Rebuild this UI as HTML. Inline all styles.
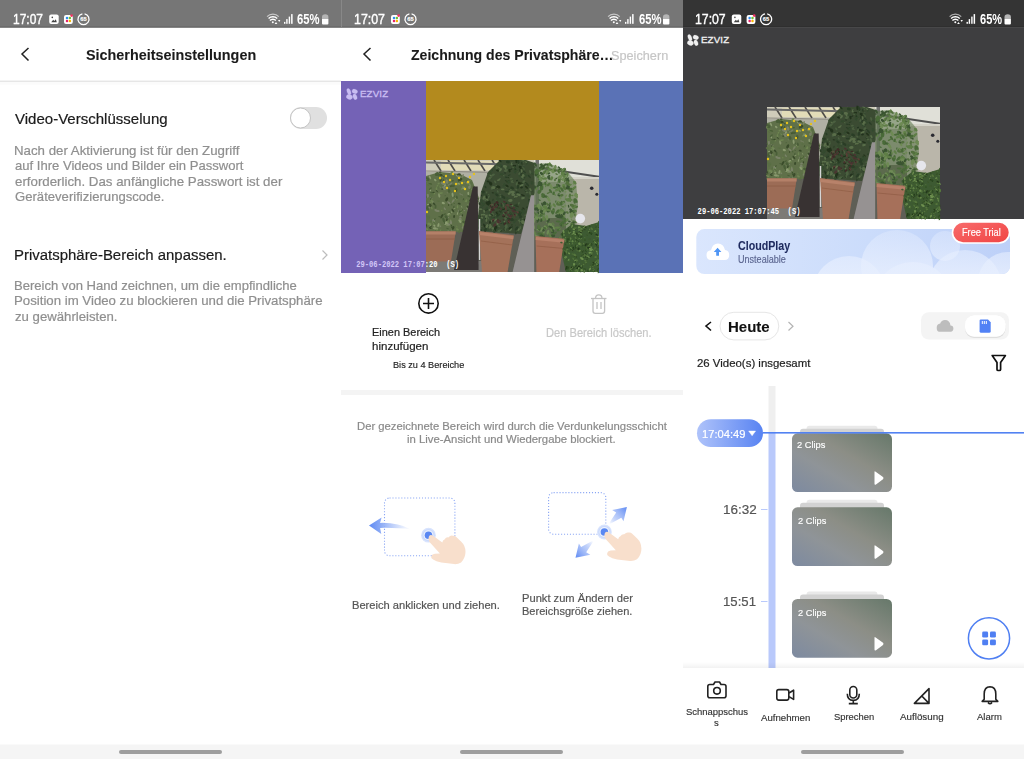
<!DOCTYPE html>
<html><head><meta charset="utf-8">
<style>
html,body{margin:0;padding:0;width:1024px;height:759px;overflow:hidden;background:#fff;}
body{position:relative;font-family:"Liberation Sans",sans-serif;}
svg.bg{position:absolute;left:0;top:0;}
.t{position:absolute;white-space:nowrap;line-height:1;transform-origin:0 0;}
</style></head><body>
<svg class="bg" width="1024" height="759" viewBox="0 0 1024 759">
<defs>
 <filter id="pblur" x="0" y="0" width="1" height="1"><feGaussianBlur stdDeviation="0.45"/></filter>
 <g id="photo" filter="url(#pblur)">
<rect width="173" height="112" fill="#a4a69a"/>
<rect y="58" width="140" height="54" fill="#5e5e56"/>
<rect y="10" width="72" height="30" fill="#b0b0a4"/>
<rect width="108" height="12" fill="#cfccba"/>
<rect x="15" y="1" width="60" height="9" fill="#e2dcb8"/>
<rect x="108" width="65" height="19" fill="#e0e0d8"/>
<path d="M8 0 L15 11" stroke="#4e4c48" stroke-width="1.6"/>
<path d="M22 0 L29 11" stroke="#4e4c48" stroke-width="1.6"/>
<path d="M38 0 L45 11" stroke="#4e4c48" stroke-width="1.6"/>
<path d="M52 0 L59 11" stroke="#4e4c48" stroke-width="1.6"/>
<path d="M66 0 L73 11" stroke="#4e4c48" stroke-width="1.6"/>
<path d="M80 0 L87 11" stroke="#4e4c48" stroke-width="1.6"/>
<path d="M0 2.5 L108 5" stroke="#6a6a6a" stroke-width="1.8"/>
<path d="M0 11 L108 13" stroke="#8a8880" stroke-width="1.2"/>
<path d="M107.7 7.1 L173 16.7" stroke="#505050" stroke-width="2"/>
<rect x="108" y="17" width="65" height="5" fill="#d4d2c8"/>
<rect x="140" y="19" width="33" height="50" fill="#bab6aa"/>
<circle cx="165.7" cy="28.2" r="1.8" fill="#2a2a30"/><circle cx="170.8" cy="34.3" r="1.5" fill="#2a2a30"/>
<rect x="109.5" y="0" width="3.5" height="60" fill="#707070"/>
<path d="M0.0 16.0 L14.0 12.0 L34.0 14.0 L46.0 20.0 L53.0 38.0 L50.0 60.0 L46.0 72.0 L0.0 72.0 Z" fill="#5e7048" />
<ellipse cx="17.2" cy="21.1" rx="1.8" ry="0.7" transform="rotate(96 17.2 21.1)" fill="#3a4c2c"/>
<ellipse cx="30.9" cy="66.6" rx="1.1" ry="0.4" transform="rotate(75 30.9 66.6)" fill="#6e8452"/>
<ellipse cx="4.8" cy="37.5" rx="2.1" ry="0.8" transform="rotate(40 4.8 37.5)" fill="#7a8268"/>
<ellipse cx="30.9" cy="15.7" rx="1.7" ry="0.6" transform="rotate(40 30.9 15.7)" fill="#8a9a70"/>
<ellipse cx="45.5" cy="29.4" rx="1.0" ry="0.4" transform="rotate(56 45.5 29.4)" fill="#7a8268"/>
<ellipse cx="9.6" cy="46.9" rx="1.8" ry="0.9" transform="rotate(99 9.6 46.9)" fill="#4a5e38"/>
<ellipse cx="29.9" cy="49.1" rx="1.6" ry="0.9" transform="rotate(140 29.9 49.1)" fill="#5a6e44"/>
<ellipse cx="31.0" cy="39.2" rx="1.3" ry="0.8" transform="rotate(126 31.0 39.2)" fill="#6e8452"/>
<ellipse cx="4.3" cy="30.0" rx="1.6" ry="0.7" transform="rotate(81 4.3 30.0)" fill="#8a9a70"/>
<ellipse cx="22.2" cy="57.4" rx="1.0" ry="0.5" transform="rotate(7 22.2 57.4)" fill="#7a8268"/>
<ellipse cx="4.1" cy="45.5" rx="2.1" ry="1.3" transform="rotate(61 4.1 45.5)" fill="#3a4c2c"/>
<ellipse cx="31.5" cy="46.8" rx="1.5" ry="1.0" transform="rotate(170 31.5 46.8)" fill="#5a6e44"/>
<ellipse cx="36.9" cy="15.9" rx="2.0" ry="0.9" transform="rotate(104 36.9 15.9)" fill="#7a8268"/>
<ellipse cx="43.6" cy="29.1" rx="1.4" ry="0.8" transform="rotate(4 43.6 29.1)" fill="#5a6e44"/>
<ellipse cx="18.8" cy="48.7" rx="1.6" ry="0.7" transform="rotate(52 18.8 48.7)" fill="#7a8268"/>
<ellipse cx="13.1" cy="35.5" rx="2.2" ry="0.8" transform="rotate(81 13.1 35.5)" fill="#8a9a70"/>
<ellipse cx="14.7" cy="20.2" rx="1.5" ry="0.8" transform="rotate(127 14.7 20.2)" fill="#3a4c2c"/>
<ellipse cx="36.2" cy="34.8" rx="1.2" ry="0.4" transform="rotate(27 36.2 34.8)" fill="#7a8268"/>
<ellipse cx="12.4" cy="41.1" rx="1.7" ry="0.8" transform="rotate(1 12.4 41.1)" fill="#5a6e44"/>
<ellipse cx="28.3" cy="48.6" rx="1.3" ry="0.5" transform="rotate(155 28.3 48.6)" fill="#8a9a70"/>
<ellipse cx="34.7" cy="56.4" rx="1.5" ry="1.0" transform="rotate(171 34.7 56.4)" fill="#7a8268"/>
<ellipse cx="42.3" cy="35.5" rx="1.4" ry="0.6" transform="rotate(114 42.3 35.5)" fill="#4a5e38"/>
<ellipse cx="10.1" cy="71.1" rx="1.5" ry="0.6" transform="rotate(108 10.1 71.1)" fill="#4a5e38"/>
<ellipse cx="0.0" cy="21.1" rx="1.0" ry="0.5" transform="rotate(5 0.0 21.1)" fill="#6e8452"/>
<ellipse cx="32.5" cy="20.9" rx="1.2" ry="0.6" transform="rotate(66 32.5 20.9)" fill="#4a5e38"/>
<ellipse cx="6.1" cy="41.3" rx="2.4" ry="1.2" transform="rotate(56 6.1 41.3)" fill="#6e8452"/>
<ellipse cx="5.4" cy="32.6" rx="1.2" ry="0.8" transform="rotate(29 5.4 32.6)" fill="#4a5e38"/>
<ellipse cx="10.9" cy="69.1" rx="1.4" ry="0.8" transform="rotate(165 10.9 69.1)" fill="#8a9a70"/>
<ellipse cx="15.8" cy="50.6" rx="0.9" ry="0.6" transform="rotate(93 15.8 50.6)" fill="#6e8452"/>
<ellipse cx="18.9" cy="25.4" rx="1.7" ry="0.9" transform="rotate(115 18.9 25.4)" fill="#8a9a70"/>
<ellipse cx="43.0" cy="71.1" rx="2.2" ry="1.4" transform="rotate(147 43.0 71.1)" fill="#7a8268"/>
<ellipse cx="42.6" cy="24.0" rx="1.6" ry="1.0" transform="rotate(178 42.6 24.0)" fill="#3a4c2c"/>
<ellipse cx="25.0" cy="23.6" rx="1.8" ry="0.8" transform="rotate(146 25.0 23.6)" fill="#7a8268"/>
<ellipse cx="19.3" cy="25.2" rx="1.2" ry="0.5" transform="rotate(37 19.3 25.2)" fill="#8a9a70"/>
<ellipse cx="0.1" cy="66.6" rx="1.4" ry="0.8" transform="rotate(150 0.1 66.6)" fill="#4a5e38"/>
<ellipse cx="48.2" cy="58.9" rx="2.0" ry="1.0" transform="rotate(32 48.2 58.9)" fill="#7a8268"/>
<ellipse cx="17.6" cy="60.0" rx="2.4" ry="1.2" transform="rotate(72 17.6 60.0)" fill="#4a5e38"/>
<ellipse cx="38.4" cy="22.2" rx="1.0" ry="0.4" transform="rotate(163 38.4 22.2)" fill="#7a8268"/>
<ellipse cx="7.7" cy="61.6" rx="2.4" ry="1.4" transform="rotate(63 7.7 61.6)" fill="#8a9a70"/>
<ellipse cx="42.4" cy="55.6" rx="1.0" ry="0.6" transform="rotate(25 42.4 55.6)" fill="#6e8452"/>
<ellipse cx="43.8" cy="24.7" rx="1.2" ry="0.5" transform="rotate(43 43.8 24.7)" fill="#8a9a70"/>
<ellipse cx="17.3" cy="44.7" rx="2.1" ry="0.8" transform="rotate(133 17.3 44.7)" fill="#5a6e44"/>
<ellipse cx="35.1" cy="60.9" rx="1.6" ry="1.0" transform="rotate(158 35.1 60.9)" fill="#6e8452"/>
<ellipse cx="28.2" cy="43.4" rx="0.8" ry="0.4" transform="rotate(33 28.2 43.4)" fill="#4a5e38"/>
<ellipse cx="41.1" cy="21.0" rx="1.0" ry="0.6" transform="rotate(22 41.1 21.0)" fill="#4a5e38"/>
<ellipse cx="17.3" cy="43.1" rx="1.7" ry="1.1" transform="rotate(19 17.3 43.1)" fill="#8a9a70"/>
<ellipse cx="3.0" cy="23.5" rx="0.9" ry="0.3" transform="rotate(81 3.0 23.5)" fill="#4a5e38"/>
<ellipse cx="40.3" cy="66.7" rx="1.5" ry="0.9" transform="rotate(91 40.3 66.7)" fill="#8a9a70"/>
<ellipse cx="10.6" cy="28.6" rx="1.6" ry="1.0" transform="rotate(91 10.6 28.6)" fill="#6e8452"/>
<ellipse cx="37.1" cy="64.6" rx="2.3" ry="1.0" transform="rotate(101 37.1 64.6)" fill="#6e8452"/>
<ellipse cx="44.5" cy="20.2" rx="1.0" ry="0.5" transform="rotate(13 44.5 20.2)" fill="#6e8452"/>
<ellipse cx="22.7" cy="24.8" rx="1.3" ry="0.5" transform="rotate(140 22.7 24.8)" fill="#7a8268"/>
<ellipse cx="34.1" cy="34.0" rx="1.2" ry="0.5" transform="rotate(84 34.1 34.0)" fill="#7a8268"/>
<ellipse cx="50.5" cy="35.9" rx="1.6" ry="1.1" transform="rotate(150 50.5 35.9)" fill="#6e8452"/>
<ellipse cx="37.4" cy="71.6" rx="1.4" ry="0.7" transform="rotate(64 37.4 71.6)" fill="#4a5e38"/>
<ellipse cx="29.4" cy="38.4" rx="0.8" ry="0.4" transform="rotate(112 29.4 38.4)" fill="#8a9a70"/>
<ellipse cx="14.4" cy="66.4" rx="1.1" ry="0.7" transform="rotate(148 14.4 66.4)" fill="#7a8268"/>
<ellipse cx="43.4" cy="27.5" rx="1.0" ry="0.7" transform="rotate(103 43.4 27.5)" fill="#7a8268"/>
<ellipse cx="17.3" cy="28.7" rx="2.1" ry="0.9" transform="rotate(161 17.3 28.7)" fill="#3a4c2c"/>
<ellipse cx="49.7" cy="50.1" rx="2.1" ry="0.8" transform="rotate(154 49.7 50.1)" fill="#4a5e38"/>
<ellipse cx="14.0" cy="19.3" rx="0.8" ry="0.6" transform="rotate(75 14.0 19.3)" fill="#3a4c2c"/>
<ellipse cx="33.0" cy="14.6" rx="1.9" ry="1.3" transform="rotate(174 33.0 14.6)" fill="#3a4c2c"/>
<ellipse cx="2.7" cy="24.1" rx="1.3" ry="0.6" transform="rotate(137 2.7 24.1)" fill="#3a4c2c"/>
<ellipse cx="23.6" cy="52.3" rx="1.2" ry="0.8" transform="rotate(179 23.6 52.3)" fill="#4a5e38"/>
<ellipse cx="0.8" cy="56.0" rx="1.7" ry="0.7" transform="rotate(85 0.8 56.0)" fill="#5a6e44"/>
<ellipse cx="5.6" cy="61.1" rx="1.5" ry="0.8" transform="rotate(150 5.6 61.1)" fill="#5a6e44"/>
<ellipse cx="11.4" cy="25.8" rx="1.1" ry="0.7" transform="rotate(131 11.4 25.8)" fill="#6e8452"/>
<ellipse cx="21.4" cy="32.9" rx="0.9" ry="0.4" transform="rotate(13 21.4 32.9)" fill="#7a8268"/>
<ellipse cx="46.6" cy="37.8" rx="0.9" ry="0.5" transform="rotate(69 46.6 37.8)" fill="#8a9a70"/>
<ellipse cx="35.5" cy="28.9" rx="1.2" ry="0.5" transform="rotate(83 35.5 28.9)" fill="#6e8452"/>
<ellipse cx="14.3" cy="12.2" rx="1.4" ry="0.6" transform="rotate(177 14.3 12.2)" fill="#3a4c2c"/>
<ellipse cx="13.0" cy="69.9" rx="1.3" ry="0.6" transform="rotate(0 13.0 69.9)" fill="#5a6e44"/>
<ellipse cx="4.4" cy="28.7" rx="1.8" ry="0.8" transform="rotate(140 4.4 28.7)" fill="#4a5e38"/>
<ellipse cx="14.0" cy="17.4" rx="1.4" ry="0.5" transform="rotate(4 14.0 17.4)" fill="#3a4c2c"/>
<ellipse cx="33.4" cy="17.1" rx="2.3" ry="1.5" transform="rotate(28 33.4 17.1)" fill="#7a8268"/>
<ellipse cx="41.6" cy="47.8" rx="2.0" ry="1.2" transform="rotate(89 41.6 47.8)" fill="#3a4c2c"/>
<ellipse cx="38.4" cy="50.6" rx="0.9" ry="0.6" transform="rotate(161 38.4 50.6)" fill="#7a8268"/>
<ellipse cx="22.7" cy="54.1" rx="1.6" ry="1.1" transform="rotate(136 22.7 54.1)" fill="#8a9a70"/>
<ellipse cx="44.3" cy="60.3" rx="2.1" ry="1.2" transform="rotate(161 44.3 60.3)" fill="#7a8268"/>
<ellipse cx="50.7" cy="50.6" rx="0.9" ry="0.3" transform="rotate(115 50.7 50.6)" fill="#4a5e38"/>
<ellipse cx="20.0" cy="39.1" rx="0.9" ry="0.3" transform="rotate(96 20.0 39.1)" fill="#6e8452"/>
<ellipse cx="42.3" cy="56.9" rx="1.6" ry="0.9" transform="rotate(119 42.3 56.9)" fill="#4a5e38"/>
<ellipse cx="39.5" cy="40.4" rx="2.1" ry="1.4" transform="rotate(42 39.5 40.4)" fill="#6e8452"/>
<ellipse cx="12.2" cy="51.0" rx="1.5" ry="1.0" transform="rotate(14 12.2 51.0)" fill="#7a8268"/>
<ellipse cx="15.2" cy="14.8" rx="1.8" ry="0.8" transform="rotate(108 15.2 14.8)" fill="#3a4c2c"/>
<ellipse cx="13.5" cy="56.6" rx="1.3" ry="0.7" transform="rotate(2 13.5 56.6)" fill="#4a5e38"/>
<ellipse cx="25.7" cy="70.4" rx="1.0" ry="0.4" transform="rotate(88 25.7 70.4)" fill="#7a8268"/>
<ellipse cx="27.4" cy="39.9" rx="1.5" ry="0.6" transform="rotate(161 27.4 39.9)" fill="#6e8452"/>
<ellipse cx="16.5" cy="17.2" rx="1.6" ry="0.7" transform="rotate(14 16.5 17.2)" fill="#8a9a70"/>
<ellipse cx="51.3" cy="39.0" rx="1.2" ry="0.5" transform="rotate(170 51.3 39.0)" fill="#6e8452"/>
<ellipse cx="4.0" cy="17.4" rx="2.0" ry="0.9" transform="rotate(65 4.0 17.4)" fill="#8a9a70"/>
<ellipse cx="43.5" cy="42.5" rx="2.2" ry="1.3" transform="rotate(42 43.5 42.5)" fill="#5a6e44"/>
<ellipse cx="20.9" cy="21.5" rx="2.3" ry="1.4" transform="rotate(73 20.9 21.5)" fill="#7a8268"/>
<ellipse cx="7.5" cy="32.6" rx="1.3" ry="0.8" transform="rotate(0 7.5 32.6)" fill="#3a4c2c"/>
<ellipse cx="49.1" cy="54.8" rx="2.2" ry="1.0" transform="rotate(67 49.1 54.8)" fill="#5a6e44"/>
<ellipse cx="20.7" cy="64.2" rx="0.9" ry="0.6" transform="rotate(136 20.7 64.2)" fill="#4a5e38"/>
<ellipse cx="14.9" cy="15.1" rx="1.9" ry="1.1" transform="rotate(27 14.9 15.1)" fill="#3a4c2c"/>
<ellipse cx="23.1" cy="30.9" rx="2.0" ry="1.3" transform="rotate(77 23.1 30.9)" fill="#4a5e38"/>
<ellipse cx="43.0" cy="49.9" rx="2.3" ry="1.5" transform="rotate(99 43.0 49.9)" fill="#7a8268"/>
<ellipse cx="4.3" cy="68.0" rx="1.5" ry="0.8" transform="rotate(25 4.3 68.0)" fill="#3a4c2c"/>
<ellipse cx="25.7" cy="66.7" rx="1.7" ry="0.7" transform="rotate(75 25.7 66.7)" fill="#3a4c2c"/>
<ellipse cx="15.8" cy="56.3" rx="2.4" ry="1.0" transform="rotate(118 15.8 56.3)" fill="#3a4c2c"/>
<ellipse cx="25.6" cy="52.1" rx="1.0" ry="0.6" transform="rotate(14 25.6 52.1)" fill="#8a9a70"/>
<ellipse cx="48.0" cy="41.8" rx="1.2" ry="0.8" transform="rotate(179 48.0 41.8)" fill="#5a6e44"/>
<ellipse cx="22.7" cy="44.9" rx="1.2" ry="0.5" transform="rotate(100 22.7 44.9)" fill="#3a4c2c"/>
<ellipse cx="12.7" cy="27.5" rx="1.7" ry="1.1" transform="rotate(135 12.7 27.5)" fill="#5a6e44"/>
<ellipse cx="20.3" cy="56.8" rx="1.1" ry="0.5" transform="rotate(135 20.3 56.8)" fill="#5a6e44"/>
<ellipse cx="14.7" cy="70.1" rx="1.0" ry="0.5" transform="rotate(113 14.7 70.1)" fill="#6e8452"/>
<ellipse cx="4.9" cy="65.8" rx="1.4" ry="0.8" transform="rotate(78 4.9 65.8)" fill="#3a4c2c"/>
<ellipse cx="45.0" cy="64.4" rx="0.8" ry="0.3" transform="rotate(128 45.0 64.4)" fill="#5a6e44"/>
<ellipse cx="51.3" cy="41.4" rx="0.9" ry="0.6" transform="rotate(167 51.3 41.4)" fill="#8a9a70"/>
<ellipse cx="45.3" cy="70.3" rx="1.2" ry="0.5" transform="rotate(28 45.3 70.3)" fill="#8a9a70"/>
<ellipse cx="43.7" cy="54.1" rx="2.2" ry="1.4" transform="rotate(15 43.7 54.1)" fill="#4a5e38"/>
<ellipse cx="0.1" cy="19.5" rx="1.7" ry="0.6" transform="rotate(129 0.1 19.5)" fill="#6e8452"/>
<ellipse cx="33.2" cy="43.7" rx="1.5" ry="0.9" transform="rotate(18 33.2 43.7)" fill="#3a4c2c"/>
<ellipse cx="27.8" cy="47.0" rx="1.4" ry="0.6" transform="rotate(108 27.8 47.0)" fill="#4a5e38"/>
<ellipse cx="28.5" cy="71.8" rx="1.2" ry="0.6" transform="rotate(151 28.5 71.8)" fill="#6e8452"/>
<ellipse cx="25.2" cy="26.1" rx="1.2" ry="0.8" transform="rotate(127 25.2 26.1)" fill="#3a4c2c"/>
<ellipse cx="2.9" cy="23.6" rx="2.2" ry="1.3" transform="rotate(15 2.9 23.6)" fill="#6e8452"/>
<ellipse cx="35.4" cy="67.5" rx="1.2" ry="0.4" transform="rotate(61 35.4 67.5)" fill="#5a6e44"/>
<ellipse cx="19.2" cy="35.8" rx="0.8" ry="0.4" transform="rotate(152 19.2 35.8)" fill="#4a5e38"/>
<ellipse cx="10.9" cy="70.2" rx="1.3" ry="0.8" transform="rotate(42 10.9 70.2)" fill="#6e8452"/>
<ellipse cx="14.0" cy="65.4" rx="1.0" ry="0.6" transform="rotate(110 14.0 65.4)" fill="#6e8452"/>
<ellipse cx="25.7" cy="66.6" rx="0.9" ry="0.5" transform="rotate(166 25.7 66.6)" fill="#4a5e38"/>
<ellipse cx="11.3" cy="70.4" rx="1.0" ry="0.4" transform="rotate(11 11.3 70.4)" fill="#5a6e44"/>
<ellipse cx="23.8" cy="54.7" rx="1.3" ry="0.5" transform="rotate(14 23.8 54.7)" fill="#6e8452"/>
<ellipse cx="17.4" cy="23.1" rx="2.3" ry="1.4" transform="rotate(6 17.4 23.1)" fill="#7a8268"/>
<ellipse cx="38.4" cy="62.3" rx="2.4" ry="1.2" transform="rotate(20 38.4 62.3)" fill="#4a5e38"/>
<ellipse cx="14.8" cy="33.1" rx="2.3" ry="0.9" transform="rotate(174 14.8 33.1)" fill="#6e8452"/>
<ellipse cx="20.1" cy="58.1" rx="1.3" ry="0.8" transform="rotate(16 20.1 58.1)" fill="#7a8268"/>
<ellipse cx="25.1" cy="34.4" rx="2.3" ry="0.9" transform="rotate(66 25.1 34.4)" fill="#5a6e44"/>
<ellipse cx="1.6" cy="36.6" rx="2.1" ry="1.3" transform="rotate(7 1.6 36.6)" fill="#4a5e38"/>
<ellipse cx="24.6" cy="60.2" rx="0.9" ry="0.4" transform="rotate(11 24.6 60.2)" fill="#8a9a70"/>
<ellipse cx="18.0" cy="28.3" rx="2.3" ry="1.3" transform="rotate(47 18.0 28.3)" fill="#7a8268"/>
<ellipse cx="36.5" cy="67.5" rx="1.3" ry="0.8" transform="rotate(107 36.5 67.5)" fill="#7a8268"/>
<ellipse cx="37.9" cy="39.9" rx="2.0" ry="1.3" transform="rotate(164 37.9 39.9)" fill="#5a6e44"/>
<ellipse cx="7.0" cy="41.8" rx="0.8" ry="0.6" transform="rotate(55 7.0 41.8)" fill="#7a8268"/>
<ellipse cx="41.0" cy="48.4" rx="1.3" ry="0.6" transform="rotate(65 41.0 48.4)" fill="#8a9a70"/>
<ellipse cx="4.2" cy="23.8" rx="2.0" ry="0.9" transform="rotate(12 4.2 23.8)" fill="#4a5e38"/>
<ellipse cx="25.5" cy="44.7" rx="1.1" ry="0.5" transform="rotate(19 25.5 44.7)" fill="#4a5e38"/>
<ellipse cx="14.0" cy="17.0" rx="1.0" ry="0.5" transform="rotate(128 14.0 17.0)" fill="#5a6e44"/>
<ellipse cx="9.2" cy="20.0" rx="1.5" ry="1.0" transform="rotate(42 9.2 20.0)" fill="#8a9a70"/>
<ellipse cx="44.9" cy="51.9" rx="1.0" ry="0.6" transform="rotate(53 44.9 51.9)" fill="#8a9a70"/>
<ellipse cx="14.2" cy="27.2" rx="1.2" ry="0.6" transform="rotate(33 14.2 27.2)" fill="#6e8452"/>
<ellipse cx="8.1" cy="65.1" rx="1.7" ry="0.8" transform="rotate(71 8.1 65.1)" fill="#6e8452"/>
<ellipse cx="26.9" cy="25.9" rx="2.1" ry="1.2" transform="rotate(178 26.9 25.9)" fill="#4a5e38"/>
<ellipse cx="0.2" cy="65.0" rx="1.2" ry="0.6" transform="rotate(67 0.2 65.0)" fill="#3a4c2c"/>
<ellipse cx="12.3" cy="15.0" rx="1.8" ry="1.1" transform="rotate(35 12.3 15.0)" fill="#4a5e38"/>
<ellipse cx="19.7" cy="64.0" rx="1.5" ry="0.7" transform="rotate(140 19.7 64.0)" fill="#4a5e38"/>
<ellipse cx="5.6" cy="47.8" rx="1.8" ry="0.8" transform="rotate(66 5.6 47.8)" fill="#6e8452"/>
<ellipse cx="2.3" cy="72.0" rx="0.9" ry="0.5" transform="rotate(165 2.3 72.0)" fill="#4a5e38"/>
<ellipse cx="43.4" cy="36.5" rx="1.4" ry="0.8" transform="rotate(14 43.4 36.5)" fill="#4a5e38"/>
<ellipse cx="42.1" cy="44.9" rx="0.9" ry="0.3" transform="rotate(71 42.1 44.9)" fill="#8a9a70"/>
<ellipse cx="8.2" cy="44.0" rx="1.8" ry="0.9" transform="rotate(49 8.2 44.0)" fill="#3a4c2c"/>
<ellipse cx="35.4" cy="37.1" rx="0.9" ry="0.5" transform="rotate(159 35.4 37.1)" fill="#5a6e44"/>
<ellipse cx="22.1" cy="63.9" rx="2.4" ry="1.1" transform="rotate(35 22.1 63.9)" fill="#7a8268"/>
<ellipse cx="21.5" cy="68.5" rx="1.5" ry="0.6" transform="rotate(20 21.5 68.5)" fill="#4a5e38"/>
<ellipse cx="21.5" cy="65.0" rx="1.5" ry="0.6" transform="rotate(3 21.5 65.0)" fill="#8a9a70"/>
<ellipse cx="7.6" cy="60.4" rx="1.4" ry="0.8" transform="rotate(167 7.6 60.4)" fill="#7a8268"/>
<ellipse cx="26.7" cy="20.8" rx="1.3" ry="0.7" transform="rotate(167 26.7 20.8)" fill="#4a5e38"/>
<ellipse cx="20.3" cy="57.2" rx="2.1" ry="1.3" transform="rotate(54 20.3 57.2)" fill="#4a5e38"/>
<ellipse cx="51.7" cy="41.0" rx="0.9" ry="0.6" transform="rotate(70 51.7 41.0)" fill="#7a8268"/>
<ellipse cx="32.9" cy="61.5" rx="1.1" ry="0.7" transform="rotate(40 32.9 61.5)" fill="#5a6e44"/>
<ellipse cx="32.6" cy="23.8" rx="1.6" ry="0.9" transform="rotate(8 32.6 23.8)" fill="#8a9a70"/>
<ellipse cx="8.3" cy="33.6" rx="1.0" ry="0.7" transform="rotate(147 8.3 33.6)" fill="#6e8452"/>
<ellipse cx="2.2" cy="45.7" rx="2.0" ry="0.7" transform="rotate(151 2.2 45.7)" fill="#4a5e38"/>
<ellipse cx="20.7" cy="39.3" rx="2.2" ry="1.3" transform="rotate(117 20.7 39.3)" fill="#3a4c2c"/>
<ellipse cx="30.9" cy="37.5" rx="1.9" ry="0.9" transform="rotate(79 30.9 37.5)" fill="#4a5e38"/>
<ellipse cx="0.2" cy="71.2" rx="1.5" ry="0.8" transform="rotate(111 0.2 71.2)" fill="#5a6e44"/>
<ellipse cx="44.3" cy="60.6" rx="1.4" ry="0.5" transform="rotate(65 44.3 60.6)" fill="#3a4c2c"/>
<ellipse cx="4.9" cy="38.5" rx="1.6" ry="0.6" transform="rotate(115 4.9 38.5)" fill="#4a5e38"/>
<ellipse cx="48.9" cy="30.8" rx="2.0" ry="0.7" transform="rotate(135 48.9 30.8)" fill="#5a6e44"/>
<ellipse cx="34.6" cy="59.1" rx="0.8" ry="0.3" transform="rotate(111 34.6 59.1)" fill="#7a8268"/>
<ellipse cx="43.2" cy="23.6" rx="2.4" ry="1.2" transform="rotate(172 43.2 23.6)" fill="#6e8452"/>
<ellipse cx="36.4" cy="55.3" rx="1.2" ry="0.7" transform="rotate(110 36.4 55.3)" fill="#3a4c2c"/>
<ellipse cx="8.4" cy="65.8" rx="1.2" ry="0.8" transform="rotate(26 8.4 65.8)" fill="#8a9a70"/>
<ellipse cx="51.1" cy="40.8" rx="1.7" ry="1.0" transform="rotate(43 51.1 40.8)" fill="#3a4c2c"/>
<ellipse cx="2.0" cy="22.9" rx="1.1" ry="0.7" transform="rotate(122 2.0 22.9)" fill="#5a6e44"/>
<ellipse cx="8.9" cy="59.1" rx="1.0" ry="0.5" transform="rotate(115 8.9 59.1)" fill="#3a4c2c"/>
<ellipse cx="51.2" cy="39.2" rx="1.6" ry="1.0" transform="rotate(161 51.2 39.2)" fill="#3a4c2c"/>
<ellipse cx="20.9" cy="59.9" rx="1.2" ry="0.9" transform="rotate(104 20.9 59.9)" fill="#3a4c2c"/>
<ellipse cx="17.5" cy="16.9" rx="1.2" ry="0.7" transform="rotate(172 17.5 16.9)" fill="#3a4c2c"/>
<ellipse cx="43.5" cy="27.2" rx="1.8" ry="1.3" transform="rotate(105 43.5 27.2)" fill="#7a8268"/>
<ellipse cx="47.5" cy="56.0" rx="2.0" ry="0.9" transform="rotate(52 47.5 56.0)" fill="#7a8268"/>
<ellipse cx="22.9" cy="42.8" rx="2.2" ry="0.9" transform="rotate(41 22.9 42.8)" fill="#7a8268"/>
<ellipse cx="30.1" cy="30.2" rx="1.6" ry="0.9" transform="rotate(74 30.1 30.2)" fill="#3a4c2c"/>
<ellipse cx="31.2" cy="24.3" rx="1.8" ry="0.9" transform="rotate(24 31.2 24.3)" fill="#6e8452"/>
<ellipse cx="37.5" cy="39.1" rx="0.9" ry="0.4" transform="rotate(120 37.5 39.1)" fill="#3a4c2c"/>
<ellipse cx="21.3" cy="27.9" rx="0.8" ry="0.5" transform="rotate(101 21.3 27.9)" fill="#3a4c2c"/>
<ellipse cx="31.5" cy="46.7" rx="1.8" ry="0.9" transform="rotate(89 31.5 46.7)" fill="#6e8452"/>
<ellipse cx="28.2" cy="36.4" rx="1.2" ry="0.4" transform="rotate(140 28.2 36.4)" fill="#4a5e38"/>
<ellipse cx="32.5" cy="51.4" rx="1.1" ry="0.6" transform="rotate(93 32.5 51.4)" fill="#7a8268"/>
<ellipse cx="26.9" cy="50.5" rx="2.1" ry="0.9" transform="rotate(56 26.9 50.5)" fill="#3a4c2c"/>
<ellipse cx="33.2" cy="71.6" rx="2.0" ry="1.0" transform="rotate(97 33.2 71.6)" fill="#5a6e44"/>
<ellipse cx="44.8" cy="56.7" rx="1.5" ry="0.9" transform="rotate(81 44.8 56.7)" fill="#6e8452"/>
<ellipse cx="34.1" cy="19.4" rx="2.2" ry="1.5" transform="rotate(170 34.1 19.4)" fill="#3a4c2c"/>
<ellipse cx="37.7" cy="28.0" rx="1.7" ry="0.8" transform="rotate(142 37.7 28.0)" fill="#8a9a70"/>
<ellipse cx="4.5" cy="42.4" rx="1.1" ry="0.7" transform="rotate(152 4.5 42.4)" fill="#6e8452"/>
<ellipse cx="50.1" cy="56.8" rx="1.3" ry="0.9" transform="rotate(59 50.1 56.8)" fill="#6e8452"/>
<ellipse cx="20.1" cy="63.1" rx="2.3" ry="1.6" transform="rotate(151 20.1 63.1)" fill="#8a9a70"/>
<ellipse cx="24.9" cy="62.4" rx="1.9" ry="1.2" transform="rotate(79 24.9 62.4)" fill="#7a8268"/>
<ellipse cx="12.4" cy="65.1" rx="2.1" ry="1.0" transform="rotate(105 12.4 65.1)" fill="#8a9a70"/>
<ellipse cx="1.4" cy="18.4" rx="2.3" ry="1.1" transform="rotate(26 1.4 18.4)" fill="#4a5e38"/>
<ellipse cx="1.6" cy="20.3" rx="1.8" ry="0.7" transform="rotate(12 1.6 20.3)" fill="#4a5e38"/>
<ellipse cx="3.5" cy="47.4" rx="1.4" ry="0.9" transform="rotate(148 3.5 47.4)" fill="#7a8268"/>
<ellipse cx="3.5" cy="64.1" rx="2.3" ry="1.5" transform="rotate(19 3.5 64.1)" fill="#6e8452"/>
<ellipse cx="10.8" cy="14.0" rx="2.3" ry="1.6" transform="rotate(136 10.8 14.0)" fill="#4a5e38"/>
<ellipse cx="43.7" cy="49.9" rx="1.3" ry="0.5" transform="rotate(18 43.7 49.9)" fill="#7a8268"/>
<ellipse cx="10.9" cy="31.1" rx="1.5" ry="0.5" transform="rotate(46 10.9 31.1)" fill="#3a4c2c"/>
<ellipse cx="2.6" cy="57.6" rx="2.3" ry="1.4" transform="rotate(108 2.6 57.6)" fill="#5a6e44"/>
<ellipse cx="45.1" cy="49.1" rx="0.8" ry="0.4" transform="rotate(79 45.1 49.1)" fill="#4a5e38"/>
<ellipse cx="18.4" cy="54.3" rx="1.7" ry="0.7" transform="rotate(155 18.4 54.3)" fill="#4a5e38"/>
<ellipse cx="30.5" cy="29.2" rx="1.5" ry="0.8" transform="rotate(52 30.5 29.2)" fill="#4a5e38"/>
<ellipse cx="0.2" cy="41.4" rx="1.6" ry="1.0" transform="rotate(33 0.2 41.4)" fill="#5a6e44"/>
<ellipse cx="31.4" cy="69.4" rx="1.6" ry="0.9" transform="rotate(29 31.4 69.4)" fill="#6e8452"/>
<ellipse cx="8.8" cy="68.3" rx="2.0" ry="1.1" transform="rotate(178 8.8 68.3)" fill="#8a9a70"/>
<ellipse cx="41.7" cy="49.7" rx="1.4" ry="0.7" transform="rotate(71 41.7 49.7)" fill="#7a8268"/>
<ellipse cx="4.6" cy="65.3" rx="0.8" ry="0.4" transform="rotate(47 4.6 65.3)" fill="#8a9a70"/>
<ellipse cx="26.6" cy="34.8" rx="2.2" ry="1.0" transform="rotate(83 26.6 34.8)" fill="#8a9a70"/>
<ellipse cx="31.5" cy="53.4" rx="1.8" ry="0.6" transform="rotate(105 31.5 53.4)" fill="#8a9a70"/>
<ellipse cx="8.2" cy="62.6" rx="1.9" ry="1.1" transform="rotate(31 8.2 62.6)" fill="#5a6e44"/>
<ellipse cx="36.5" cy="27.4" rx="1.2" ry="0.5" transform="rotate(116 36.5 27.4)" fill="#7a8268"/>
<ellipse cx="12.6" cy="23.5" rx="1.3" ry="0.8" transform="rotate(152 12.6 23.5)" fill="#6e8452"/>
<ellipse cx="38.3" cy="70.5" rx="2.0" ry="1.1" transform="rotate(63 38.3 70.5)" fill="#6e8452"/>
<ellipse cx="17.4" cy="23.4" rx="2.4" ry="1.4" transform="rotate(18 17.4 23.4)" fill="#7a8268"/>
<ellipse cx="5.4" cy="35.1" rx="2.4" ry="1.5" transform="rotate(132 5.4 35.1)" fill="#5a6e44"/>
<ellipse cx="14.5" cy="18.6" rx="2.3" ry="1.0" transform="rotate(159 14.5 18.6)" fill="#5a6e44"/>
<ellipse cx="1.8" cy="35.9" rx="2.1" ry="1.2" transform="rotate(90 1.8 35.9)" fill="#7a8268"/>
<ellipse cx="15.7" cy="13.3" rx="1.2" ry="0.7" transform="rotate(1 15.7 13.3)" fill="#6e8452"/>
<ellipse cx="48.1" cy="37.8" rx="1.7" ry="1.1" transform="rotate(76 48.1 37.8)" fill="#6e8452"/>
<ellipse cx="35.4" cy="51.1" rx="2.2" ry="1.3" transform="rotate(105 35.4 51.1)" fill="#6e8452"/>
<ellipse cx="36.0" cy="50.5" rx="1.5" ry="0.7" transform="rotate(113 36.0 50.5)" fill="#4a5e38"/>
<ellipse cx="47.4" cy="26.5" rx="1.4" ry="0.9" transform="rotate(28 47.4 26.5)" fill="#5a6e44"/>
<ellipse cx="25.6" cy="13.2" rx="2.2" ry="1.2" transform="rotate(119 25.6 13.2)" fill="#6e8452"/>
<ellipse cx="47.4" cy="31.7" rx="0.8" ry="0.5" transform="rotate(163 47.4 31.7)" fill="#4a5e38"/>
<ellipse cx="2.0" cy="44.6" rx="1.1" ry="0.7" transform="rotate(169 2.0 44.6)" fill="#8a9a70"/>
<ellipse cx="18.5" cy="62.8" rx="1.5" ry="0.6" transform="rotate(86 18.5 62.8)" fill="#4a5e38"/>
<ellipse cx="33.9" cy="61.7" rx="1.6" ry="0.8" transform="rotate(171 33.9 61.7)" fill="#6e8452"/>
<ellipse cx="27.2" cy="68.0" rx="2.0" ry="1.1" transform="rotate(115 27.2 68.0)" fill="#3a4c2c"/>
<ellipse cx="14.5" cy="36.0" rx="0.8" ry="0.4" transform="rotate(76 14.5 36.0)" fill="#7a8268"/>
<ellipse cx="35.8" cy="46.8" rx="1.0" ry="0.4" transform="rotate(72 35.8 46.8)" fill="#8a9a70"/>
<ellipse cx="50.9" cy="39.7" rx="1.1" ry="0.7" transform="rotate(12 50.9 39.7)" fill="#7a8268"/>
<ellipse cx="10.2" cy="50.5" rx="2.0" ry="1.2" transform="rotate(26 10.2 50.5)" fill="#7a8268"/>
<ellipse cx="33.9" cy="61.1" rx="2.1" ry="1.1" transform="rotate(53 33.9 61.1)" fill="#8a9a70"/>
<ellipse cx="34.4" cy="58.8" rx="1.6" ry="1.0" transform="rotate(41 34.4 58.8)" fill="#7a8268"/>
<ellipse cx="19.9" cy="27.2" rx="1.5" ry="0.6" transform="rotate(0 19.9 27.2)" fill="#7a8268"/>
<ellipse cx="42.3" cy="33.5" rx="1.8" ry="0.9" transform="rotate(87 42.3 33.5)" fill="#8a9a70"/>
<ellipse cx="33.8" cy="51.6" rx="1.4" ry="0.9" transform="rotate(154 33.8 51.6)" fill="#4a5e38"/>
<ellipse cx="4.5" cy="45.9" rx="1.3" ry="0.9" transform="rotate(96 4.5 45.9)" fill="#3a4c2c"/>
<ellipse cx="0.6" cy="69.1" rx="1.8" ry="0.8" transform="rotate(18 0.6 69.1)" fill="#6e8452"/>
<ellipse cx="45.3" cy="23.1" rx="1.5" ry="1.0" transform="rotate(38 45.3 23.1)" fill="#5a6e44"/>
<ellipse cx="42.0" cy="22.1" rx="2.2" ry="1.3" transform="rotate(141 42.0 22.1)" fill="#7a8268"/>
<ellipse cx="47.8" cy="44.9" rx="1.8" ry="0.8" transform="rotate(89 47.8 44.9)" fill="#6e8452"/>
<ellipse cx="28.1" cy="56.5" rx="1.5" ry="1.0" transform="rotate(100 28.1 56.5)" fill="#3a4c2c"/>
<ellipse cx="22.2" cy="61.6" rx="1.6" ry="0.8" transform="rotate(87 22.2 61.6)" fill="#6e8452"/>
<ellipse cx="37.1" cy="26.8" rx="1.1" ry="0.6" transform="rotate(132 37.1 26.8)" fill="#6e8452"/>
<ellipse cx="44.6" cy="40.1" rx="1.7" ry="1.0" transform="rotate(151 44.6 40.1)" fill="#3a4c2c"/>
<ellipse cx="22.6" cy="72.0" rx="1.9" ry="0.8" transform="rotate(65 22.6 72.0)" fill="#7a8268"/>
<ellipse cx="1.5" cy="48.6" rx="1.9" ry="1.3" transform="rotate(59 1.5 48.6)" fill="#4a5e38"/>
<ellipse cx="27.1" cy="41.1" rx="2.2" ry="0.8" transform="rotate(129 27.1 41.1)" fill="#7a8268"/>
<circle cx="20" cy="16" r="1.2" fill="#e6c21e"/>
<circle cx="27" cy="14" r="1.2" fill="#e6c21e"/>
<circle cx="24" cy="20" r="1.2" fill="#e6c21e"/>
<circle cx="33" cy="18" r="1.2" fill="#e6c21e"/>
<circle cx="30" cy="24" r="1.2" fill="#e6c21e"/>
<circle cx="36" cy="23" r="1.2" fill="#e6c21e"/>
<circle cx="21" cy="28" r="1.2" fill="#e6c21e"/>
<circle cx="39" cy="29" r="1.2" fill="#e6c21e"/>
<circle cx="18" cy="22" r="1.2" fill="#e6c21e"/>
<circle cx="42" cy="22" r="1.2" fill="#e6c21e"/>
<circle cx="29" cy="31" r="1.2" fill="#e6c21e"/>
<circle cx="14" cy="18" r="1.2" fill="#e6c21e"/>
<circle cx="1" cy="52" r="1.2" fill="#e6c21e"/>
<circle cx="44" cy="17" r="1.2" fill="#e6c21e"/>
<circle cx="48" cy="14" r="1.2" fill="#e6c21e"/>
<path d="M108.0 4.0 L122.0 3.0 L140.0 10.0 L150.0 22.0 L152.0 45.0 L148.0 70.0 L136.0 80.0 L108.0 80.0 Z" fill="#5a7448" fill-opacity="0.55"/>
<ellipse cx="113.6" cy="10.3" rx="2.3" ry="1.1" transform="rotate(140 113.6 10.3)" fill="#52703e"/>
<ellipse cx="141.9" cy="19.2" rx="1.9" ry="0.9" transform="rotate(100 141.9 19.2)" fill="#3a5430"/>
<ellipse cx="120.9" cy="66.7" rx="1.8" ry="1.0" transform="rotate(49 120.9 66.7)" fill="#52703e"/>
<ellipse cx="123.2" cy="18.7" rx="2.0" ry="0.8" transform="rotate(35 123.2 18.7)" fill="#3a5430"/>
<ellipse cx="113.6" cy="77.9" rx="1.2" ry="0.8" transform="rotate(72 113.6 77.9)" fill="#52703e"/>
<ellipse cx="147.0" cy="45.0" rx="1.1" ry="0.5" transform="rotate(1 147.0 45.0)" fill="#5e7e46"/>
<ellipse cx="144.2" cy="39.6" rx="2.5" ry="0.9" transform="rotate(90 144.2 39.6)" fill="#52703e"/>
<ellipse cx="134.9" cy="50.5" rx="2.3" ry="1.3" transform="rotate(107 134.9 50.5)" fill="#4a6a38"/>
<ellipse cx="117.4" cy="54.4" rx="1.9" ry="1.2" transform="rotate(18 117.4 54.4)" fill="#5e7e46"/>
<ellipse cx="146.2" cy="35.5" rx="1.2" ry="0.8" transform="rotate(2 146.2 35.5)" fill="#5e7e46"/>
<ellipse cx="142.6" cy="46.3" rx="1.5" ry="0.7" transform="rotate(76 142.6 46.3)" fill="#3a5430"/>
<ellipse cx="108.9" cy="46.6" rx="2.2" ry="1.4" transform="rotate(90 108.9 46.6)" fill="#52703e"/>
<ellipse cx="109.7" cy="12.2" rx="2.6" ry="1.4" transform="rotate(165 109.7 12.2)" fill="#6e8a54"/>
<ellipse cx="111.0" cy="55.4" rx="2.2" ry="1.5" transform="rotate(119 111.0 55.4)" fill="#5e7e46"/>
<ellipse cx="128.9" cy="34.8" rx="1.2" ry="0.7" transform="rotate(38 128.9 34.8)" fill="#5e7e46"/>
<ellipse cx="135.6" cy="35.9" rx="1.0" ry="0.6" transform="rotate(178 135.6 35.9)" fill="#4a6a38"/>
<ellipse cx="117.6" cy="12.3" rx="1.9" ry="0.9" transform="rotate(102 117.6 12.3)" fill="#6e8a54"/>
<ellipse cx="140.3" cy="17.4" rx="1.1" ry="0.7" transform="rotate(128 140.3 17.4)" fill="#5e7e46"/>
<ellipse cx="135.7" cy="57.6" rx="1.9" ry="1.3" transform="rotate(46 135.7 57.6)" fill="#4a6a38"/>
<ellipse cx="108.6" cy="53.1" rx="2.6" ry="1.0" transform="rotate(56 108.6 53.1)" fill="#52703e"/>
<ellipse cx="115.3" cy="69.3" rx="2.0" ry="0.7" transform="rotate(66 115.3 69.3)" fill="#52703e"/>
<ellipse cx="140.0" cy="39.2" rx="1.3" ry="0.9" transform="rotate(21 140.0 39.2)" fill="#5e7e46"/>
<ellipse cx="135.7" cy="35.2" rx="1.8" ry="1.1" transform="rotate(170 135.7 35.2)" fill="#52703e"/>
<ellipse cx="122.7" cy="24.6" rx="2.2" ry="1.3" transform="rotate(144 122.7 24.6)" fill="#52703e"/>
<ellipse cx="122.6" cy="49.6" rx="3.0" ry="1.9" transform="rotate(108 122.6 49.6)" fill="#3a5430"/>
<ellipse cx="133.7" cy="78.2" rx="1.5" ry="0.7" transform="rotate(68 133.7 78.2)" fill="#5e7e46"/>
<ellipse cx="143.5" cy="24.8" rx="1.0" ry="0.4" transform="rotate(76 143.5 24.8)" fill="#52703e"/>
<ellipse cx="148.5" cy="61.8" rx="2.6" ry="1.2" transform="rotate(25 148.5 61.8)" fill="#52703e"/>
<ellipse cx="114.5" cy="78.1" rx="2.6" ry="1.4" transform="rotate(140 114.5 78.1)" fill="#6e8a54"/>
<ellipse cx="123.3" cy="9.5" rx="2.1" ry="1.3" transform="rotate(36 123.3 9.5)" fill="#5e7e46"/>
<ellipse cx="121.6" cy="7.4" rx="1.8" ry="1.1" transform="rotate(167 121.6 7.4)" fill="#52703e"/>
<ellipse cx="141.0" cy="64.0" rx="1.9" ry="0.7" transform="rotate(145 141.0 64.0)" fill="#4a6a38"/>
<ellipse cx="118.2" cy="47.6" rx="2.8" ry="1.8" transform="rotate(94 118.2 47.6)" fill="#6e8a54"/>
<ellipse cx="130.3" cy="18.5" rx="1.4" ry="0.5" transform="rotate(145 130.3 18.5)" fill="#3a5430"/>
<ellipse cx="124.0" cy="46.5" rx="1.8" ry="1.0" transform="rotate(27 124.0 46.5)" fill="#4a6a38"/>
<ellipse cx="148.6" cy="41.0" rx="2.7" ry="1.3" transform="rotate(83 148.6 41.0)" fill="#4a6a38"/>
<ellipse cx="114.9" cy="49.0" rx="1.7" ry="0.9" transform="rotate(4 114.9 49.0)" fill="#4a6a38"/>
<ellipse cx="117.0" cy="70.0" rx="2.1" ry="1.2" transform="rotate(38 117.0 70.0)" fill="#3a5430"/>
<ellipse cx="126.7" cy="75.9" rx="2.5" ry="1.6" transform="rotate(173 126.7 75.9)" fill="#3a5430"/>
<ellipse cx="145.1" cy="29.1" rx="3.0" ry="1.4" transform="rotate(5 145.1 29.1)" fill="#4a6a38"/>
<ellipse cx="132.5" cy="70.0" rx="1.9" ry="1.3" transform="rotate(164 132.5 70.0)" fill="#4a6a38"/>
<ellipse cx="146.0" cy="52.3" rx="2.8" ry="1.7" transform="rotate(16 146.0 52.3)" fill="#3a5430"/>
<ellipse cx="132.8" cy="52.3" rx="2.9" ry="1.7" transform="rotate(71 132.8 52.3)" fill="#6e8a54"/>
<ellipse cx="145.4" cy="31.6" rx="1.5" ry="0.9" transform="rotate(31 145.4 31.6)" fill="#3a5430"/>
<ellipse cx="148.4" cy="22.9" rx="2.0" ry="1.2" transform="rotate(137 148.4 22.9)" fill="#6e8a54"/>
<ellipse cx="110.5" cy="14.1" rx="2.5" ry="1.7" transform="rotate(122 110.5 14.1)" fill="#3a5430"/>
<ellipse cx="134.0" cy="37.0" rx="2.3" ry="1.2" transform="rotate(67 134.0 37.0)" fill="#6e8a54"/>
<ellipse cx="113.5" cy="40.1" rx="1.3" ry="0.6" transform="rotate(26 113.5 40.1)" fill="#4a6a38"/>
<ellipse cx="128.6" cy="73.3" rx="2.6" ry="1.1" transform="rotate(150 128.6 73.3)" fill="#4a6a38"/>
<ellipse cx="127.7" cy="10.5" rx="2.9" ry="1.8" transform="rotate(113 127.7 10.5)" fill="#6e8a54"/>
<ellipse cx="118.3" cy="11.9" rx="1.7" ry="0.8" transform="rotate(132 118.3 11.9)" fill="#5e7e46"/>
<ellipse cx="139.4" cy="45.6" rx="1.3" ry="0.8" transform="rotate(48 139.4 45.6)" fill="#6e8a54"/>
<ellipse cx="118.9" cy="5.0" rx="2.1" ry="1.0" transform="rotate(145 118.9 5.0)" fill="#3a5430"/>
<ellipse cx="129.6" cy="27.5" rx="2.8" ry="1.1" transform="rotate(176 129.6 27.5)" fill="#4a6a38"/>
<ellipse cx="135.8" cy="63.6" rx="2.9" ry="1.6" transform="rotate(150 135.8 63.6)" fill="#4a6a38"/>
<ellipse cx="119.3" cy="18.5" rx="1.7" ry="1.2" transform="rotate(180 119.3 18.5)" fill="#5e7e46"/>
<ellipse cx="112.3" cy="25.3" rx="2.8" ry="1.0" transform="rotate(131 112.3 25.3)" fill="#3a5430"/>
<ellipse cx="114.4" cy="52.3" rx="1.9" ry="1.0" transform="rotate(92 114.4 52.3)" fill="#6e8a54"/>
<ellipse cx="108.1" cy="67.1" rx="2.1" ry="0.9" transform="rotate(78 108.1 67.1)" fill="#6e8a54"/>
<ellipse cx="117.6" cy="47.0" rx="1.3" ry="0.5" transform="rotate(139 117.6 47.0)" fill="#5e7e46"/>
<ellipse cx="116.7" cy="9.1" rx="1.2" ry="0.7" transform="rotate(89 116.7 9.1)" fill="#3a5430"/>
<ellipse cx="115.7" cy="13.6" rx="2.3" ry="1.3" transform="rotate(35 115.7 13.6)" fill="#3a5430"/>
<ellipse cx="116.9" cy="8.1" rx="2.5" ry="1.2" transform="rotate(130 116.9 8.1)" fill="#4a6a38"/>
<ellipse cx="130.8" cy="29.8" rx="1.6" ry="0.9" transform="rotate(170 130.8 29.8)" fill="#4a6a38"/>
<ellipse cx="108.7" cy="73.1" rx="2.0" ry="1.3" transform="rotate(48 108.7 73.1)" fill="#5e7e46"/>
<ellipse cx="132.8" cy="78.9" rx="1.1" ry="0.6" transform="rotate(103 132.8 78.9)" fill="#4a6a38"/>
<ellipse cx="123.7" cy="74.8" rx="2.9" ry="1.1" transform="rotate(64 123.7 74.8)" fill="#5e7e46"/>
<ellipse cx="143.9" cy="69.6" rx="1.6" ry="1.0" transform="rotate(69 143.9 69.6)" fill="#4a6a38"/>
<ellipse cx="120.8" cy="11.3" rx="2.5" ry="1.2" transform="rotate(5 120.8 11.3)" fill="#52703e"/>
<ellipse cx="113.9" cy="21.8" rx="1.2" ry="0.7" transform="rotate(30 113.9 21.8)" fill="#3a5430"/>
<ellipse cx="119.0" cy="65.9" rx="1.1" ry="0.4" transform="rotate(126 119.0 65.9)" fill="#5e7e46"/>
<ellipse cx="119.5" cy="67.5" rx="2.3" ry="1.2" transform="rotate(43 119.5 67.5)" fill="#6e8a54"/>
<ellipse cx="112.5" cy="70.0" rx="2.4" ry="0.9" transform="rotate(22 112.5 70.0)" fill="#6e8a54"/>
<ellipse cx="133.8" cy="61.6" rx="1.2" ry="0.5" transform="rotate(159 133.8 61.6)" fill="#52703e"/>
<ellipse cx="134.0" cy="69.3" rx="1.3" ry="0.7" transform="rotate(134 134.0 69.3)" fill="#5e7e46"/>
<ellipse cx="135.9" cy="56.4" rx="2.2" ry="1.2" transform="rotate(7 135.9 56.4)" fill="#4a6a38"/>
<ellipse cx="142.2" cy="29.1" rx="1.5" ry="0.7" transform="rotate(78 142.2 29.1)" fill="#52703e"/>
<ellipse cx="143.4" cy="73.3" rx="2.6" ry="1.7" transform="rotate(10 143.4 73.3)" fill="#52703e"/>
<ellipse cx="114.5" cy="55.4" rx="1.7" ry="1.1" transform="rotate(119 114.5 55.4)" fill="#4a6a38"/>
<ellipse cx="124.0" cy="43.9" rx="1.1" ry="0.6" transform="rotate(91 124.0 43.9)" fill="#4a6a38"/>
<ellipse cx="117.9" cy="35.4" rx="1.8" ry="1.3" transform="rotate(82 117.9 35.4)" fill="#4a6a38"/>
<ellipse cx="143.6" cy="71.1" rx="2.8" ry="1.0" transform="rotate(115 143.6 71.1)" fill="#3a5430"/>
<ellipse cx="148.4" cy="51.0" rx="2.3" ry="1.4" transform="rotate(6 148.4 51.0)" fill="#4a6a38"/>
<ellipse cx="119.0" cy="43.1" rx="1.9" ry="1.3" transform="rotate(52 119.0 43.1)" fill="#3a5430"/>
<ellipse cx="123.3" cy="15.9" rx="1.1" ry="0.8" transform="rotate(166 123.3 15.9)" fill="#3a5430"/>
<ellipse cx="111.7" cy="48.4" rx="2.9" ry="1.4" transform="rotate(92 111.7 48.4)" fill="#3a5430"/>
<ellipse cx="148.3" cy="47.5" rx="1.5" ry="0.9" transform="rotate(133 148.3 47.5)" fill="#3a5430"/>
<ellipse cx="144.9" cy="50.0" rx="2.1" ry="1.2" transform="rotate(36 144.9 50.0)" fill="#3a5430"/>
<ellipse cx="128.3" cy="45.2" rx="2.2" ry="1.1" transform="rotate(56 128.3 45.2)" fill="#5e7e46"/>
<ellipse cx="122.7" cy="17.5" rx="2.1" ry="1.4" transform="rotate(71 122.7 17.5)" fill="#3a5430"/>
<ellipse cx="115.1" cy="76.3" rx="1.6" ry="0.8" transform="rotate(49 115.1 76.3)" fill="#5e7e46"/>
<ellipse cx="121.0" cy="62.5" rx="1.3" ry="0.5" transform="rotate(157 121.0 62.5)" fill="#6e8a54"/>
<ellipse cx="136.9" cy="42.8" rx="2.7" ry="1.3" transform="rotate(137 136.9 42.8)" fill="#52703e"/>
<ellipse cx="117.9" cy="76.9" rx="2.5" ry="1.0" transform="rotate(61 117.9 76.9)" fill="#3a5430"/>
<ellipse cx="114.2" cy="18.6" rx="2.2" ry="1.0" transform="rotate(151 114.2 18.6)" fill="#4a6a38"/>
<ellipse cx="140.5" cy="60.2" rx="2.5" ry="1.3" transform="rotate(141 140.5 60.2)" fill="#5e7e46"/>
<ellipse cx="126.2" cy="11.0" rx="1.8" ry="1.0" transform="rotate(21 126.2 11.0)" fill="#6e8a54"/>
<ellipse cx="150.4" cy="47.0" rx="1.8" ry="1.1" transform="rotate(157 150.4 47.0)" fill="#52703e"/>
<ellipse cx="112.9" cy="68.6" rx="2.4" ry="1.1" transform="rotate(63 112.9 68.6)" fill="#3a5430"/>
<ellipse cx="125.2" cy="45.8" rx="1.8" ry="0.8" transform="rotate(142 125.2 45.8)" fill="#6e8a54"/>
<ellipse cx="124.7" cy="26.1" rx="2.1" ry="1.3" transform="rotate(78 124.7 26.1)" fill="#6e8a54"/>
<ellipse cx="133.6" cy="9.8" rx="2.8" ry="1.3" transform="rotate(152 133.6 9.8)" fill="#5e7e46"/>
<ellipse cx="126.8" cy="73.1" rx="1.0" ry="0.4" transform="rotate(102 126.8 73.1)" fill="#6e8a54"/>
<ellipse cx="121.2" cy="44.3" rx="1.6" ry="0.9" transform="rotate(79 121.2 44.3)" fill="#52703e"/>
<ellipse cx="140.0" cy="36.1" rx="1.9" ry="0.7" transform="rotate(122 140.0 36.1)" fill="#6e8a54"/>
<ellipse cx="149.7" cy="55.1" rx="2.1" ry="0.8" transform="rotate(67 149.7 55.1)" fill="#6e8a54"/>
<ellipse cx="136.5" cy="74.5" rx="1.3" ry="0.5" transform="rotate(76 136.5 74.5)" fill="#6e8a54"/>
<ellipse cx="127.4" cy="51.1" rx="3.0" ry="1.4" transform="rotate(95 127.4 51.1)" fill="#4a6a38"/>
<ellipse cx="115.5" cy="27.5" rx="3.0" ry="1.9" transform="rotate(92 115.5 27.5)" fill="#4a6a38"/>
<ellipse cx="136.9" cy="25.7" rx="1.7" ry="1.1" transform="rotate(92 136.9 25.7)" fill="#6e8a54"/>
<ellipse cx="135.8" cy="43.4" rx="2.6" ry="1.1" transform="rotate(161 135.8 43.4)" fill="#6e8a54"/>
<ellipse cx="116.0" cy="51.5" rx="2.2" ry="1.0" transform="rotate(179 116.0 51.5)" fill="#4a6a38"/>
<ellipse cx="108.1" cy="57.7" rx="2.1" ry="1.4" transform="rotate(72 108.1 57.7)" fill="#4a6a38"/>
<ellipse cx="133.8" cy="54.4" rx="1.4" ry="0.7" transform="rotate(100 133.8 54.4)" fill="#3a5430"/>
<ellipse cx="130.6" cy="14.1" rx="1.4" ry="0.8" transform="rotate(26 130.6 14.1)" fill="#52703e"/>
<ellipse cx="112.4" cy="16.1" rx="2.0" ry="1.3" transform="rotate(110 112.4 16.1)" fill="#4a6a38"/>
<ellipse cx="136.6" cy="55.7" rx="2.2" ry="0.9" transform="rotate(43 136.6 55.7)" fill="#3a5430"/>
<ellipse cx="115.5" cy="23.5" rx="1.2" ry="0.8" transform="rotate(105 115.5 23.5)" fill="#3a5430"/>
<ellipse cx="116.4" cy="51.0" rx="1.0" ry="0.4" transform="rotate(71 116.4 51.0)" fill="#4a6a38"/>
<ellipse cx="127.3" cy="50.8" rx="1.5" ry="0.5" transform="rotate(168 127.3 50.8)" fill="#5e7e46"/>
<ellipse cx="121.9" cy="72.2" rx="2.6" ry="1.2" transform="rotate(108 121.9 72.2)" fill="#6e8a54"/>
<ellipse cx="137.8" cy="55.0" rx="2.2" ry="1.1" transform="rotate(72 137.8 55.0)" fill="#6e8a54"/>
<ellipse cx="109.0" cy="69.9" rx="1.2" ry="0.5" transform="rotate(68 109.0 69.9)" fill="#4a6a38"/>
<ellipse cx="132.7" cy="11.8" rx="2.1" ry="1.0" transform="rotate(73 132.7 11.8)" fill="#4a6a38"/>
<ellipse cx="150.3" cy="35.5" rx="2.8" ry="1.5" transform="rotate(70 150.3 35.5)" fill="#6e8a54"/>
<ellipse cx="120.5" cy="21.3" rx="1.1" ry="0.6" transform="rotate(61 120.5 21.3)" fill="#5e7e46"/>
<ellipse cx="118.6" cy="13.0" rx="1.4" ry="0.8" transform="rotate(142 118.6 13.0)" fill="#52703e"/>
<ellipse cx="127.5" cy="67.4" rx="2.6" ry="1.1" transform="rotate(64 127.5 67.4)" fill="#6e8a54"/>
<ellipse cx="124.6" cy="76.8" rx="1.4" ry="1.0" transform="rotate(91 124.6 76.8)" fill="#5e7e46"/>
<ellipse cx="145.8" cy="55.0" rx="2.9" ry="2.0" transform="rotate(107 145.8 55.0)" fill="#6e8a54"/>
<ellipse cx="133.9" cy="31.3" rx="1.5" ry="0.8" transform="rotate(38 133.9 31.3)" fill="#4a6a38"/>
<ellipse cx="137.8" cy="10.0" rx="2.7" ry="1.6" transform="rotate(138 137.8 10.0)" fill="#4a6a38"/>
<ellipse cx="136.9" cy="46.7" rx="1.6" ry="0.8" transform="rotate(15 136.9 46.7)" fill="#5e7e46"/>
<ellipse cx="142.2" cy="20.8" rx="1.4" ry="0.9" transform="rotate(12 142.2 20.8)" fill="#3a5430"/>
<ellipse cx="143.4" cy="61.4" rx="1.4" ry="0.8" transform="rotate(16 143.4 61.4)" fill="#3a5430"/>
<ellipse cx="113.5" cy="58.2" rx="1.6" ry="0.8" transform="rotate(164 113.5 58.2)" fill="#5e7e46"/>
<ellipse cx="124.1" cy="64.6" rx="2.4" ry="1.6" transform="rotate(5 124.1 64.6)" fill="#6e8a54"/>
<ellipse cx="118.9" cy="68.2" rx="1.7" ry="1.0" transform="rotate(33 118.9 68.2)" fill="#4a6a38"/>
<ellipse cx="119.9" cy="49.9" rx="1.4" ry="0.8" transform="rotate(73 119.9 49.9)" fill="#52703e"/>
<ellipse cx="115.1" cy="18.3" rx="1.6" ry="0.8" transform="rotate(7 115.1 18.3)" fill="#3a5430"/>
<ellipse cx="135.7" cy="75.5" rx="2.1" ry="0.9" transform="rotate(90 135.7 75.5)" fill="#52703e"/>
<ellipse cx="119.2" cy="36.5" rx="2.4" ry="1.1" transform="rotate(0 119.2 36.5)" fill="#3a5430"/>
<ellipse cx="133.7" cy="56.6" rx="2.9" ry="1.7" transform="rotate(7 133.7 56.6)" fill="#3a5430"/>
<ellipse cx="117.2" cy="73.4" rx="2.5" ry="1.0" transform="rotate(125 117.2 73.4)" fill="#6e8a54"/>
<ellipse cx="117.7" cy="43.6" rx="1.7" ry="1.2" transform="rotate(80 117.7 43.6)" fill="#3a5430"/>
<ellipse cx="138.4" cy="59.9" rx="2.7" ry="1.5" transform="rotate(82 138.4 59.9)" fill="#4a6a38"/>
<ellipse cx="137.8" cy="18.9" rx="2.3" ry="1.5" transform="rotate(140 137.8 18.9)" fill="#6e8a54"/>
<ellipse cx="138.9" cy="65.0" rx="1.5" ry="0.8" transform="rotate(174 138.9 65.0)" fill="#5e7e46"/>
<ellipse cx="131.9" cy="22.2" rx="1.1" ry="0.5" transform="rotate(74 131.9 22.2)" fill="#5e7e46"/>
<ellipse cx="136.0" cy="13.6" rx="2.4" ry="1.2" transform="rotate(87 136.0 13.6)" fill="#5e7e46"/>
<ellipse cx="108.3" cy="56.2" rx="1.3" ry="0.7" transform="rotate(126 108.3 56.2)" fill="#5e7e46"/>
<ellipse cx="132.8" cy="28.7" rx="2.6" ry="1.4" transform="rotate(137 132.8 28.7)" fill="#5e7e46"/>
<ellipse cx="137.8" cy="14.9" rx="3.0" ry="1.9" transform="rotate(73 137.8 14.9)" fill="#5e7e46"/>
<ellipse cx="113.0" cy="25.3" rx="1.7" ry="0.7" transform="rotate(11 113.0 25.3)" fill="#3a5430"/>
<ellipse cx="121.4" cy="11.5" rx="1.6" ry="1.1" transform="rotate(29 121.4 11.5)" fill="#6e8a54"/>
<ellipse cx="128.6" cy="30.9" rx="1.3" ry="0.5" transform="rotate(2 128.6 30.9)" fill="#6e8a54"/>
<ellipse cx="111.7" cy="58.2" rx="3.0" ry="1.6" transform="rotate(20 111.7 58.2)" fill="#6e8a54"/>
<ellipse cx="150.1" cy="40.6" rx="2.6" ry="1.2" transform="rotate(65 150.1 40.6)" fill="#4a6a38"/>
<ellipse cx="136.4" cy="51.3" rx="2.9" ry="1.7" transform="rotate(45 136.4 51.3)" fill="#5e7e46"/>
<ellipse cx="111.4" cy="60.6" rx="1.1" ry="0.5" transform="rotate(26 111.4 60.6)" fill="#3a5430"/>
<ellipse cx="116.2" cy="52.1" rx="2.7" ry="1.8" transform="rotate(30 116.2 52.1)" fill="#3a5430"/>
<ellipse cx="140.7" cy="28.2" rx="1.4" ry="0.9" transform="rotate(58 140.7 28.2)" fill="#3a5430"/>
<ellipse cx="114.0" cy="73.8" rx="2.7" ry="1.2" transform="rotate(10 114.0 73.8)" fill="#4a6a38"/>
<ellipse cx="132.9" cy="51.4" rx="2.6" ry="1.6" transform="rotate(163 132.9 51.4)" fill="#5e7e46"/>
<ellipse cx="129.8" cy="41.5" rx="1.3" ry="0.6" transform="rotate(105 129.8 41.5)" fill="#4a6a38"/>
<ellipse cx="114.2" cy="20.5" rx="1.3" ry="0.7" transform="rotate(72 114.2 20.5)" fill="#4a6a38"/>
<ellipse cx="145.4" cy="39.9" rx="1.4" ry="0.7" transform="rotate(6 145.4 39.9)" fill="#52703e"/>
<ellipse cx="145.6" cy="63.6" rx="1.9" ry="0.8" transform="rotate(119 145.6 63.6)" fill="#52703e"/>
<ellipse cx="139.3" cy="71.6" rx="1.1" ry="0.4" transform="rotate(172 139.3 71.6)" fill="#5e7e46"/>
<ellipse cx="121.0" cy="37.1" rx="2.1" ry="1.0" transform="rotate(35 121.0 37.1)" fill="#4a6a38"/>
<ellipse cx="131.9" cy="42.8" rx="1.9" ry="1.0" transform="rotate(113 131.9 42.8)" fill="#5e7e46"/>
<ellipse cx="135.3" cy="65.5" rx="1.1" ry="0.7" transform="rotate(110 135.3 65.5)" fill="#3a5430"/>
<ellipse cx="132.9" cy="35.4" rx="1.7" ry="1.0" transform="rotate(25 132.9 35.4)" fill="#3a5430"/>
<ellipse cx="131.3" cy="51.8" rx="2.7" ry="1.2" transform="rotate(133 131.3 51.8)" fill="#4a6a38"/>
<ellipse cx="114.5" cy="47.6" rx="2.1" ry="1.4" transform="rotate(65 114.5 47.6)" fill="#5e7e46"/>
<ellipse cx="132.9" cy="33.5" rx="1.2" ry="0.5" transform="rotate(160 132.9 33.5)" fill="#52703e"/>
<ellipse cx="141.0" cy="20.0" rx="2.7" ry="1.5" transform="rotate(34 141.0 20.0)" fill="#3a5430"/>
<ellipse cx="139.2" cy="20.5" rx="1.9" ry="1.0" transform="rotate(125 139.2 20.5)" fill="#52703e"/>
<ellipse cx="148.0" cy="46.6" rx="2.7" ry="1.6" transform="rotate(144 148.0 46.6)" fill="#5e7e46"/>
<ellipse cx="146.0" cy="45.4" rx="2.4" ry="1.5" transform="rotate(21 146.0 45.4)" fill="#52703e"/>
<ellipse cx="112.5" cy="66.9" rx="1.8" ry="0.7" transform="rotate(173 112.5 66.9)" fill="#52703e"/>
<ellipse cx="128.9" cy="10.2" rx="1.7" ry="1.0" transform="rotate(73 128.9 10.2)" fill="#4a6a38"/>
<ellipse cx="124.4" cy="4.2" rx="2.2" ry="0.9" transform="rotate(54 124.4 4.2)" fill="#5e7e46"/>
<ellipse cx="126.7" cy="71.4" rx="2.2" ry="1.5" transform="rotate(101 126.7 71.4)" fill="#3a5430"/>
<ellipse cx="115.4" cy="60.4" rx="1.7" ry="1.0" transform="rotate(122 115.4 60.4)" fill="#3a5430"/>
<ellipse cx="113.4" cy="31.7" rx="2.5" ry="1.7" transform="rotate(130 113.4 31.7)" fill="#4a6a38"/>
<ellipse cx="143.9" cy="30.2" rx="1.7" ry="0.8" transform="rotate(109 143.9 30.2)" fill="#4a6a38"/>
<ellipse cx="148.7" cy="55.0" rx="1.5" ry="0.6" transform="rotate(80 148.7 55.0)" fill="#52703e"/>
<ellipse cx="127.4" cy="63.9" rx="2.0" ry="0.7" transform="rotate(47 127.4 63.9)" fill="#5e7e46"/>
<ellipse cx="132.4" cy="25.3" rx="2.4" ry="1.1" transform="rotate(26 132.4 25.3)" fill="#3a5430"/>
<ellipse cx="131.7" cy="56.1" rx="2.6" ry="1.8" transform="rotate(2 131.7 56.1)" fill="#3a5430"/>
<ellipse cx="135.3" cy="52.6" rx="2.2" ry="1.4" transform="rotate(174 135.3 52.6)" fill="#6e8a54"/>
<ellipse cx="125.3" cy="70.2" rx="2.2" ry="0.8" transform="rotate(59 125.3 70.2)" fill="#5e7e46"/>
<ellipse cx="121.7" cy="13.1" rx="2.2" ry="1.0" transform="rotate(147 121.7 13.1)" fill="#6e8a54"/>
<ellipse cx="122.6" cy="39.1" rx="2.9" ry="1.3" transform="rotate(60 122.6 39.1)" fill="#6e8a54"/>
<ellipse cx="122.7" cy="4.6" rx="1.9" ry="1.3" transform="rotate(8 122.7 4.6)" fill="#5e7e46"/>
<ellipse cx="140.0" cy="14.1" rx="1.8" ry="0.7" transform="rotate(178 140.0 14.1)" fill="#3a5430"/>
<ellipse cx="133.0" cy="43.7" rx="2.9" ry="2.0" transform="rotate(6 133.0 43.7)" fill="#52703e"/>
<ellipse cx="116.8" cy="35.8" rx="2.1" ry="0.8" transform="rotate(143 116.8 35.8)" fill="#5e7e46"/>
<ellipse cx="138.0" cy="26.4" rx="2.5" ry="1.5" transform="rotate(92 138.0 26.4)" fill="#5e7e46"/>
<ellipse cx="123.4" cy="45.4" rx="1.8" ry="0.7" transform="rotate(61 123.4 45.4)" fill="#3a5430"/>
<ellipse cx="146.9" cy="63.3" rx="2.0" ry="1.3" transform="rotate(146 146.9 63.3)" fill="#3a5430"/>
<ellipse cx="114.6" cy="18.8" rx="2.8" ry="1.6" transform="rotate(73 114.6 18.8)" fill="#6e8a54"/>
<ellipse cx="133.0" cy="26.3" rx="1.3" ry="0.5" transform="rotate(54 133.0 26.3)" fill="#3a5430"/>
<ellipse cx="119.1" cy="47.0" rx="2.3" ry="1.6" transform="rotate(13 119.1 47.0)" fill="#5e7e46"/>
<ellipse cx="133.7" cy="9.2" rx="1.4" ry="0.8" transform="rotate(178 133.7 9.2)" fill="#3a5430"/>
<ellipse cx="139.7" cy="74.0" rx="2.7" ry="1.2" transform="rotate(32 139.7 74.0)" fill="#3a5430"/>
<ellipse cx="132.0" cy="61.4" rx="2.3" ry="1.0" transform="rotate(4 132.0 61.4)" fill="#4a6a38"/>
<ellipse cx="125.6" cy="18.4" rx="2.2" ry="1.4" transform="rotate(117 125.6 18.4)" fill="#5e7e46"/>
<ellipse cx="118.6" cy="7.4" rx="1.3" ry="0.5" transform="rotate(13 118.6 7.4)" fill="#52703e"/>
<ellipse cx="123.0" cy="13.5" rx="1.4" ry="0.7" transform="rotate(158 123.0 13.5)" fill="#3a5430"/>
<ellipse cx="122.4" cy="60.7" rx="2.3" ry="1.1" transform="rotate(122 122.4 60.7)" fill="#3a5430"/>
<ellipse cx="115.7" cy="69.5" rx="2.6" ry="1.0" transform="rotate(110 115.7 69.5)" fill="#6e8a54"/>
<ellipse cx="109.1" cy="27.4" rx="2.3" ry="1.1" transform="rotate(75 109.1 27.4)" fill="#3a5430"/>
<ellipse cx="114.9" cy="4.4" rx="1.4" ry="0.8" transform="rotate(151 114.9 4.4)" fill="#3a5430"/>
<ellipse cx="143.8" cy="35.6" rx="2.1" ry="1.2" transform="rotate(100 143.8 35.6)" fill="#52703e"/>
<ellipse cx="133.3" cy="20.7" rx="2.2" ry="1.4" transform="rotate(86 133.3 20.7)" fill="#4a6a38"/>
<ellipse cx="142.1" cy="26.8" rx="2.5" ry="1.8" transform="rotate(82 142.1 26.8)" fill="#3a5430"/>
<ellipse cx="123.9" cy="43.8" rx="1.5" ry="0.7" transform="rotate(100 123.9 43.8)" fill="#4a6a38"/>
<ellipse cx="136.8" cy="62.6" rx="1.7" ry="1.2" transform="rotate(41 136.8 62.6)" fill="#4a6a38"/>
<ellipse cx="149.2" cy="51.1" rx="1.2" ry="0.7" transform="rotate(37 149.2 51.1)" fill="#5e7e46"/>
<ellipse cx="119.4" cy="49.7" rx="2.5" ry="1.6" transform="rotate(157 119.4 49.7)" fill="#5e7e46"/>
<ellipse cx="131.3" cy="30.0" rx="2.4" ry="1.2" transform="rotate(155 131.3 30.0)" fill="#5e7e46"/>
<ellipse cx="136.0" cy="29.5" rx="2.6" ry="1.3" transform="rotate(58 136.0 29.5)" fill="#4a6a38"/>
<ellipse cx="112.7" cy="59.5" rx="1.1" ry="0.7" transform="rotate(72 112.7 59.5)" fill="#3a5430"/>
<ellipse cx="110.6" cy="46.4" rx="1.8" ry="1.2" transform="rotate(170 110.6 46.4)" fill="#5e7e46"/>
<ellipse cx="109.4" cy="4.6" rx="2.4" ry="1.1" transform="rotate(64 109.4 4.6)" fill="#3a5430"/>
<ellipse cx="141.4" cy="52.5" rx="1.6" ry="1.1" transform="rotate(39 141.4 52.5)" fill="#52703e"/>
<ellipse cx="142.8" cy="39.8" rx="2.9" ry="1.8" transform="rotate(172 142.8 39.8)" fill="#5e7e46"/>
<ellipse cx="144.2" cy="24.8" rx="1.7" ry="0.9" transform="rotate(160 144.2 24.8)" fill="#5e7e46"/>
<ellipse cx="122.1" cy="50.0" rx="2.9" ry="1.2" transform="rotate(9 122.1 50.0)" fill="#5e7e46"/>
<ellipse cx="145.5" cy="59.6" rx="1.1" ry="0.7" transform="rotate(79 145.5 59.6)" fill="#6e8a54"/>
<ellipse cx="121.1" cy="4.9" rx="1.2" ry="0.8" transform="rotate(2 121.1 4.9)" fill="#3a5430"/>
<ellipse cx="114.6" cy="59.7" rx="1.2" ry="0.5" transform="rotate(123 114.6 59.7)" fill="#4a6a38"/>
<ellipse cx="126.2" cy="52.4" rx="2.3" ry="1.1" transform="rotate(60 126.2 52.4)" fill="#4a6a38"/>
<ellipse cx="133.8" cy="18.5" rx="2.3" ry="0.8" transform="rotate(24 133.8 18.5)" fill="#52703e"/>
<ellipse cx="118.2" cy="36.1" rx="1.2" ry="0.4" transform="rotate(178 118.2 36.1)" fill="#3a5430"/>
<ellipse cx="110.8" cy="11.5" rx="2.9" ry="2.0" transform="rotate(95 110.8 11.5)" fill="#4a6a38"/>
<ellipse cx="115.9" cy="55.8" rx="1.3" ry="0.8" transform="rotate(90 115.9 55.8)" fill="#4a6a38"/>
<ellipse cx="131.3" cy="67.6" rx="2.9" ry="1.1" transform="rotate(175 131.3 67.6)" fill="#5e7e46"/>
<ellipse cx="140.2" cy="24.0" rx="1.4" ry="0.6" transform="rotate(12 140.2 24.0)" fill="#4a6a38"/>
<ellipse cx="116.6" cy="6.7" rx="2.6" ry="1.8" transform="rotate(48 116.6 6.7)" fill="#3a5430"/>
<ellipse cx="138.3" cy="53.3" rx="2.1" ry="1.1" transform="rotate(124 138.3 53.3)" fill="#3a5430"/>
<ellipse cx="125.6" cy="27.5" rx="1.8" ry="1.3" transform="rotate(70 125.6 27.5)" fill="#6e8a54"/>
<ellipse cx="146.8" cy="64.9" rx="2.8" ry="1.6" transform="rotate(43 146.8 64.9)" fill="#52703e"/>
<ellipse cx="148.8" cy="22.6" rx="2.2" ry="1.1" transform="rotate(43 148.8 22.6)" fill="#5e7e46"/>
<ellipse cx="137.2" cy="9.7" rx="2.2" ry="0.8" transform="rotate(129 137.2 9.7)" fill="#6e8a54"/>
<ellipse cx="138.5" cy="28.0" rx="2.3" ry="1.2" transform="rotate(57 138.5 28.0)" fill="#52703e"/>
<ellipse cx="108.0" cy="60.5" rx="2.7" ry="1.4" transform="rotate(107 108.0 60.5)" fill="#6e8a54"/>
<ellipse cx="118.3" cy="51.5" rx="2.5" ry="1.2" transform="rotate(128 118.3 51.5)" fill="#6e8a54"/>
<ellipse cx="137.0" cy="66.6" rx="1.1" ry="0.7" transform="rotate(120 137.0 66.6)" fill="#52703e"/>
<ellipse cx="141.7" cy="23.2" rx="2.7" ry="1.7" transform="rotate(63 141.7 23.2)" fill="#52703e"/>
<ellipse cx="129.0" cy="20.0" rx="1.3" ry="0.9" transform="rotate(95 129.0 20.0)" fill="#52703e"/>
<ellipse cx="117.0" cy="16.0" rx="1.7" ry="1.0" transform="rotate(27 117.0 16.0)" fill="#6e8a54"/>
<ellipse cx="115.8" cy="75.9" rx="2.7" ry="1.6" transform="rotate(164 115.8 75.9)" fill="#3a5430"/>
<ellipse cx="124.8" cy="67.1" rx="2.6" ry="1.0" transform="rotate(28 124.8 67.1)" fill="#3a5430"/>
<ellipse cx="124.5" cy="31.1" rx="2.3" ry="1.2" transform="rotate(54 124.5 31.1)" fill="#4a6a38"/>
<ellipse cx="120.1" cy="25.4" rx="1.9" ry="0.7" transform="rotate(114 120.1 25.4)" fill="#5e7e46"/>
<ellipse cx="141.4" cy="14.5" rx="2.4" ry="1.1" transform="rotate(94 141.4 14.5)" fill="#5e7e46"/>
<ellipse cx="135.4" cy="43.3" rx="2.6" ry="1.1" transform="rotate(100 135.4 43.3)" fill="#4a6a38"/>
<ellipse cx="133.1" cy="7.4" rx="1.4" ry="0.8" transform="rotate(49 133.1 7.4)" fill="#3a5430"/>
<ellipse cx="119.2" cy="23.4" rx="1.9" ry="1.0" transform="rotate(89 119.2 23.4)" fill="#4a6a38"/>
<ellipse cx="116.9" cy="35.6" rx="2.6" ry="1.5" transform="rotate(67 116.9 35.6)" fill="#4a6a38"/>
<ellipse cx="139.6" cy="31.9" rx="1.1" ry="0.7" transform="rotate(175 139.6 31.9)" fill="#6e8a54"/>
<ellipse cx="136.5" cy="65.4" rx="1.7" ry="0.8" transform="rotate(104 136.5 65.4)" fill="#52703e"/>
<ellipse cx="116.4" cy="77.8" rx="2.4" ry="1.2" transform="rotate(120 116.4 77.8)" fill="#3a5430"/>
<ellipse cx="127.6" cy="33.3" rx="1.8" ry="1.2" transform="rotate(116 127.6 33.3)" fill="#4a6a38"/>
<ellipse cx="112.7" cy="46.4" rx="2.9" ry="1.7" transform="rotate(79 112.7 46.4)" fill="#6e8a54"/>
<ellipse cx="115.8" cy="8.0" rx="1.8" ry="0.7" transform="rotate(136 115.8 8.0)" fill="#4a6a38"/>
<ellipse cx="137.5" cy="60.0" rx="1.8" ry="0.7" transform="rotate(122 137.5 60.0)" fill="#52703e"/>
<ellipse cx="122.5" cy="32.8" rx="1.9" ry="0.7" transform="rotate(153 122.5 32.8)" fill="#52703e"/>
<ellipse cx="111.9" cy="61.0" rx="2.1" ry="0.8" transform="rotate(123 111.9 61.0)" fill="#3a5430"/>
<ellipse cx="129.2" cy="7.2" rx="2.4" ry="1.2" transform="rotate(105 129.2 7.2)" fill="#6e8a54"/>
<ellipse cx="143.9" cy="70.1" rx="1.3" ry="0.6" transform="rotate(93 143.9 70.1)" fill="#4a6a38"/>
<ellipse cx="116.2" cy="44.5" rx="2.0" ry="0.8" transform="rotate(69 116.2 44.5)" fill="#3a5430"/>
<ellipse cx="132.5" cy="42.3" rx="1.8" ry="0.7" transform="rotate(55 132.5 42.3)" fill="#6e8a54"/>
<ellipse cx="143.3" cy="69.0" rx="1.5" ry="0.6" transform="rotate(9 143.3 69.0)" fill="#52703e"/>
<ellipse cx="136.7" cy="74.8" rx="2.3" ry="1.4" transform="rotate(25 136.7 74.8)" fill="#3a5430"/>
<ellipse cx="116.8" cy="73.8" rx="2.1" ry="0.8" transform="rotate(57 116.8 73.8)" fill="#52703e"/>
<ellipse cx="111.0" cy="76.3" rx="2.6" ry="1.0" transform="rotate(40 111.0 76.3)" fill="#6e8a54"/>
<ellipse cx="120.8" cy="57.7" rx="2.6" ry="1.5" transform="rotate(82 120.8 57.7)" fill="#6e8a54"/>
<ellipse cx="117.0" cy="18.6" rx="1.4" ry="0.9" transform="rotate(22 117.0 18.6)" fill="#5e7e46"/>
<ellipse cx="134.2" cy="16.9" rx="2.8" ry="1.6" transform="rotate(144 134.2 16.9)" fill="#6e8a54"/>
<ellipse cx="117.7" cy="58.5" rx="2.5" ry="1.6" transform="rotate(96 117.7 58.5)" fill="#5e7e46"/>
<ellipse cx="114.4" cy="73.7" rx="1.4" ry="0.5" transform="rotate(17 114.4 73.7)" fill="#4a6a38"/>
<ellipse cx="149.8" cy="34.9" rx="2.3" ry="1.0" transform="rotate(163 149.8 34.9)" fill="#6e8a54"/>
<ellipse cx="114.8" cy="7.4" rx="2.4" ry="0.9" transform="rotate(151 114.8 7.4)" fill="#3a5430"/>
<ellipse cx="141.4" cy="70.4" rx="2.6" ry="1.5" transform="rotate(129 141.4 70.4)" fill="#3a5430"/>
<ellipse cx="148.1" cy="28.0" rx="2.7" ry="1.1" transform="rotate(144 148.1 28.0)" fill="#5e7e46"/>
<ellipse cx="125.2" cy="5.5" rx="1.8" ry="1.0" transform="rotate(40 125.2 5.5)" fill="#52703e"/>
<ellipse cx="138.5" cy="18.3" rx="1.3" ry="0.5" transform="rotate(60 138.5 18.3)" fill="#6e8a54"/>
<ellipse cx="113.0" cy="66.8" rx="1.2" ry="0.8" transform="rotate(179 113.0 66.8)" fill="#52703e"/>
<ellipse cx="131.2" cy="25.4" rx="1.7" ry="1.0" transform="rotate(89 131.2 25.4)" fill="#4a6a38"/>
<ellipse cx="116.8" cy="24.6" rx="1.6" ry="0.9" transform="rotate(136 116.8 24.6)" fill="#5e7e46"/>
<ellipse cx="114.1" cy="23.9" rx="2.8" ry="1.8" transform="rotate(41 114.1 23.9)" fill="#3a5430"/>
<ellipse cx="109.4" cy="49.1" rx="2.9" ry="1.4" transform="rotate(170 109.4 49.1)" fill="#3a5430"/>
<ellipse cx="110.2" cy="28.7" rx="1.9" ry="0.8" transform="rotate(134 110.2 28.7)" fill="#5e7e46"/>
<ellipse cx="112.8" cy="67.1" rx="2.6" ry="1.6" transform="rotate(82 112.8 67.1)" fill="#52703e"/>
<ellipse cx="113.0" cy="15.4" rx="1.8" ry="0.6" transform="rotate(7 113.0 15.4)" fill="#52703e"/>
<ellipse cx="112.3" cy="52.8" rx="1.3" ry="0.7" transform="rotate(64 112.3 52.8)" fill="#3a5430"/>
<path d="M74.0 0.0 L100.0 0.0 L108.6 3.0 L108.6 33.0 L95.0 74.0 L53.0 71.0 L51.6 60.0 L55.0 32.0 L62.0 12.0 Z" fill="#3a4c32" />
<ellipse cx="93.1" cy="54.3" rx="1.4" ry="0.8" transform="rotate(16 93.1 54.3)" fill="#2c3e28"/>
<ellipse cx="79.0" cy="11.0" rx="1.0" ry="0.6" transform="rotate(21 79.0 11.0)" fill="#5a6e4a"/>
<ellipse cx="67.0" cy="40.0" rx="1.3" ry="0.6" transform="rotate(102 67.0 40.0)" fill="#2c3e28"/>
<ellipse cx="80.5" cy="27.2" rx="1.1" ry="0.5" transform="rotate(37 80.5 27.2)" fill="#4c6040"/>
<ellipse cx="82.1" cy="17.7" rx="1.0" ry="0.4" transform="rotate(10 82.1 17.7)" fill="#24321e"/>
<ellipse cx="63.6" cy="55.0" rx="0.9" ry="0.4" transform="rotate(151 63.6 55.0)" fill="#2c3e28"/>
<ellipse cx="75.8" cy="46.2" rx="1.0" ry="0.5" transform="rotate(22 75.8 46.2)" fill="#24321e"/>
<ellipse cx="64.0" cy="18.0" rx="2.0" ry="1.1" transform="rotate(147 64.0 18.0)" fill="#4c6040"/>
<ellipse cx="95.7" cy="12.9" rx="1.3" ry="0.5" transform="rotate(137 95.7 12.9)" fill="#24321e"/>
<ellipse cx="105.2" cy="30.5" rx="1.5" ry="0.6" transform="rotate(44 105.2 30.5)" fill="#24321e"/>
<ellipse cx="90.3" cy="11.2" rx="1.4" ry="0.5" transform="rotate(36 90.3 11.2)" fill="#4c6040"/>
<ellipse cx="90.7" cy="52.4" rx="0.9" ry="0.3" transform="rotate(159 90.7 52.4)" fill="#2c3e28"/>
<ellipse cx="79.9" cy="57.7" rx="2.3" ry="1.4" transform="rotate(115 79.9 57.7)" fill="#4c6040"/>
<ellipse cx="101.0" cy="3.7" rx="1.4" ry="0.7" transform="rotate(117 101.0 3.7)" fill="#344a2e"/>
<ellipse cx="84.8" cy="59.4" rx="1.6" ry="1.0" transform="rotate(89 84.8 59.4)" fill="#344a2e"/>
<ellipse cx="99.1" cy="59.4" rx="1.7" ry="0.9" transform="rotate(149 99.1 59.4)" fill="#24321e"/>
<ellipse cx="68.6" cy="71.1" rx="1.7" ry="1.1" transform="rotate(21 68.6 71.1)" fill="#344a2e"/>
<ellipse cx="94.4" cy="62.7" rx="1.2" ry="0.7" transform="rotate(101 94.4 62.7)" fill="#5a6e4a"/>
<ellipse cx="84.4" cy="69.1" rx="2.2" ry="0.8" transform="rotate(119 84.4 69.1)" fill="#5a6e4a"/>
<ellipse cx="96.8" cy="50.5" rx="2.3" ry="1.5" transform="rotate(73 96.8 50.5)" fill="#2c3e28"/>
<ellipse cx="64.6" cy="49.7" rx="2.1" ry="1.2" transform="rotate(163 64.6 49.7)" fill="#5a6e4a"/>
<ellipse cx="96.8" cy="0.3" rx="1.6" ry="0.6" transform="rotate(20 96.8 0.3)" fill="#5a6e4a"/>
<ellipse cx="75.5" cy="44.8" rx="1.5" ry="0.7" transform="rotate(38 75.5 44.8)" fill="#344a2e"/>
<ellipse cx="74.1" cy="34.5" rx="0.9" ry="0.4" transform="rotate(179 74.1 34.5)" fill="#4c6040"/>
<ellipse cx="91.6" cy="32.7" rx="1.9" ry="1.2" transform="rotate(22 91.6 32.7)" fill="#2c3e28"/>
<ellipse cx="73.0" cy="66.3" rx="1.4" ry="0.7" transform="rotate(27 73.0 66.3)" fill="#4c6040"/>
<ellipse cx="64.4" cy="65.8" rx="1.8" ry="1.2" transform="rotate(71 64.4 65.8)" fill="#5a6e4a"/>
<ellipse cx="69.8" cy="64.8" rx="2.1" ry="1.2" transform="rotate(154 69.8 64.8)" fill="#4c6040"/>
<ellipse cx="73.9" cy="0.7" rx="2.2" ry="0.8" transform="rotate(44 73.9 0.7)" fill="#24321e"/>
<ellipse cx="97.7" cy="18.6" rx="1.4" ry="0.5" transform="rotate(99 97.7 18.6)" fill="#24321e"/>
<ellipse cx="89.6" cy="10.0" rx="2.0" ry="0.9" transform="rotate(75 89.6 10.0)" fill="#24321e"/>
<ellipse cx="87.2" cy="32.9" rx="2.3" ry="1.1" transform="rotate(119 87.2 32.9)" fill="#5a6e4a"/>
<ellipse cx="55.0" cy="48.4" rx="1.6" ry="0.9" transform="rotate(3 55.0 48.4)" fill="#2c3e28"/>
<ellipse cx="83.4" cy="33.1" rx="2.0" ry="1.3" transform="rotate(131 83.4 33.1)" fill="#5a6e4a"/>
<ellipse cx="59.4" cy="70.5" rx="2.2" ry="0.9" transform="rotate(106 59.4 70.5)" fill="#24321e"/>
<ellipse cx="61.5" cy="43.6" rx="2.4" ry="1.4" transform="rotate(44 61.5 43.6)" fill="#24321e"/>
<ellipse cx="74.8" cy="6.2" rx="2.3" ry="1.3" transform="rotate(89 74.8 6.2)" fill="#344a2e"/>
<ellipse cx="91.0" cy="20.5" rx="1.1" ry="0.6" transform="rotate(149 91.0 20.5)" fill="#24321e"/>
<ellipse cx="71.4" cy="10.4" rx="1.6" ry="1.1" transform="rotate(29 71.4 10.4)" fill="#24321e"/>
<ellipse cx="61.3" cy="23.1" rx="0.9" ry="0.4" transform="rotate(69 61.3 23.1)" fill="#344a2e"/>
<ellipse cx="106.4" cy="13.8" rx="1.3" ry="0.9" transform="rotate(36 106.4 13.8)" fill="#344a2e"/>
<ellipse cx="104.5" cy="29.8" rx="1.9" ry="0.9" transform="rotate(58 104.5 29.8)" fill="#5a6e4a"/>
<ellipse cx="66.8" cy="15.1" rx="2.3" ry="1.1" transform="rotate(151 66.8 15.1)" fill="#4c6040"/>
<ellipse cx="96.0" cy="23.3" rx="1.0" ry="0.6" transform="rotate(85 96.0 23.3)" fill="#24321e"/>
<ellipse cx="99.9" cy="30.5" rx="0.9" ry="0.4" transform="rotate(129 99.9 30.5)" fill="#5a6e4a"/>
<ellipse cx="81.8" cy="21.3" rx="1.8" ry="0.8" transform="rotate(139 81.8 21.3)" fill="#2c3e28"/>
<ellipse cx="81.9" cy="51.7" rx="1.3" ry="0.7" transform="rotate(65 81.9 51.7)" fill="#4c6040"/>
<ellipse cx="57.1" cy="44.6" rx="2.1" ry="1.4" transform="rotate(128 57.1 44.6)" fill="#344a2e"/>
<ellipse cx="92.8" cy="54.9" rx="1.0" ry="0.5" transform="rotate(151 92.8 54.9)" fill="#344a2e"/>
<ellipse cx="74.4" cy="37.0" rx="1.3" ry="0.9" transform="rotate(128 74.4 37.0)" fill="#4c6040"/>
<ellipse cx="81.9" cy="38.6" rx="1.9" ry="1.2" transform="rotate(24 81.9 38.6)" fill="#344a2e"/>
<ellipse cx="90.5" cy="68.4" rx="0.9" ry="0.3" transform="rotate(103 90.5 68.4)" fill="#4c6040"/>
<ellipse cx="84.5" cy="29.9" rx="1.7" ry="0.8" transform="rotate(152 84.5 29.9)" fill="#4c6040"/>
<ellipse cx="60.2" cy="49.7" rx="2.0" ry="1.1" transform="rotate(162 60.2 49.7)" fill="#2c3e28"/>
<ellipse cx="94.0" cy="60.8" rx="1.8" ry="1.2" transform="rotate(24 94.0 60.8)" fill="#5a6e4a"/>
<ellipse cx="86.5" cy="20.4" rx="0.9" ry="0.5" transform="rotate(148 86.5 20.4)" fill="#344a2e"/>
<ellipse cx="86.2" cy="66.9" rx="1.3" ry="0.6" transform="rotate(102 86.2 66.9)" fill="#2c3e28"/>
<ellipse cx="72.1" cy="51.8" rx="0.9" ry="0.6" transform="rotate(59 72.1 51.8)" fill="#2c3e28"/>
<ellipse cx="77.7" cy="56.5" rx="1.5" ry="0.8" transform="rotate(176 77.7 56.5)" fill="#24321e"/>
<ellipse cx="83.2" cy="59.7" rx="0.9" ry="0.6" transform="rotate(20 83.2 59.7)" fill="#4c6040"/>
<ellipse cx="68.4" cy="69.3" rx="2.3" ry="1.3" transform="rotate(41 68.4 69.3)" fill="#24321e"/>
<ellipse cx="96.8" cy="15.5" rx="2.1" ry="1.4" transform="rotate(97 96.8 15.5)" fill="#2c3e28"/>
<ellipse cx="64.3" cy="12.8" rx="2.1" ry="0.9" transform="rotate(67 64.3 12.8)" fill="#344a2e"/>
<ellipse cx="92.9" cy="43.3" rx="1.4" ry="0.8" transform="rotate(106 92.9 43.3)" fill="#4c6040"/>
<ellipse cx="89.6" cy="65.3" rx="0.9" ry="0.4" transform="rotate(96 89.6 65.3)" fill="#344a2e"/>
<ellipse cx="55.7" cy="35.4" rx="1.0" ry="0.5" transform="rotate(123 55.7 35.4)" fill="#24321e"/>
<ellipse cx="77.5" cy="25.3" rx="1.1" ry="0.5" transform="rotate(51 77.5 25.3)" fill="#4c6040"/>
<ellipse cx="56.0" cy="66.4" rx="0.8" ry="0.5" transform="rotate(142 56.0 66.4)" fill="#4c6040"/>
<ellipse cx="95.7" cy="14.9" rx="2.0" ry="1.3" transform="rotate(53 95.7 14.9)" fill="#2c3e28"/>
<ellipse cx="92.6" cy="4.6" rx="1.1" ry="0.4" transform="rotate(155 92.6 4.6)" fill="#24321e"/>
<ellipse cx="66.6" cy="26.3" rx="1.1" ry="0.6" transform="rotate(178 66.6 26.3)" fill="#344a2e"/>
<ellipse cx="57.6" cy="54.7" rx="1.9" ry="0.9" transform="rotate(5 57.6 54.7)" fill="#5a6e4a"/>
<ellipse cx="95.6" cy="25.4" rx="2.2" ry="1.0" transform="rotate(159 95.6 25.4)" fill="#5a6e4a"/>
<ellipse cx="96.9" cy="35.2" rx="2.1" ry="0.8" transform="rotate(20 96.9 35.2)" fill="#24321e"/>
<ellipse cx="65.9" cy="28.8" rx="1.4" ry="0.8" transform="rotate(169 65.9 28.8)" fill="#4c6040"/>
<ellipse cx="92.1" cy="70.0" rx="2.4" ry="1.2" transform="rotate(132 92.1 70.0)" fill="#5a6e4a"/>
<ellipse cx="60.8" cy="66.3" rx="1.5" ry="0.6" transform="rotate(20 60.8 66.3)" fill="#24321e"/>
<ellipse cx="81.9" cy="2.0" rx="2.1" ry="1.5" transform="rotate(15 81.9 2.0)" fill="#2c3e28"/>
<ellipse cx="63.2" cy="42.4" rx="2.3" ry="1.5" transform="rotate(61 63.2 42.4)" fill="#24321e"/>
<ellipse cx="102.1" cy="35.9" rx="1.8" ry="0.8" transform="rotate(44 102.1 35.9)" fill="#344a2e"/>
<ellipse cx="73.4" cy="7.7" rx="1.7" ry="0.7" transform="rotate(36 73.4 7.7)" fill="#5a6e4a"/>
<ellipse cx="84.2" cy="68.1" rx="1.9" ry="1.3" transform="rotate(137 84.2 68.1)" fill="#24321e"/>
<ellipse cx="92.9" cy="4.0" rx="1.6" ry="0.8" transform="rotate(121 92.9 4.0)" fill="#4c6040"/>
<ellipse cx="92.5" cy="34.7" rx="2.2" ry="1.2" transform="rotate(21 92.5 34.7)" fill="#5a6e4a"/>
<ellipse cx="85.7" cy="4.6" rx="1.2" ry="0.8" transform="rotate(41 85.7 4.6)" fill="#5a6e4a"/>
<ellipse cx="83.9" cy="55.1" rx="1.2" ry="0.7" transform="rotate(117 83.9 55.1)" fill="#4c6040"/>
<ellipse cx="97.4" cy="2.8" rx="0.9" ry="0.4" transform="rotate(168 97.4 2.8)" fill="#4c6040"/>
<ellipse cx="95.8" cy="3.3" rx="1.7" ry="0.9" transform="rotate(74 95.8 3.3)" fill="#2c3e28"/>
<ellipse cx="94.8" cy="7.7" rx="2.4" ry="1.4" transform="rotate(34 94.8 7.7)" fill="#24321e"/>
<ellipse cx="60.9" cy="37.9" rx="1.0" ry="0.6" transform="rotate(160 60.9 37.9)" fill="#2c3e28"/>
<ellipse cx="88.6" cy="6.3" rx="1.7" ry="1.0" transform="rotate(143 88.6 6.3)" fill="#24321e"/>
<ellipse cx="82.7" cy="21.5" rx="1.4" ry="0.5" transform="rotate(134 82.7 21.5)" fill="#2c3e28"/>
<ellipse cx="62.3" cy="37.5" rx="2.1" ry="0.9" transform="rotate(127 62.3 37.5)" fill="#4c6040"/>
<ellipse cx="89.9" cy="72.8" rx="1.8" ry="0.7" transform="rotate(94 89.9 72.8)" fill="#2c3e28"/>
<ellipse cx="69.2" cy="21.9" rx="1.6" ry="0.9" transform="rotate(60 69.2 21.9)" fill="#4c6040"/>
<ellipse cx="58.1" cy="51.2" rx="1.8" ry="0.9" transform="rotate(82 58.1 51.2)" fill="#5a6e4a"/>
<ellipse cx="104.3" cy="42.5" rx="1.1" ry="0.7" transform="rotate(135 104.3 42.5)" fill="#2c3e28"/>
<ellipse cx="92.5" cy="2.3" rx="1.9" ry="1.2" transform="rotate(78 92.5 2.3)" fill="#2c3e28"/>
<ellipse cx="61.8" cy="69.8" rx="1.5" ry="0.9" transform="rotate(45 61.8 69.8)" fill="#344a2e"/>
<ellipse cx="99.8" cy="2.1" rx="1.4" ry="0.6" transform="rotate(29 99.8 2.1)" fill="#5a6e4a"/>
<ellipse cx="95.1" cy="61.9" rx="2.4" ry="1.5" transform="rotate(49 95.1 61.9)" fill="#4c6040"/>
<ellipse cx="71.0" cy="40.3" rx="1.4" ry="0.9" transform="rotate(0 71.0 40.3)" fill="#4c6040"/>
<ellipse cx="81.9" cy="7.8" rx="2.1" ry="1.0" transform="rotate(113 81.9 7.8)" fill="#344a2e"/>
<ellipse cx="77.7" cy="15.7" rx="0.9" ry="0.5" transform="rotate(44 77.7 15.7)" fill="#5a6e4a"/>
<ellipse cx="104.7" cy="38.4" rx="2.0" ry="1.2" transform="rotate(117 104.7 38.4)" fill="#4c6040"/>
<ellipse cx="68.0" cy="67.1" rx="0.8" ry="0.4" transform="rotate(129 68.0 67.1)" fill="#4c6040"/>
<ellipse cx="86.4" cy="45.5" rx="1.1" ry="0.7" transform="rotate(51 86.4 45.5)" fill="#5a6e4a"/>
<ellipse cx="65.8" cy="19.0" rx="0.8" ry="0.5" transform="rotate(38 65.8 19.0)" fill="#344a2e"/>
<ellipse cx="86.8" cy="48.5" rx="2.0" ry="0.8" transform="rotate(12 86.8 48.5)" fill="#2c3e28"/>
<ellipse cx="91.2" cy="22.5" rx="0.9" ry="0.3" transform="rotate(3 91.2 22.5)" fill="#344a2e"/>
<ellipse cx="55.8" cy="41.2" rx="2.0" ry="1.1" transform="rotate(92 55.8 41.2)" fill="#344a2e"/>
<ellipse cx="104.1" cy="33.3" rx="2.2" ry="1.0" transform="rotate(71 104.1 33.3)" fill="#4c6040"/>
<ellipse cx="77.0" cy="53.9" rx="1.0" ry="0.6" transform="rotate(62 77.0 53.9)" fill="#4c6040"/>
<ellipse cx="53.3" cy="61.3" rx="1.2" ry="0.8" transform="rotate(145 53.3 61.3)" fill="#344a2e"/>
<ellipse cx="62.4" cy="67.0" rx="1.1" ry="0.6" transform="rotate(106 62.4 67.0)" fill="#344a2e"/>
<ellipse cx="73.4" cy="48.3" rx="1.7" ry="0.7" transform="rotate(12 73.4 48.3)" fill="#2c3e28"/>
<ellipse cx="66.9" cy="68.9" rx="2.3" ry="1.1" transform="rotate(98 66.9 68.9)" fill="#4c6040"/>
<ellipse cx="59.5" cy="58.3" rx="1.2" ry="0.6" transform="rotate(94 59.5 58.3)" fill="#2c3e28"/>
<ellipse cx="61.1" cy="56.3" rx="2.3" ry="0.8" transform="rotate(117 61.1 56.3)" fill="#4c6040"/>
<ellipse cx="95.1" cy="63.1" rx="1.2" ry="0.8" transform="rotate(47 95.1 63.1)" fill="#2c3e28"/>
<ellipse cx="54.5" cy="49.1" rx="2.1" ry="0.9" transform="rotate(5 54.5 49.1)" fill="#5a6e4a"/>
<ellipse cx="79.4" cy="8.1" rx="1.7" ry="0.9" transform="rotate(73 79.4 8.1)" fill="#5a6e4a"/>
<ellipse cx="78.9" cy="12.9" rx="1.2" ry="0.6" transform="rotate(21 78.9 12.9)" fill="#2c3e28"/>
<ellipse cx="66.8" cy="32.8" rx="1.2" ry="0.6" transform="rotate(10 66.8 32.8)" fill="#24321e"/>
<ellipse cx="64.3" cy="55.1" rx="1.7" ry="1.1" transform="rotate(173 64.3 55.1)" fill="#5a6e4a"/>
<ellipse cx="57.9" cy="69.8" rx="1.6" ry="0.7" transform="rotate(31 57.9 69.8)" fill="#344a2e"/>
<ellipse cx="66.7" cy="68.4" rx="1.5" ry="0.9" transform="rotate(13 66.7 68.4)" fill="#5a6e4a"/>
<ellipse cx="87.6" cy="7.2" rx="1.2" ry="0.8" transform="rotate(12 87.6 7.2)" fill="#5a6e4a"/>
<ellipse cx="79.1" cy="13.3" rx="0.8" ry="0.5" transform="rotate(93 79.1 13.3)" fill="#2c3e28"/>
<ellipse cx="88.3" cy="50.8" rx="0.9" ry="0.5" transform="rotate(139 88.3 50.8)" fill="#24321e"/>
<ellipse cx="59.5" cy="27.0" rx="1.4" ry="0.9" transform="rotate(58 59.5 27.0)" fill="#2c3e28"/>
<ellipse cx="100.5" cy="27.2" rx="2.2" ry="0.9" transform="rotate(41 100.5 27.2)" fill="#24321e"/>
<ellipse cx="77.7" cy="53.6" rx="1.5" ry="1.0" transform="rotate(51 77.7 53.6)" fill="#4c6040"/>
<ellipse cx="99.4" cy="22.5" rx="1.3" ry="0.5" transform="rotate(12 99.4 22.5)" fill="#2c3e28"/>
<ellipse cx="90.3" cy="0.9" rx="2.3" ry="1.0" transform="rotate(86 90.3 0.9)" fill="#24321e"/>
<ellipse cx="100.2" cy="54.9" rx="1.9" ry="0.8" transform="rotate(163 100.2 54.9)" fill="#4c6040"/>
<ellipse cx="99.1" cy="14.9" rx="2.4" ry="1.2" transform="rotate(41 99.1 14.9)" fill="#344a2e"/>
<ellipse cx="75.1" cy="52.5" rx="1.7" ry="1.1" transform="rotate(43 75.1 52.5)" fill="#2c3e28"/>
<ellipse cx="60.4" cy="60.1" rx="1.8" ry="0.9" transform="rotate(99 60.4 60.1)" fill="#5a6e4a"/>
<ellipse cx="58.5" cy="71.1" rx="1.0" ry="0.4" transform="rotate(94 58.5 71.1)" fill="#24321e"/>
<ellipse cx="69.9" cy="55.7" rx="1.1" ry="0.5" transform="rotate(14 69.9 55.7)" fill="#5a6e4a"/>
<ellipse cx="96.6" cy="18.7" rx="1.7" ry="0.7" transform="rotate(27 96.6 18.7)" fill="#344a2e"/>
<ellipse cx="57.0" cy="32.2" rx="2.1" ry="1.5" transform="rotate(163 57.0 32.2)" fill="#2c3e28"/>
<ellipse cx="68.1" cy="71.6" rx="2.2" ry="1.1" transform="rotate(95 68.1 71.6)" fill="#344a2e"/>
<ellipse cx="97.6" cy="48.4" rx="1.6" ry="0.6" transform="rotate(44 97.6 48.4)" fill="#24321e"/>
<ellipse cx="85.0" cy="59.3" rx="2.2" ry="1.5" transform="rotate(35 85.0 59.3)" fill="#2c3e28"/>
<ellipse cx="85.4" cy="18.7" rx="1.4" ry="0.9" transform="rotate(172 85.4 18.7)" fill="#4c6040"/>
<ellipse cx="75.1" cy="70.8" rx="1.2" ry="0.8" transform="rotate(126 75.1 70.8)" fill="#2c3e28"/>
<ellipse cx="87.2" cy="34.9" rx="1.9" ry="1.2" transform="rotate(2 87.2 34.9)" fill="#5a6e4a"/>
<ellipse cx="71.0" cy="56.3" rx="2.3" ry="1.5" transform="rotate(84 71.0 56.3)" fill="#344a2e"/>
<ellipse cx="96.4" cy="17.2" rx="1.5" ry="1.0" transform="rotate(37 96.4 17.2)" fill="#5a6e4a"/>
<ellipse cx="74.5" cy="9.9" rx="2.0" ry="1.0" transform="rotate(127 74.5 9.9)" fill="#5a6e4a"/>
<ellipse cx="89.4" cy="56.7" rx="1.0" ry="0.4" transform="rotate(39 89.4 56.7)" fill="#344a2e"/>
<ellipse cx="58.0" cy="37.7" rx="2.2" ry="1.3" transform="rotate(116 58.0 37.7)" fill="#5a6e4a"/>
<ellipse cx="84.8" cy="69.7" rx="1.7" ry="0.8" transform="rotate(127 84.8 69.7)" fill="#5a6e4a"/>
<ellipse cx="69.5" cy="60.0" rx="1.9" ry="1.1" transform="rotate(141 69.5 60.0)" fill="#5a6e4a"/>
<ellipse cx="72.7" cy="71.2" rx="2.0" ry="1.3" transform="rotate(116 72.7 71.2)" fill="#4c6040"/>
<ellipse cx="91.8" cy="71.5" rx="1.1" ry="0.7" transform="rotate(54 91.8 71.5)" fill="#344a2e"/>
<ellipse cx="77.5" cy="49.3" rx="2.0" ry="0.7" transform="rotate(161 77.5 49.3)" fill="#24321e"/>
<ellipse cx="82.1" cy="53.7" rx="1.2" ry="0.5" transform="rotate(1 82.1 53.7)" fill="#4c6040"/>
<ellipse cx="62.9" cy="34.8" rx="0.9" ry="0.4" transform="rotate(53 62.9 34.8)" fill="#5a6e4a"/>
<ellipse cx="101.5" cy="24.6" rx="2.3" ry="1.0" transform="rotate(48 101.5 24.6)" fill="#2c3e28"/>
<ellipse cx="87.2" cy="51.6" rx="1.2" ry="0.8" transform="rotate(131 87.2 51.6)" fill="#344a2e"/>
<ellipse cx="80.2" cy="10.4" rx="1.8" ry="1.2" transform="rotate(145 80.2 10.4)" fill="#4c6040"/>
<ellipse cx="99.4" cy="31.3" rx="1.3" ry="0.5" transform="rotate(56 99.4 31.3)" fill="#2c3e28"/>
<ellipse cx="97.3" cy="7.0" rx="1.7" ry="0.7" transform="rotate(127 97.3 7.0)" fill="#5a6e4a"/>
<ellipse cx="96.7" cy="17.1" rx="0.9" ry="0.6" transform="rotate(102 96.7 17.1)" fill="#4c6040"/>
<ellipse cx="63.9" cy="62.2" rx="1.5" ry="0.9" transform="rotate(90 63.9 62.2)" fill="#24321e"/>
<ellipse cx="82.0" cy="53.6" rx="0.8" ry="0.5" transform="rotate(40 82.0 53.6)" fill="#344a2e"/>
<ellipse cx="63.7" cy="53.1" rx="1.5" ry="0.6" transform="rotate(33 63.7 53.1)" fill="#344a2e"/>
<ellipse cx="78.0" cy="25.1" rx="1.9" ry="1.1" transform="rotate(126 78.0 25.1)" fill="#344a2e"/>
<ellipse cx="74.2" cy="38.7" rx="1.3" ry="0.8" transform="rotate(57 74.2 38.7)" fill="#344a2e"/>
<ellipse cx="54.4" cy="38.0" rx="1.0" ry="0.7" transform="rotate(158 54.4 38.0)" fill="#5a6e4a"/>
<ellipse cx="96.3" cy="53.2" rx="2.2" ry="1.3" transform="rotate(86 96.3 53.2)" fill="#344a2e"/>
<ellipse cx="95.8" cy="7.9" rx="0.9" ry="0.4" transform="rotate(87 95.8 7.9)" fill="#344a2e"/>
<ellipse cx="97.4" cy="38.0" rx="1.5" ry="1.0" transform="rotate(169 97.4 38.0)" fill="#5a6e4a"/>
<ellipse cx="95.5" cy="27.5" rx="1.5" ry="1.0" transform="rotate(168 95.5 27.5)" fill="#24321e"/>
<ellipse cx="54.5" cy="56.9" rx="0.9" ry="0.6" transform="rotate(24 54.5 56.9)" fill="#24321e"/>
<ellipse cx="59.0" cy="34.5" rx="1.8" ry="0.8" transform="rotate(12 59.0 34.5)" fill="#344a2e"/>
<ellipse cx="76.5" cy="6.3" rx="1.4" ry="0.5" transform="rotate(173 76.5 6.3)" fill="#2c3e28"/>
<ellipse cx="53.4" cy="67.3" rx="1.9" ry="1.0" transform="rotate(126 53.4 67.3)" fill="#344a2e"/>
<ellipse cx="60.9" cy="39.4" rx="2.1" ry="0.9" transform="rotate(31 60.9 39.4)" fill="#5a6e4a"/>
<ellipse cx="92.0" cy="26.8" rx="2.2" ry="1.1" transform="rotate(99 92.0 26.8)" fill="#2c3e28"/>
<ellipse cx="66.4" cy="54.8" rx="2.2" ry="1.5" transform="rotate(85 66.4 54.8)" fill="#4c6040"/>
<ellipse cx="86.0" cy="21.4" rx="1.5" ry="0.9" transform="rotate(132 86.0 21.4)" fill="#4c6040"/>
<ellipse cx="94.3" cy="67.7" rx="1.6" ry="1.0" transform="rotate(92 94.3 67.7)" fill="#4c6040"/>
<ellipse cx="98.0" cy="51.5" rx="2.4" ry="1.3" transform="rotate(56 98.0 51.5)" fill="#344a2e"/>
<ellipse cx="90.5" cy="48.8" rx="0.9" ry="0.3" transform="rotate(42 90.5 48.8)" fill="#344a2e"/>
<ellipse cx="52.2" cy="56.5" rx="1.8" ry="1.2" transform="rotate(171 52.2 56.5)" fill="#344a2e"/>
<ellipse cx="64.6" cy="23.5" rx="2.2" ry="1.5" transform="rotate(54 64.6 23.5)" fill="#24321e"/>
<ellipse cx="71.7" cy="28.0" rx="1.0" ry="0.4" transform="rotate(164 71.7 28.0)" fill="#5a6e4a"/>
<ellipse cx="94.7" cy="57.0" rx="1.7" ry="1.1" transform="rotate(147 94.7 57.0)" fill="#2c3e28"/>
<ellipse cx="94.6" cy="60.2" rx="1.2" ry="0.7" transform="rotate(69 94.6 60.2)" fill="#344a2e"/>
<ellipse cx="59.2" cy="39.9" rx="1.3" ry="0.9" transform="rotate(62 59.2 39.9)" fill="#4c6040"/>
<ellipse cx="59.5" cy="69.4" rx="2.0" ry="1.2" transform="rotate(117 59.5 69.4)" fill="#2c3e28"/>
<ellipse cx="96.8" cy="62.4" rx="2.4" ry="1.6" transform="rotate(85 96.8 62.4)" fill="#5a6e4a"/>
<ellipse cx="96.2" cy="64.4" rx="1.1" ry="0.5" transform="rotate(45 96.2 64.4)" fill="#2c3e28"/>
<ellipse cx="58.3" cy="65.6" rx="2.2" ry="0.8" transform="rotate(67 58.3 65.6)" fill="#24321e"/>
<ellipse cx="55.5" cy="54.8" rx="1.1" ry="0.6" transform="rotate(72 55.5 54.8)" fill="#5a6e4a"/>
<ellipse cx="106.0" cy="22.9" rx="1.8" ry="1.2" transform="rotate(85 106.0 22.9)" fill="#344a2e"/>
<ellipse cx="93.4" cy="23.1" rx="2.2" ry="1.2" transform="rotate(19 93.4 23.1)" fill="#24321e"/>
<ellipse cx="55.5" cy="33.0" rx="0.8" ry="0.6" transform="rotate(41 55.5 33.0)" fill="#4c6040"/>
<ellipse cx="72.3" cy="26.9" rx="2.3" ry="1.4" transform="rotate(22 72.3 26.9)" fill="#24321e"/>
<ellipse cx="53.6" cy="43.7" rx="1.5" ry="0.9" transform="rotate(77 53.6 43.7)" fill="#2c3e28"/>
<ellipse cx="62.1" cy="21.5" rx="1.6" ry="1.0" transform="rotate(18 62.1 21.5)" fill="#24321e"/>
<ellipse cx="97.3" cy="16.2" rx="2.2" ry="1.5" transform="rotate(78 97.3 16.2)" fill="#5a6e4a"/>
<ellipse cx="87.9" cy="5.7" rx="1.5" ry="0.7" transform="rotate(178 87.9 5.7)" fill="#24321e"/>
<ellipse cx="93.3" cy="13.8" rx="1.7" ry="0.9" transform="rotate(120 93.3 13.8)" fill="#4c6040"/>
<ellipse cx="86.1" cy="28.0" rx="2.1" ry="1.4" transform="rotate(30 86.1 28.0)" fill="#2c3e28"/>
<ellipse cx="103.5" cy="40.8" rx="2.0" ry="1.3" transform="rotate(65 103.5 40.8)" fill="#2c3e28"/>
<ellipse cx="80.2" cy="66.5" rx="2.2" ry="1.5" transform="rotate(92 80.2 66.5)" fill="#4c6040"/>
<ellipse cx="83.5" cy="10.6" rx="1.8" ry="1.1" transform="rotate(76 83.5 10.6)" fill="#24321e"/>
<ellipse cx="90.8" cy="44.7" rx="1.2" ry="0.5" transform="rotate(113 90.8 44.7)" fill="#2c3e28"/>
<ellipse cx="71.0" cy="53.1" rx="2.0" ry="0.9" transform="rotate(46 71.0 53.1)" fill="#24321e"/>
<ellipse cx="98.4" cy="17.2" rx="1.1" ry="0.7" transform="rotate(176 98.4 17.2)" fill="#2c3e28"/>
<ellipse cx="94.3" cy="52.7" rx="1.9" ry="0.9" transform="rotate(151 94.3 52.7)" fill="#24321e"/>
<ellipse cx="54.6" cy="69.9" rx="1.5" ry="0.6" transform="rotate(13 54.6 69.9)" fill="#24321e"/>
<ellipse cx="90.2" cy="10.5" rx="1.5" ry="0.9" transform="rotate(180 90.2 10.5)" fill="#344a2e"/>
<ellipse cx="74.9" cy="53.4" rx="2.4" ry="1.0" transform="rotate(156 74.9 53.4)" fill="#344a2e"/>
<ellipse cx="86.8" cy="22.4" rx="1.1" ry="0.5" transform="rotate(15 86.8 22.4)" fill="#4c6040"/>
<ellipse cx="85.2" cy="9.2" rx="1.3" ry="0.6" transform="rotate(151 85.2 9.2)" fill="#24321e"/>
<ellipse cx="79.3" cy="69.9" rx="1.6" ry="0.7" transform="rotate(107 79.3 69.9)" fill="#4c6040"/>
<ellipse cx="80.1" cy="17.2" rx="1.4" ry="0.7" transform="rotate(13 80.1 17.2)" fill="#2c3e28"/>
<ellipse cx="71.8" cy="31.5" rx="1.4" ry="0.8" transform="rotate(71 71.8 31.5)" fill="#4c6040"/>
<ellipse cx="78.1" cy="61.8" rx="1.7" ry="0.6" transform="rotate(141 78.1 61.8)" fill="#5a6e4a"/>
<ellipse cx="71.8" cy="46.6" rx="2.3" ry="1.1" transform="rotate(78 71.8 46.6)" fill="#344a2e"/>
<ellipse cx="60.5" cy="48.3" rx="2.0" ry="0.7" transform="rotate(124 60.5 48.3)" fill="#344a2e"/>
<ellipse cx="90.2" cy="29.5" rx="1.3" ry="0.7" transform="rotate(40 90.2 29.5)" fill="#4c6040"/>
<ellipse cx="82.9" cy="29.8" rx="1.1" ry="0.4" transform="rotate(162 82.9 29.8)" fill="#2c3e28"/>
<ellipse cx="86.7" cy="59.7" rx="1.5" ry="0.7" transform="rotate(94 86.7 59.7)" fill="#2c3e28"/>
<ellipse cx="71.5" cy="39.4" rx="2.3" ry="1.3" transform="rotate(86 71.5 39.4)" fill="#344a2e"/>
<ellipse cx="66.1" cy="45.1" rx="1.7" ry="1.1" transform="rotate(3 66.1 45.1)" fill="#5a6e4a"/>
<ellipse cx="55.4" cy="60.0" rx="1.8" ry="0.6" transform="rotate(160 55.4 60.0)" fill="#344a2e"/>
<ellipse cx="98.4" cy="11.9" rx="1.9" ry="0.7" transform="rotate(35 98.4 11.9)" fill="#2c3e28"/>
<ellipse cx="93.6" cy="10.4" rx="1.3" ry="0.6" transform="rotate(79 93.6 10.4)" fill="#2c3e28"/>
<ellipse cx="93.4" cy="53.3" rx="2.3" ry="1.5" transform="rotate(99 93.4 53.3)" fill="#2c3e28"/>
<ellipse cx="95.7" cy="11.0" rx="2.1" ry="0.8" transform="rotate(89 95.7 11.0)" fill="#5a6e4a"/>
<ellipse cx="75.7" cy="46.6" rx="1.9" ry="0.8" transform="rotate(23 75.7 46.6)" fill="#344a2e"/>
<ellipse cx="92.0" cy="46.6" rx="1.0" ry="0.4" transform="rotate(33 92.0 46.6)" fill="#24321e"/>
<ellipse cx="72.0" cy="69.6" rx="1.1" ry="0.4" transform="rotate(154 72.0 69.6)" fill="#344a2e"/>
<ellipse cx="73.9" cy="18.7" rx="1.2" ry="0.8" transform="rotate(179 73.9 18.7)" fill="#4c6040"/>
<ellipse cx="61.0" cy="66.1" rx="2.1" ry="1.2" transform="rotate(118 61.0 66.1)" fill="#5a6e4a"/>
<ellipse cx="81.8" cy="50.4" rx="0.9" ry="0.4" transform="rotate(142 81.8 50.4)" fill="#24321e"/>
<ellipse cx="89.2" cy="37.8" rx="1.0" ry="0.4" transform="rotate(142 89.2 37.8)" fill="#24321e"/>
<ellipse cx="73.4" cy="51.1" rx="0.8" ry="0.5" transform="rotate(141 73.4 51.1)" fill="#24321e"/>
<ellipse cx="72.2" cy="52.2" rx="1.1" ry="0.5" transform="rotate(119 72.2 52.2)" fill="#344a2e"/>
<ellipse cx="69.6" cy="27.9" rx="1.2" ry="0.8" transform="rotate(143 69.6 27.9)" fill="#24321e"/>
<ellipse cx="90.8" cy="23.6" rx="2.0" ry="0.9" transform="rotate(110 90.8 23.6)" fill="#4c6040"/>
<ellipse cx="84.3" cy="40.4" rx="2.3" ry="1.5" transform="rotate(178 84.3 40.4)" fill="#5a6e4a"/>
<ellipse cx="60.1" cy="56.3" rx="1.7" ry="1.1" transform="rotate(106 60.1 56.3)" fill="#5a6e4a"/>
<ellipse cx="91.8" cy="0.3" rx="1.7" ry="0.7" transform="rotate(68 91.8 0.3)" fill="#2c3e28"/>
<ellipse cx="86.2" cy="32.2" rx="2.2" ry="1.4" transform="rotate(15 86.2 32.2)" fill="#5a6e4a"/>
<ellipse cx="88.6" cy="7.2" rx="1.6" ry="1.0" transform="rotate(39 88.6 7.2)" fill="#344a2e"/>
<ellipse cx="67.4" cy="27.4" rx="2.3" ry="1.5" transform="rotate(180 67.4 27.4)" fill="#5a6e4a"/>
<ellipse cx="95.4" cy="51.3" rx="1.8" ry="0.8" transform="rotate(116 95.4 51.3)" fill="#344a2e"/>
<ellipse cx="74.5" cy="70.3" rx="1.6" ry="0.6" transform="rotate(135 74.5 70.3)" fill="#4c6040"/>
<ellipse cx="97.8" cy="21.8" rx="1.8" ry="1.2" transform="rotate(133 97.8 21.8)" fill="#4c6040"/>
<ellipse cx="71.6" cy="63.0" rx="2.2" ry="1.0" transform="rotate(91 71.6 63.0)" fill="#5a6e4a"/>
<ellipse cx="78.8" cy="6.4" rx="2.2" ry="1.4" transform="rotate(6 78.8 6.4)" fill="#5a6e4a"/>
<ellipse cx="85.8" cy="64.8" rx="0.9" ry="0.4" transform="rotate(151 85.8 64.8)" fill="#24321e"/>
<ellipse cx="98.0" cy="8.9" rx="1.1" ry="0.6" transform="rotate(61 98.0 8.9)" fill="#4c6040"/>
<ellipse cx="103.3" cy="16.5" rx="2.2" ry="0.9" transform="rotate(47 103.3 16.5)" fill="#2c3e28"/>
<ellipse cx="64.2" cy="67.1" rx="1.8" ry="1.2" transform="rotate(139 64.2 67.1)" fill="#5a6e4a"/>
<ellipse cx="82.0" cy="63.3" rx="1.5" ry="0.6" transform="rotate(164 82.0 63.3)" fill="#344a2e"/>
<ellipse cx="90.5" cy="55.1" rx="1.2" ry="0.6" transform="rotate(148 90.5 55.1)" fill="#4c6040"/>
<ellipse cx="104.2" cy="11.9" rx="1.9" ry="1.0" transform="rotate(73 104.2 11.9)" fill="#4c6040"/>
<ellipse cx="78.4" cy="69.1" rx="1.7" ry="0.7" transform="rotate(90 78.4 69.1)" fill="#24321e"/>
<ellipse cx="70.3" cy="25.4" rx="1.0" ry="0.5" transform="rotate(20 70.3 25.4)" fill="#4c6040"/>
<ellipse cx="80.0" cy="20.9" rx="1.3" ry="0.7" transform="rotate(32 80.0 20.9)" fill="#2c3e28"/>
<ellipse cx="69.7" cy="33.9" rx="2.3" ry="1.2" transform="rotate(67 69.7 33.9)" fill="#344a2e"/>
<ellipse cx="79.0" cy="68.8" rx="1.1" ry="0.8" transform="rotate(120 79.0 68.8)" fill="#4c6040"/>
<ellipse cx="72.1" cy="44.8" rx="1.3" ry="0.9" transform="rotate(44 72.1 44.8)" fill="#24321e"/>
<ellipse cx="83.1" cy="15.2" rx="1.6" ry="0.6" transform="rotate(151 83.1 15.2)" fill="#2c3e28"/>
<ellipse cx="90.6" cy="68.6" rx="2.4" ry="1.4" transform="rotate(128 90.6 68.6)" fill="#2c3e28"/>
<ellipse cx="81.0" cy="25.9" rx="1.9" ry="1.0" transform="rotate(33 81.0 25.9)" fill="#24321e"/>
<ellipse cx="63.2" cy="13.3" rx="2.1" ry="0.8" transform="rotate(168 63.2 13.3)" fill="#344a2e"/>
<ellipse cx="85.0" cy="54.7" rx="2.3" ry="1.4" transform="rotate(69 85.0 54.7)" fill="#2c3e28"/>
<ellipse cx="55.4" cy="61.5" rx="2.4" ry="0.9" transform="rotate(134 55.4 61.5)" fill="#344a2e"/>
<ellipse cx="80.9" cy="31.7" rx="2.2" ry="0.8" transform="rotate(5 80.9 31.7)" fill="#2c3e28"/>
<ellipse cx="88.8" cy="11.9" rx="2.0" ry="1.1" transform="rotate(65 88.8 11.9)" fill="#344a2e"/>
<ellipse cx="66.1" cy="10.5" rx="1.1" ry="0.4" transform="rotate(106 66.1 10.5)" fill="#2c3e28"/>
<ellipse cx="60.7" cy="37.2" rx="1.7" ry="0.9" transform="rotate(74 60.7 37.2)" fill="#24321e"/>
<ellipse cx="94.4" cy="53.8" rx="1.2" ry="0.5" transform="rotate(167 94.4 53.8)" fill="#2c3e28"/>
<ellipse cx="65.4" cy="61.0" rx="1.2" ry="0.5" transform="rotate(86 65.4 61.0)" fill="#5a6e4a"/>
<ellipse cx="76.1" cy="35.3" rx="0.9" ry="0.6" transform="rotate(179 76.1 35.3)" fill="#2c3e28"/>
<ellipse cx="77.4" cy="37.2" rx="2.3" ry="1.3" transform="rotate(33 77.4 37.2)" fill="#2c3e28"/>
<ellipse cx="66.4" cy="57.3" rx="2.0" ry="0.9" transform="rotate(14 66.4 57.3)" fill="#344a2e"/>
<ellipse cx="55.8" cy="57.6" rx="1.5" ry="0.9" transform="rotate(31 55.8 57.6)" fill="#5a6e4a"/>
<ellipse cx="70.1" cy="67.3" rx="1.9" ry="1.0" transform="rotate(30 70.1 67.3)" fill="#2c3e28"/>
<ellipse cx="93.5" cy="54.9" rx="2.1" ry="1.3" transform="rotate(51 93.5 54.9)" fill="#2c3e28"/>
<ellipse cx="70.7" cy="7.6" rx="2.0" ry="1.2" transform="rotate(92 70.7 7.6)" fill="#4c6040"/>
<ellipse cx="64.6" cy="15.5" rx="1.2" ry="0.6" transform="rotate(43 64.6 15.5)" fill="#5a6e4a"/>
<ellipse cx="74.3" cy="14.7" rx="0.9" ry="0.6" transform="rotate(179 74.3 14.7)" fill="#344a2e"/>
<ellipse cx="65.7" cy="48.9" rx="1.3" ry="0.5" transform="rotate(75 65.7 48.9)" fill="#5a6e4a"/>
<ellipse cx="66.6" cy="46.5" rx="1.4" ry="0.8" transform="rotate(46 66.6 46.5)" fill="#2c3e28"/>
<ellipse cx="89.8" cy="36.7" rx="2.1" ry="0.9" transform="rotate(168 89.8 36.7)" fill="#5a6e4a"/>
<ellipse cx="76.5" cy="48.8" rx="0.8" ry="0.3" transform="rotate(177 76.5 48.8)" fill="#2c3e28"/>
<ellipse cx="96.6" cy="58.5" rx="0.9" ry="0.6" transform="rotate(43 96.6 58.5)" fill="#4c6040"/>
<ellipse cx="84.8" cy="53.5" rx="1.4" ry="0.8" transform="rotate(66 84.8 53.5)" fill="#344a2e"/>
<ellipse cx="60.8" cy="32.4" rx="1.1" ry="0.4" transform="rotate(98 60.8 32.4)" fill="#5a6e4a"/>
<ellipse cx="100.9" cy="47.1" rx="1.0" ry="0.7" transform="rotate(129 100.9 47.1)" fill="#2c3e28"/>
<ellipse cx="97.6" cy="6.8" rx="1.2" ry="0.5" transform="rotate(157 97.6 6.8)" fill="#2c3e28"/>
<ellipse cx="69.7" cy="67.3" rx="2.1" ry="1.3" transform="rotate(106 69.7 67.3)" fill="#24321e"/>
<ellipse cx="82.0" cy="23.0" rx="1.1" ry="0.7" transform="rotate(23 82.0 23.0)" fill="#344a2e"/>
<ellipse cx="80.7" cy="43.5" rx="1.2" ry="0.5" transform="rotate(91 80.7 43.5)" fill="#24321e"/>
<ellipse cx="85.7" cy="3.2" rx="1.3" ry="0.5" transform="rotate(113 85.7 3.2)" fill="#5a6e4a"/>
<ellipse cx="96.1" cy="38.3" rx="1.2" ry="0.8" transform="rotate(92 96.1 38.3)" fill="#5a6e4a"/>
<ellipse cx="82.6" cy="21.7" rx="2.1" ry="0.8" transform="rotate(46 82.6 21.7)" fill="#344a2e"/>
<ellipse cx="93.3" cy="15.8" rx="1.5" ry="0.7" transform="rotate(55 93.3 15.8)" fill="#344a2e"/>
<ellipse cx="88.9" cy="61.1" rx="2.4" ry="1.2" transform="rotate(132 88.9 61.1)" fill="#344a2e"/>
<ellipse cx="87.8" cy="51.3" rx="1.2" ry="0.5" transform="rotate(65 87.8 51.3)" fill="#2c3e28"/>
<ellipse cx="76.5" cy="45.0" rx="2.2" ry="1.5" transform="rotate(55 76.5 45.0)" fill="#4c6040"/>
<ellipse cx="71.0" cy="34.9" rx="2.0" ry="1.2" transform="rotate(33 71.0 34.9)" fill="#2c3e28"/>
<ellipse cx="72.6" cy="20.0" rx="1.6" ry="0.9" transform="rotate(161 72.6 20.0)" fill="#5a6e4a"/>
<ellipse cx="101.1" cy="32.5" rx="1.5" ry="0.7" transform="rotate(175 101.1 32.5)" fill="#4c6040"/>
<ellipse cx="92.2" cy="26.1" rx="0.9" ry="0.5" transform="rotate(44 92.2 26.1)" fill="#2c3e28"/>
<ellipse cx="76.0" cy="14.2" rx="2.0" ry="1.0" transform="rotate(21 76.0 14.2)" fill="#344a2e"/>
<ellipse cx="76.7" cy="29.4" rx="1.8" ry="0.8" transform="rotate(4 76.7 29.4)" fill="#5a6e4a"/>
<ellipse cx="62.2" cy="57.9" rx="2.0" ry="0.8" transform="rotate(58 62.2 57.9)" fill="#4c6040"/>
<ellipse cx="90.3" cy="46.2" rx="1.1" ry="0.4" transform="rotate(121 90.3 46.2)" fill="#24321e"/>
<ellipse cx="71.0" cy="42.6" rx="1.6" ry="1.1" transform="rotate(43 71.0 42.6)" fill="#3e2c28"/>
<ellipse cx="81.6" cy="54.9" rx="1.2" ry="0.4" transform="rotate(59 81.6 54.9)" fill="#4a3430"/>
<ellipse cx="79.3" cy="43.2" rx="1.1" ry="0.5" transform="rotate(75 79.3 43.2)" fill="#2c3e28"/>
<ellipse cx="64.5" cy="45.9" rx="1.2" ry="0.6" transform="rotate(118 64.5 45.9)" fill="#3e2c28"/>
<ellipse cx="71.3" cy="55.3" rx="1.3" ry="0.5" transform="rotate(143 71.3 55.3)" fill="#2c3e28"/>
<ellipse cx="72.1" cy="60.2" rx="1.4" ry="1.0" transform="rotate(10 72.1 60.2)" fill="#3e2c28"/>
<ellipse cx="77.9" cy="55.6" rx="1.0" ry="0.6" transform="rotate(85 77.9 55.6)" fill="#3e2c28"/>
<ellipse cx="68.8" cy="64.9" rx="2.0" ry="1.2" transform="rotate(135 68.8 64.9)" fill="#4a3430"/>
<ellipse cx="73.3" cy="62.7" rx="1.6" ry="0.6" transform="rotate(163 73.3 62.7)" fill="#5a3e36"/>
<ellipse cx="75.1" cy="51.2" rx="1.4" ry="0.6" transform="rotate(126 75.1 51.2)" fill="#2c3e28"/>
<ellipse cx="79.3" cy="52.8" rx="1.2" ry="0.8" transform="rotate(38 79.3 52.8)" fill="#3e2c28"/>
<ellipse cx="74.7" cy="48.7" rx="1.5" ry="0.8" transform="rotate(51 74.7 48.7)" fill="#4a3430"/>
<ellipse cx="82.5" cy="58.6" rx="1.8" ry="0.9" transform="rotate(177 82.5 58.6)" fill="#2c3e28"/>
<ellipse cx="68.1" cy="57.5" rx="0.9" ry="0.4" transform="rotate(4 68.1 57.5)" fill="#2c3e28"/>
<ellipse cx="79.9" cy="49.4" rx="1.1" ry="0.5" transform="rotate(127 79.9 49.4)" fill="#5a3e36"/>
<ellipse cx="89.0" cy="49.7" rx="1.7" ry="0.6" transform="rotate(40 89.0 49.7)" fill="#2c3e28"/>
<ellipse cx="84.5" cy="57.6" rx="1.4" ry="0.7" transform="rotate(36 84.5 57.6)" fill="#5a3e36"/>
<ellipse cx="66.0" cy="44.5" rx="1.0" ry="0.6" transform="rotate(90 66.0 44.5)" fill="#5a3e36"/>
<ellipse cx="83.8" cy="62.6" rx="1.1" ry="0.6" transform="rotate(129 83.8 62.6)" fill="#4a3430"/>
<ellipse cx="68.0" cy="48.0" rx="1.6" ry="0.9" transform="rotate(111 68.0 48.0)" fill="#5a3e36"/>
<ellipse cx="84.2" cy="59.3" rx="1.2" ry="0.5" transform="rotate(153 84.2 59.3)" fill="#3e2c28"/>
<ellipse cx="88.7" cy="57.0" rx="0.9" ry="0.5" transform="rotate(6 88.7 57.0)" fill="#5a3e36"/>
<ellipse cx="72.0" cy="62.0" rx="1.0" ry="0.6" transform="rotate(94 72.0 62.0)" fill="#4a3430"/>
<ellipse cx="82.6" cy="46.0" rx="0.9" ry="0.6" transform="rotate(82 82.6 46.0)" fill="#5a3e36"/>
<ellipse cx="89.9" cy="45.3" rx="1.9" ry="0.9" transform="rotate(5 89.9 45.3)" fill="#2c3e28"/>
<ellipse cx="75.2" cy="63.6" rx="0.8" ry="0.5" transform="rotate(9 75.2 63.6)" fill="#2c3e28"/>
<ellipse cx="84.1" cy="47.8" rx="1.7" ry="0.6" transform="rotate(37 84.1 47.8)" fill="#3e2c28"/>
<ellipse cx="65.8" cy="47.4" rx="1.2" ry="0.8" transform="rotate(119 65.8 47.4)" fill="#3e2c28"/>
<ellipse cx="82.4" cy="62.4" rx="1.0" ry="0.6" transform="rotate(84 82.4 62.4)" fill="#3e2c28"/>
<ellipse cx="70.6" cy="47.0" rx="1.9" ry="1.0" transform="rotate(24 70.6 47.0)" fill="#2c3e28"/>
<ellipse cx="75.9" cy="45.8" rx="1.1" ry="0.7" transform="rotate(66 75.9 45.8)" fill="#2c3e28"/>
<ellipse cx="86.6" cy="59.4" rx="1.9" ry="0.9" transform="rotate(38 86.6 59.4)" fill="#2c3e28"/>
<ellipse cx="78.9" cy="63.7" rx="1.9" ry="0.8" transform="rotate(138 78.9 63.7)" fill="#3e2c28"/>
<ellipse cx="91.6" cy="52.3" rx="1.4" ry="0.9" transform="rotate(36 91.6 52.3)" fill="#5a3e36"/>
<ellipse cx="74.6" cy="61.1" rx="0.9" ry="0.4" transform="rotate(114 74.6 61.1)" fill="#3e2c28"/>
<ellipse cx="72.5" cy="55.4" rx="1.8" ry="0.8" transform="rotate(145 72.5 55.4)" fill="#2c3e28"/>
<ellipse cx="71.6" cy="61.6" rx="1.5" ry="0.8" transform="rotate(113 71.6 61.6)" fill="#5a3e36"/>
<ellipse cx="85.0" cy="44.4" rx="1.6" ry="0.6" transform="rotate(175 85.0 44.4)" fill="#3e2c28"/>
<ellipse cx="88.5" cy="51.4" rx="1.6" ry="1.1" transform="rotate(34 88.5 51.4)" fill="#4a3430"/>
<ellipse cx="68.7" cy="44.5" rx="1.9" ry="0.9" transform="rotate(116 68.7 44.5)" fill="#3e2c28"/>
<ellipse cx="75.6" cy="43.9" rx="1.0" ry="0.6" transform="rotate(34 75.6 43.9)" fill="#3e2c28"/>
<ellipse cx="81.6" cy="45.0" rx="1.6" ry="0.8" transform="rotate(18 81.6 45.0)" fill="#5a3e36"/>
<ellipse cx="77.3" cy="63.1" rx="1.6" ry="0.6" transform="rotate(78 77.3 63.1)" fill="#2c3e28"/>
<ellipse cx="82.9" cy="55.5" rx="1.9" ry="0.8" transform="rotate(62 82.9 55.5)" fill="#4a3430"/>
<ellipse cx="78.4" cy="41.7" rx="1.6" ry="0.9" transform="rotate(28 78.4 41.7)" fill="#4a3430"/>
<ellipse cx="65.8" cy="54.9" rx="1.9" ry="0.8" transform="rotate(37 65.8 54.9)" fill="#2c3e28"/>
<ellipse cx="71.6" cy="42.2" rx="1.4" ry="0.6" transform="rotate(54 71.6 42.2)" fill="#3e2c28"/>
<ellipse cx="70.7" cy="46.3" rx="1.9" ry="0.9" transform="rotate(136 70.7 46.3)" fill="#4a3430"/>
<ellipse cx="67.4" cy="59.5" rx="1.3" ry="0.7" transform="rotate(4 67.4 59.5)" fill="#5a3e36"/>
<ellipse cx="86.7" cy="50.7" rx="1.9" ry="0.9" transform="rotate(56 86.7 50.7)" fill="#4a3430"/>
<ellipse cx="82.6" cy="61.0" rx="1.7" ry="1.0" transform="rotate(105 82.6 61.0)" fill="#3e2c28"/>
<ellipse cx="72.2" cy="61.5" rx="1.9" ry="1.2" transform="rotate(38 72.2 61.5)" fill="#4a3430"/>
<ellipse cx="80.8" cy="52.0" rx="1.5" ry="0.6" transform="rotate(100 80.8 52.0)" fill="#4a3430"/>
<ellipse cx="66.4" cy="49.6" rx="1.9" ry="1.3" transform="rotate(2 66.4 49.6)" fill="#3e2c28"/>
<ellipse cx="83.0" cy="61.9" rx="1.4" ry="0.5" transform="rotate(54 83.0 61.9)" fill="#5a3e36"/>
<ellipse cx="68.3" cy="50.2" rx="0.8" ry="0.4" transform="rotate(69 68.3 50.2)" fill="#2c3e28"/>
<ellipse cx="79.6" cy="46.0" rx="0.9" ry="0.3" transform="rotate(14 79.6 46.0)" fill="#4a3430"/>
<ellipse cx="87.7" cy="47.9" rx="1.5" ry="0.9" transform="rotate(21 87.7 47.9)" fill="#4a3430"/>
<ellipse cx="85.1" cy="56.0" rx="1.6" ry="1.0" transform="rotate(161 85.1 56.0)" fill="#4a3430"/>
<ellipse cx="79.7" cy="47.8" rx="2.0" ry="0.9" transform="rotate(78 79.7 47.8)" fill="#5a3e36"/>
<ellipse cx="75.4" cy="45.2" rx="1.4" ry="0.8" transform="rotate(68 75.4 45.2)" fill="#2c3e28"/>
<ellipse cx="89.0" cy="55.2" rx="1.6" ry="0.7" transform="rotate(166 89.0 55.2)" fill="#5a3e36"/>
<ellipse cx="77.2" cy="59.8" rx="1.1" ry="0.5" transform="rotate(93 77.2 59.8)" fill="#3e2c28"/>
<ellipse cx="68.5" cy="47.1" rx="1.8" ry="0.7" transform="rotate(3 68.5 47.1)" fill="#4a3430"/>
<ellipse cx="65.0" cy="51.6" rx="1.9" ry="0.9" transform="rotate(106 65.0 51.6)" fill="#4a3430"/>
<ellipse cx="67.1" cy="60.8" rx="1.3" ry="0.7" transform="rotate(147 67.1 60.8)" fill="#3e2c28"/>
<ellipse cx="74.9" cy="60.8" rx="0.9" ry="0.3" transform="rotate(91 74.9 60.8)" fill="#4a3430"/>
<ellipse cx="88.5" cy="54.4" rx="1.5" ry="0.6" transform="rotate(52 88.5 54.4)" fill="#3e2c28"/>
<ellipse cx="77.2" cy="55.2" rx="1.2" ry="0.8" transform="rotate(101 77.2 55.2)" fill="#4a3430"/>
<ellipse cx="80.3" cy="57.1" rx="1.2" ry="0.4" transform="rotate(20 80.3 57.1)" fill="#3e2c28"/>
<path d="M136.0 72.0 L146.0 64.0 L160.0 66.0 L173.0 62.0 L173.0 112.0 L140.0 112.0 L136.0 95.0 Z" fill="#3e5a30" />
<ellipse cx="138.4" cy="96.7" rx="1.3" ry="0.8" transform="rotate(50 138.4 96.7)" fill="#3e5c30"/>
<ellipse cx="146.7" cy="90.7" rx="0.7" ry="0.4" transform="rotate(59 146.7 90.7)" fill="#24381c"/>
<ellipse cx="146.2" cy="94.1" rx="0.8" ry="0.5" transform="rotate(89 146.2 94.1)" fill="#56763e"/>
<ellipse cx="149.6" cy="77.8" rx="1.6" ry="0.7" transform="rotate(55 149.6 77.8)" fill="#56763e"/>
<ellipse cx="151.3" cy="106.6" rx="1.0" ry="0.7" transform="rotate(161 151.3 106.6)" fill="#3e5c30"/>
<ellipse cx="170.9" cy="74.9" rx="1.6" ry="0.9" transform="rotate(37 170.9 74.9)" fill="#24381c"/>
<ellipse cx="160.0" cy="102.5" rx="1.3" ry="0.5" transform="rotate(155 160.0 102.5)" fill="#56763e"/>
<ellipse cx="149.3" cy="96.5" rx="1.7" ry="0.8" transform="rotate(31 149.3 96.5)" fill="#2e4a24"/>
<ellipse cx="147.1" cy="102.1" rx="0.9" ry="0.5" transform="rotate(95 147.1 102.1)" fill="#3e5c30"/>
<ellipse cx="137.6" cy="71.6" rx="1.8" ry="0.9" transform="rotate(76 137.6 71.6)" fill="#6e9050"/>
<ellipse cx="160.7" cy="90.1" rx="1.8" ry="0.8" transform="rotate(119 160.7 90.1)" fill="#3e5c30"/>
<ellipse cx="155.1" cy="71.4" rx="1.7" ry="1.2" transform="rotate(140 155.1 71.4)" fill="#24381c"/>
<ellipse cx="153.2" cy="104.0" rx="1.0" ry="0.6" transform="rotate(129 153.2 104.0)" fill="#56763e"/>
<ellipse cx="166.8" cy="106.0" rx="1.0" ry="0.6" transform="rotate(86 166.8 106.0)" fill="#6e9050"/>
<ellipse cx="158.3" cy="111.2" rx="1.7" ry="0.7" transform="rotate(98 158.3 111.2)" fill="#56763e"/>
<ellipse cx="142.3" cy="69.8" rx="1.3" ry="0.6" transform="rotate(61 142.3 69.8)" fill="#2e4a24"/>
<ellipse cx="155.4" cy="69.2" rx="1.3" ry="0.9" transform="rotate(146 155.4 69.2)" fill="#6e9050"/>
<ellipse cx="147.2" cy="75.4" rx="1.1" ry="0.4" transform="rotate(78 147.2 75.4)" fill="#3e5c30"/>
<ellipse cx="153.3" cy="84.0" rx="1.4" ry="0.9" transform="rotate(17 153.3 84.0)" fill="#56763e"/>
<ellipse cx="150.9" cy="74.0" rx="1.4" ry="0.7" transform="rotate(76 150.9 74.0)" fill="#24381c"/>
<ellipse cx="139.3" cy="84.4" rx="0.9" ry="0.3" transform="rotate(103 139.3 84.4)" fill="#2e4a24"/>
<ellipse cx="168.8" cy="68.2" rx="1.6" ry="0.6" transform="rotate(128 168.8 68.2)" fill="#3e5c30"/>
<ellipse cx="156.3" cy="102.6" rx="0.9" ry="0.5" transform="rotate(48 156.3 102.6)" fill="#3e5c30"/>
<ellipse cx="172.4" cy="101.3" rx="1.4" ry="0.7" transform="rotate(78 172.4 101.3)" fill="#56763e"/>
<ellipse cx="166.1" cy="90.3" rx="1.1" ry="0.7" transform="rotate(67 166.1 90.3)" fill="#2e4a24"/>
<ellipse cx="137.4" cy="74.7" rx="1.5" ry="1.0" transform="rotate(47 137.4 74.7)" fill="#6e9050"/>
<ellipse cx="170.7" cy="100.9" rx="1.2" ry="0.6" transform="rotate(137 170.7 100.9)" fill="#6e9050"/>
<ellipse cx="170.0" cy="96.4" rx="0.9" ry="0.3" transform="rotate(134 170.0 96.4)" fill="#56763e"/>
<ellipse cx="143.8" cy="72.5" rx="1.4" ry="0.6" transform="rotate(60 143.8 72.5)" fill="#3e5c30"/>
<ellipse cx="167.0" cy="102.7" rx="0.8" ry="0.4" transform="rotate(12 167.0 102.7)" fill="#2e4a24"/>
<ellipse cx="136.7" cy="86.0" rx="1.2" ry="0.8" transform="rotate(74 136.7 86.0)" fill="#56763e"/>
<ellipse cx="164.9" cy="91.3" rx="1.0" ry="0.4" transform="rotate(88 164.9 91.3)" fill="#3e5c30"/>
<ellipse cx="165.2" cy="83.6" rx="0.9" ry="0.7" transform="rotate(5 165.2 83.6)" fill="#2e4a24"/>
<ellipse cx="167.6" cy="104.9" rx="1.2" ry="0.6" transform="rotate(67 167.6 104.9)" fill="#2e4a24"/>
<ellipse cx="157.7" cy="91.0" rx="0.7" ry="0.3" transform="rotate(47 157.7 91.0)" fill="#24381c"/>
<ellipse cx="171.5" cy="87.0" rx="1.3" ry="0.5" transform="rotate(18 171.5 87.0)" fill="#2e4a24"/>
<ellipse cx="154.4" cy="83.6" rx="1.3" ry="0.5" transform="rotate(132 154.4 83.6)" fill="#3e5c30"/>
<ellipse cx="168.2" cy="111.3" rx="1.5" ry="0.6" transform="rotate(158 168.2 111.3)" fill="#24381c"/>
<ellipse cx="146.2" cy="108.0" rx="1.6" ry="1.1" transform="rotate(45 146.2 108.0)" fill="#24381c"/>
<ellipse cx="153.3" cy="67.2" rx="1.4" ry="0.8" transform="rotate(9 153.3 67.2)" fill="#6e9050"/>
<ellipse cx="156.1" cy="108.4" rx="1.3" ry="0.9" transform="rotate(102 156.1 108.4)" fill="#2e4a24"/>
<ellipse cx="151.9" cy="106.1" rx="1.4" ry="0.8" transform="rotate(26 151.9 106.1)" fill="#3e5c30"/>
<ellipse cx="147.2" cy="107.1" rx="0.7" ry="0.3" transform="rotate(120 147.2 107.1)" fill="#56763e"/>
<ellipse cx="147.9" cy="105.8" rx="0.8" ry="0.5" transform="rotate(6 147.9 105.8)" fill="#56763e"/>
<ellipse cx="165.6" cy="73.9" rx="1.1" ry="0.5" transform="rotate(127 165.6 73.9)" fill="#24381c"/>
<ellipse cx="172.2" cy="100.5" rx="1.4" ry="0.5" transform="rotate(145 172.2 100.5)" fill="#2e4a24"/>
<ellipse cx="145.1" cy="87.8" rx="1.1" ry="0.5" transform="rotate(145 145.1 87.8)" fill="#56763e"/>
<ellipse cx="167.2" cy="110.1" rx="1.0" ry="0.5" transform="rotate(95 167.2 110.1)" fill="#3e5c30"/>
<ellipse cx="166.9" cy="96.1" rx="1.5" ry="0.7" transform="rotate(13 166.9 96.1)" fill="#3e5c30"/>
<ellipse cx="141.0" cy="77.2" rx="1.5" ry="0.8" transform="rotate(22 141.0 77.2)" fill="#3e5c30"/>
<ellipse cx="154.8" cy="69.2" rx="1.6" ry="1.0" transform="rotate(39 154.8 69.2)" fill="#56763e"/>
<ellipse cx="166.0" cy="73.5" rx="0.7" ry="0.5" transform="rotate(149 166.0 73.5)" fill="#2e4a24"/>
<ellipse cx="169.2" cy="71.1" rx="1.2" ry="0.6" transform="rotate(145 169.2 71.1)" fill="#6e9050"/>
<ellipse cx="172.2" cy="68.5" rx="0.9" ry="0.5" transform="rotate(71 172.2 68.5)" fill="#56763e"/>
<ellipse cx="167.4" cy="90.3" rx="1.0" ry="0.4" transform="rotate(98 167.4 90.3)" fill="#56763e"/>
<ellipse cx="158.7" cy="80.6" rx="0.9" ry="0.5" transform="rotate(4 158.7 80.6)" fill="#2e4a24"/>
<ellipse cx="143.5" cy="77.3" rx="0.7" ry="0.3" transform="rotate(133 143.5 77.3)" fill="#3e5c30"/>
<ellipse cx="165.8" cy="89.0" rx="1.2" ry="0.5" transform="rotate(72 165.8 89.0)" fill="#56763e"/>
<ellipse cx="163.9" cy="66.6" rx="1.4" ry="0.5" transform="rotate(44 163.9 66.6)" fill="#2e4a24"/>
<ellipse cx="168.3" cy="82.5" rx="1.2" ry="0.4" transform="rotate(61 168.3 82.5)" fill="#56763e"/>
<ellipse cx="157.7" cy="83.8" rx="1.1" ry="0.6" transform="rotate(65 157.7 83.8)" fill="#56763e"/>
<ellipse cx="168.4" cy="65.4" rx="1.2" ry="0.5" transform="rotate(21 168.4 65.4)" fill="#3e5c30"/>
<ellipse cx="148.0" cy="76.1" rx="1.7" ry="0.9" transform="rotate(87 148.0 76.1)" fill="#3e5c30"/>
<ellipse cx="159.0" cy="66.5" rx="0.8" ry="0.3" transform="rotate(80 159.0 66.5)" fill="#3e5c30"/>
<ellipse cx="145.5" cy="74.9" rx="0.8" ry="0.4" transform="rotate(138 145.5 74.9)" fill="#56763e"/>
<ellipse cx="154.9" cy="71.5" rx="0.7" ry="0.5" transform="rotate(150 154.9 71.5)" fill="#6e9050"/>
<ellipse cx="149.9" cy="68.2" rx="1.4" ry="0.9" transform="rotate(166 149.9 68.2)" fill="#56763e"/>
<ellipse cx="147.4" cy="87.7" rx="1.0" ry="0.5" transform="rotate(84 147.4 87.7)" fill="#24381c"/>
<ellipse cx="153.7" cy="110.2" rx="0.9" ry="0.6" transform="rotate(115 153.7 110.2)" fill="#2e4a24"/>
<ellipse cx="151.3" cy="111.5" rx="0.7" ry="0.5" transform="rotate(148 151.3 111.5)" fill="#6e9050"/>
<ellipse cx="168.4" cy="105.7" rx="1.2" ry="0.4" transform="rotate(179 168.4 105.7)" fill="#56763e"/>
<ellipse cx="161.8" cy="96.1" rx="0.8" ry="0.5" transform="rotate(179 161.8 96.1)" fill="#6e9050"/>
<ellipse cx="149.9" cy="82.7" rx="1.3" ry="0.9" transform="rotate(170 149.9 82.7)" fill="#3e5c30"/>
<ellipse cx="149.5" cy="67.4" rx="0.8" ry="0.4" transform="rotate(105 149.5 67.4)" fill="#3e5c30"/>
<ellipse cx="164.1" cy="108.8" rx="1.4" ry="0.8" transform="rotate(114 164.1 108.8)" fill="#56763e"/>
<ellipse cx="170.7" cy="91.5" rx="1.3" ry="0.6" transform="rotate(45 170.7 91.5)" fill="#6e9050"/>
<ellipse cx="173.0" cy="98.6" rx="0.7" ry="0.4" transform="rotate(92 173.0 98.6)" fill="#2e4a24"/>
<ellipse cx="166.1" cy="64.8" rx="1.0" ry="0.4" transform="rotate(39 166.1 64.8)" fill="#3e5c30"/>
<ellipse cx="164.9" cy="84.1" rx="1.3" ry="0.7" transform="rotate(8 164.9 84.1)" fill="#2e4a24"/>
<ellipse cx="142.4" cy="72.4" rx="0.8" ry="0.3" transform="rotate(95 142.4 72.4)" fill="#6e9050"/>
<ellipse cx="149.4" cy="69.1" rx="1.1" ry="0.5" transform="rotate(22 149.4 69.1)" fill="#2e4a24"/>
<ellipse cx="163.3" cy="93.3" rx="1.0" ry="0.5" transform="rotate(42 163.3 93.3)" fill="#56763e"/>
<ellipse cx="153.3" cy="70.0" rx="1.5" ry="1.0" transform="rotate(162 153.3 70.0)" fill="#56763e"/>
<ellipse cx="158.0" cy="94.7" rx="1.1" ry="0.6" transform="rotate(34 158.0 94.7)" fill="#6e9050"/>
<ellipse cx="160.9" cy="88.6" rx="1.4" ry="0.5" transform="rotate(60 160.9 88.6)" fill="#56763e"/>
<ellipse cx="158.9" cy="77.9" rx="0.7" ry="0.4" transform="rotate(78 158.9 77.9)" fill="#6e9050"/>
<ellipse cx="147.2" cy="73.6" rx="1.5" ry="0.7" transform="rotate(130 147.2 73.6)" fill="#6e9050"/>
<ellipse cx="156.8" cy="85.9" rx="1.1" ry="0.6" transform="rotate(166 156.8 85.9)" fill="#2e4a24"/>
<ellipse cx="172.5" cy="62.5" rx="1.7" ry="0.6" transform="rotate(98 172.5 62.5)" fill="#3e5c30"/>
<ellipse cx="159.3" cy="94.4" rx="1.2" ry="0.6" transform="rotate(117 159.3 94.4)" fill="#24381c"/>
<ellipse cx="164.0" cy="86.5" rx="0.7" ry="0.5" transform="rotate(39 164.0 86.5)" fill="#3e5c30"/>
<ellipse cx="164.8" cy="96.8" rx="1.0" ry="0.6" transform="rotate(25 164.8 96.8)" fill="#3e5c30"/>
<ellipse cx="165.7" cy="93.2" rx="1.6" ry="0.7" transform="rotate(89 165.7 93.2)" fill="#56763e"/>
<ellipse cx="163.0" cy="71.9" rx="1.0" ry="0.5" transform="rotate(17 163.0 71.9)" fill="#6e9050"/>
<ellipse cx="169.9" cy="71.7" rx="0.9" ry="0.4" transform="rotate(51 169.9 71.7)" fill="#6e9050"/>
<ellipse cx="163.8" cy="69.4" rx="0.8" ry="0.4" transform="rotate(93 163.8 69.4)" fill="#6e9050"/>
<ellipse cx="159.8" cy="84.8" rx="1.7" ry="1.0" transform="rotate(122 159.8 84.8)" fill="#24381c"/>
<ellipse cx="148.7" cy="94.9" rx="1.8" ry="1.1" transform="rotate(40 148.7 94.9)" fill="#56763e"/>
<ellipse cx="147.9" cy="71.9" rx="1.2" ry="0.8" transform="rotate(4 147.9 71.9)" fill="#6e9050"/>
<ellipse cx="146.4" cy="87.6" rx="1.7" ry="0.7" transform="rotate(66 146.4 87.6)" fill="#6e9050"/>
<ellipse cx="148.7" cy="87.4" rx="1.2" ry="0.4" transform="rotate(166 148.7 87.4)" fill="#3e5c30"/>
<ellipse cx="147.3" cy="88.3" rx="1.6" ry="0.9" transform="rotate(62 147.3 88.3)" fill="#24381c"/>
<ellipse cx="165.3" cy="90.1" rx="1.2" ry="0.6" transform="rotate(24 165.3 90.1)" fill="#6e9050"/>
<ellipse cx="158.5" cy="66.9" rx="1.7" ry="1.1" transform="rotate(6 158.5 66.9)" fill="#24381c"/>
<ellipse cx="144.8" cy="88.8" rx="1.6" ry="0.8" transform="rotate(90 144.8 88.8)" fill="#2e4a24"/>
<ellipse cx="143.1" cy="93.3" rx="1.2" ry="0.8" transform="rotate(34 143.1 93.3)" fill="#6e9050"/>
<ellipse cx="137.5" cy="75.7" rx="0.8" ry="0.3" transform="rotate(95 137.5 75.7)" fill="#56763e"/>
<ellipse cx="171.3" cy="93.6" rx="1.3" ry="0.5" transform="rotate(68 171.3 93.6)" fill="#6e9050"/>
<ellipse cx="144.0" cy="100.2" rx="1.2" ry="0.8" transform="rotate(61 144.0 100.2)" fill="#3e5c30"/>
<ellipse cx="143.7" cy="100.7" rx="0.7" ry="0.4" transform="rotate(88 143.7 100.7)" fill="#56763e"/>
<ellipse cx="156.2" cy="109.1" rx="0.8" ry="0.5" transform="rotate(139 156.2 109.1)" fill="#56763e"/>
<ellipse cx="158.2" cy="67.0" rx="1.8" ry="0.7" transform="rotate(141 158.2 67.0)" fill="#6e9050"/>
<ellipse cx="149.4" cy="65.9" rx="0.8" ry="0.4" transform="rotate(53 149.4 65.9)" fill="#3e5c30"/>
<ellipse cx="165.8" cy="85.1" rx="1.0" ry="0.5" transform="rotate(147 165.8 85.1)" fill="#2e4a24"/>
<ellipse cx="142.9" cy="70.9" rx="0.9" ry="0.4" transform="rotate(105 142.9 70.9)" fill="#56763e"/>
<ellipse cx="172.0" cy="109.3" rx="1.8" ry="0.7" transform="rotate(127 172.0 109.3)" fill="#2e4a24"/>
<ellipse cx="170.2" cy="83.9" rx="1.4" ry="0.9" transform="rotate(50 170.2 83.9)" fill="#2e4a24"/>
<ellipse cx="151.2" cy="90.3" rx="1.3" ry="0.6" transform="rotate(83 151.2 90.3)" fill="#56763e"/>
<ellipse cx="163.4" cy="72.5" rx="0.9" ry="0.6" transform="rotate(120 163.4 72.5)" fill="#24381c"/>
<ellipse cx="146.0" cy="86.3" rx="1.1" ry="0.7" transform="rotate(78 146.0 86.3)" fill="#2e4a24"/>
<ellipse cx="154.7" cy="111.3" rx="1.2" ry="0.7" transform="rotate(153 154.7 111.3)" fill="#2e4a24"/>
<ellipse cx="151.0" cy="68.8" rx="1.5" ry="0.6" transform="rotate(140 151.0 68.8)" fill="#3e5c30"/>
<ellipse cx="165.7" cy="68.6" rx="1.7" ry="0.8" transform="rotate(48 165.7 68.6)" fill="#56763e"/>
<ellipse cx="140.3" cy="108.4" rx="1.1" ry="0.4" transform="rotate(153 140.3 108.4)" fill="#24381c"/>
<ellipse cx="155.0" cy="111.4" rx="0.9" ry="0.3" transform="rotate(59 155.0 111.4)" fill="#6e9050"/>
<ellipse cx="153.7" cy="105.5" rx="1.4" ry="0.9" transform="rotate(38 153.7 105.5)" fill="#3e5c30"/>
<ellipse cx="147.2" cy="98.5" rx="0.9" ry="0.5" transform="rotate(107 147.2 98.5)" fill="#3e5c30"/>
<ellipse cx="142.2" cy="79.2" rx="1.6" ry="1.0" transform="rotate(176 142.2 79.2)" fill="#2e4a24"/>
<ellipse cx="163.1" cy="84.0" rx="0.8" ry="0.5" transform="rotate(60 163.1 84.0)" fill="#24381c"/>
<ellipse cx="164.8" cy="87.8" rx="1.3" ry="0.9" transform="rotate(117 164.8 87.8)" fill="#6e9050"/>
<ellipse cx="157.8" cy="86.7" rx="1.5" ry="0.8" transform="rotate(23 157.8 86.7)" fill="#3e5c30"/>
<ellipse cx="144.9" cy="88.0" rx="1.3" ry="0.5" transform="rotate(47 144.9 88.0)" fill="#6e9050"/>
<ellipse cx="172.0" cy="66.5" rx="0.7" ry="0.4" transform="rotate(71 172.0 66.5)" fill="#3e5c30"/>
<ellipse cx="142.5" cy="68.0" rx="0.7" ry="0.4" transform="rotate(27 142.5 68.0)" fill="#2e4a24"/>
<ellipse cx="170.7" cy="76.3" rx="1.2" ry="0.6" transform="rotate(11 170.7 76.3)" fill="#56763e"/>
<ellipse cx="166.9" cy="74.1" rx="1.0" ry="0.6" transform="rotate(143 166.9 74.1)" fill="#3e5c30"/>
<ellipse cx="152.4" cy="67.8" rx="0.9" ry="0.6" transform="rotate(142 152.4 67.8)" fill="#6e9050"/>
<ellipse cx="140.2" cy="91.7" rx="1.8" ry="1.1" transform="rotate(83 140.2 91.7)" fill="#56763e"/>
<ellipse cx="171.8" cy="83.2" rx="0.9" ry="0.6" transform="rotate(80 171.8 83.2)" fill="#24381c"/>
<ellipse cx="153.5" cy="106.6" rx="1.7" ry="1.0" transform="rotate(18 153.5 106.6)" fill="#24381c"/>
<ellipse cx="136.3" cy="82.4" rx="1.3" ry="0.8" transform="rotate(180 136.3 82.4)" fill="#24381c"/>
<ellipse cx="144.5" cy="79.1" rx="1.3" ry="0.6" transform="rotate(79 144.5 79.1)" fill="#56763e"/>
<ellipse cx="162.9" cy="87.9" rx="1.8" ry="1.1" transform="rotate(12 162.9 87.9)" fill="#24381c"/>
<ellipse cx="136.7" cy="74.5" rx="1.7" ry="0.7" transform="rotate(90 136.7 74.5)" fill="#2e4a24"/>
<ellipse cx="152.6" cy="78.1" rx="0.9" ry="0.6" transform="rotate(96 152.6 78.1)" fill="#56763e"/>
<ellipse cx="169.3" cy="87.8" rx="1.0" ry="0.5" transform="rotate(50 169.3 87.8)" fill="#56763e"/>
<ellipse cx="146.8" cy="97.1" rx="0.9" ry="0.5" transform="rotate(106 146.8 97.1)" fill="#3e5c30"/>
<ellipse cx="140.9" cy="72.7" rx="1.1" ry="0.5" transform="rotate(137 140.9 72.7)" fill="#3e5c30"/>
<ellipse cx="167.6" cy="111.0" rx="0.9" ry="0.4" transform="rotate(9 167.6 111.0)" fill="#6e9050"/>
<ellipse cx="142.5" cy="107.8" rx="1.1" ry="0.5" transform="rotate(177 142.5 107.8)" fill="#56763e"/>
<ellipse cx="140.8" cy="107.7" rx="1.8" ry="1.1" transform="rotate(92 140.8 107.7)" fill="#24381c"/>
<ellipse cx="143.7" cy="70.9" rx="1.1" ry="0.6" transform="rotate(98 143.7 70.9)" fill="#2e4a24"/>
<ellipse cx="160.9" cy="99.4" rx="0.9" ry="0.6" transform="rotate(16 160.9 99.4)" fill="#2e4a24"/>
<ellipse cx="166.4" cy="89.5" rx="1.1" ry="0.5" transform="rotate(52 166.4 89.5)" fill="#6e9050"/>
<ellipse cx="165.1" cy="95.9" rx="1.5" ry="0.5" transform="rotate(134 165.1 95.9)" fill="#24381c"/>
<ellipse cx="160.2" cy="67.7" rx="0.7" ry="0.3" transform="rotate(46 160.2 67.7)" fill="#24381c"/>
<ellipse cx="138.9" cy="93.5" rx="1.7" ry="0.7" transform="rotate(88 138.9 93.5)" fill="#24381c"/>
<ellipse cx="163.9" cy="79.1" rx="0.8" ry="0.5" transform="rotate(46 163.9 79.1)" fill="#2e4a24"/>
<ellipse cx="150.7" cy="101.0" rx="1.6" ry="0.8" transform="rotate(128 150.7 101.0)" fill="#56763e"/>
<ellipse cx="171.2" cy="104.6" rx="1.4" ry="0.8" transform="rotate(58 171.2 104.6)" fill="#6e9050"/>
<ellipse cx="146.1" cy="66.3" rx="1.8" ry="0.7" transform="rotate(110 146.1 66.3)" fill="#6e9050"/>
<ellipse cx="157.3" cy="94.7" rx="1.1" ry="0.5" transform="rotate(113 157.3 94.7)" fill="#24381c"/>
<ellipse cx="154.9" cy="71.0" rx="1.7" ry="0.6" transform="rotate(31 154.9 71.0)" fill="#56763e"/>
<ellipse cx="149.6" cy="87.7" rx="0.8" ry="0.6" transform="rotate(75 149.6 87.7)" fill="#24381c"/>
<ellipse cx="147.8" cy="69.2" rx="1.4" ry="0.8" transform="rotate(23 147.8 69.2)" fill="#6e9050"/>
<ellipse cx="166.3" cy="105.4" rx="1.8" ry="0.9" transform="rotate(28 166.3 105.4)" fill="#3e5c30"/>
<ellipse cx="160.0" cy="89.1" rx="1.0" ry="0.4" transform="rotate(81 160.0 89.1)" fill="#3e5c30"/>
<ellipse cx="150.9" cy="68.3" rx="1.1" ry="0.6" transform="rotate(99 150.9 68.3)" fill="#3e5c30"/>
<ellipse cx="149.7" cy="101.4" rx="1.3" ry="0.7" transform="rotate(82 149.7 101.4)" fill="#2e4a24"/>
<ellipse cx="164.3" cy="88.8" rx="1.6" ry="0.9" transform="rotate(21 164.3 88.8)" fill="#6e9050"/>
<ellipse cx="158.6" cy="69.6" rx="1.1" ry="0.7" transform="rotate(3 158.6 69.6)" fill="#2e4a24"/>
<ellipse cx="139.7" cy="97.3" rx="1.6" ry="1.0" transform="rotate(159 139.7 97.3)" fill="#6e9050"/>
<ellipse cx="138.0" cy="99.4" rx="1.0" ry="0.4" transform="rotate(63 138.0 99.4)" fill="#56763e"/>
<ellipse cx="170.2" cy="84.8" rx="1.4" ry="0.5" transform="rotate(55 170.2 84.8)" fill="#24381c"/>
<ellipse cx="139.7" cy="77.7" rx="0.8" ry="0.5" transform="rotate(96 139.7 77.7)" fill="#6e9050"/>
<ellipse cx="164.1" cy="89.8" rx="1.1" ry="0.5" transform="rotate(159 164.1 89.8)" fill="#6e9050"/>
<ellipse cx="159.3" cy="96.7" rx="1.4" ry="0.7" transform="rotate(7 159.3 96.7)" fill="#24381c"/>
<ellipse cx="146.5" cy="107.8" rx="0.9" ry="0.6" transform="rotate(97 146.5 107.8)" fill="#56763e"/>
<ellipse cx="170.0" cy="67.1" rx="0.9" ry="0.5" transform="rotate(115 170.0 67.1)" fill="#2e4a24"/>
<ellipse cx="170.4" cy="64.6" rx="0.7" ry="0.3" transform="rotate(140 170.4 64.6)" fill="#56763e"/>
<ellipse cx="150.0" cy="106.0" rx="0.9" ry="0.6" transform="rotate(154 150.0 106.0)" fill="#24381c"/>
<ellipse cx="150.7" cy="85.9" rx="1.0" ry="0.7" transform="rotate(141 150.7 85.9)" fill="#6e9050"/>
<ellipse cx="147.3" cy="98.6" rx="1.2" ry="0.8" transform="rotate(65 147.3 98.6)" fill="#56763e"/>
<ellipse cx="161.3" cy="84.5" rx="1.3" ry="0.8" transform="rotate(95 161.3 84.5)" fill="#2e4a24"/>
<ellipse cx="162.3" cy="110.5" rx="1.5" ry="0.8" transform="rotate(99 162.3 110.5)" fill="#2e4a24"/>
<ellipse cx="148.5" cy="97.7" rx="1.6" ry="0.8" transform="rotate(179 148.5 97.7)" fill="#3e5c30"/>
<ellipse cx="138.8" cy="90.5" rx="1.1" ry="0.5" transform="rotate(81 138.8 90.5)" fill="#2e4a24"/>
<ellipse cx="152.5" cy="89.0" rx="1.6" ry="1.1" transform="rotate(104 152.5 89.0)" fill="#24381c"/>
<ellipse cx="158.3" cy="79.3" rx="1.8" ry="1.2" transform="rotate(131 158.3 79.3)" fill="#3e5c30"/>
<ellipse cx="148.8" cy="68.3" rx="1.2" ry="0.8" transform="rotate(150 148.8 68.3)" fill="#56763e"/>
<ellipse cx="144.2" cy="73.1" rx="0.7" ry="0.3" transform="rotate(10 144.2 73.1)" fill="#24381c"/>
<ellipse cx="151.5" cy="108.0" rx="1.6" ry="0.8" transform="rotate(131 151.5 108.0)" fill="#24381c"/>
<ellipse cx="161.5" cy="97.7" rx="1.2" ry="0.6" transform="rotate(51 161.5 97.7)" fill="#2e4a24"/>
<ellipse cx="139.6" cy="109.4" rx="1.1" ry="0.6" transform="rotate(91 139.6 109.4)" fill="#2e4a24"/>
<ellipse cx="167.6" cy="102.8" rx="1.2" ry="0.5" transform="rotate(49 167.6 102.8)" fill="#24381c"/>
<ellipse cx="172.4" cy="67.6" rx="0.7" ry="0.3" transform="rotate(63 172.4 67.6)" fill="#24381c"/>
<ellipse cx="163.8" cy="109.3" rx="1.7" ry="0.8" transform="rotate(129 163.8 109.3)" fill="#6e9050"/>
<ellipse cx="141.3" cy="101.5" rx="0.7" ry="0.5" transform="rotate(155 141.3 101.5)" fill="#3e5c30"/>
<ellipse cx="156.1" cy="98.7" rx="1.8" ry="1.2" transform="rotate(19 156.1 98.7)" fill="#6e9050"/>
<ellipse cx="144.0" cy="82.5" rx="1.0" ry="0.5" transform="rotate(96 144.0 82.5)" fill="#2e4a24"/>
<circle cx="154.3" cy="58.6" r="4.8" fill="#e6e6ec"/>
<rect x="0" y="101" width="60" height="11" fill="#7c7a76"/>
<path d="M0.0 71.3 L29.8 71.3 L25.0 101.6 L0.0 101.6 Z" fill="#9c6c56" />
<path d="M0 73 L29.6 73" stroke="#b48068" stroke-width="3"/>
<path d="M0 79 L28.8 79" stroke="#8e5e48" stroke-width="0.8"/>
<path d="M53.5 59 L53.5 100" stroke="#d6d6d6" stroke-width="1.5"/>
<path d="M47.0 26.4 L51.7 26.4 L52.6 110.0 L28.0 110.0 Z" fill="#383232" />
<path d="M53.0 70.9 L87.8 75.2 L81.6 112.0 L56.0 112.0 Z" fill="#a4725a" />
<path d="M53.4 73.5 L87.5 77.8" stroke="#b8826a" stroke-width="3"/>
<path d="M55 81 L86.5 85" stroke="#94624a" stroke-width="0.9"/>
<path d="M105.0 35.2 L108.2 35.2 L108.2 112.0 L86.6 112.0 Z" fill="#969292" />
<path d="M109.5 76.1 L138.5 78.8 L133.2 112.0 L110.4 112.0 Z" fill="#a6705a" />
<path d="M109.8 78.6 L138.3 81.2" stroke="#b8806a" stroke-width="3"/>
<path d="M110.5 86 L137 88.4" stroke="#94604a" stroke-width="0.9"/>
<ellipse cx="170.9" cy="81.1" rx="1.3" ry="0.6" transform="rotate(104 170.9 81.1)" fill="#3e5c30"/>
<ellipse cx="168.2" cy="80.8" rx="1.5" ry="0.5" transform="rotate(75 168.2 80.8)" fill="#6e9050"/>
<ellipse cx="143.9" cy="85.4" rx="1.3" ry="0.6" transform="rotate(128 143.9 85.4)" fill="#3e5c30"/>
<ellipse cx="147.6" cy="76.0" rx="0.8" ry="0.5" transform="rotate(144 147.6 76.0)" fill="#3e5c30"/>
<ellipse cx="151.5" cy="79.9" rx="0.9" ry="0.5" transform="rotate(146 151.5 79.9)" fill="#6e9050"/>
<ellipse cx="172.3" cy="100.7" rx="1.4" ry="0.9" transform="rotate(74 172.3 100.7)" fill="#56763e"/>
<ellipse cx="155.2" cy="106.0" rx="0.8" ry="0.5" transform="rotate(149 155.2 106.0)" fill="#6e9050"/>
<ellipse cx="141.2" cy="87.3" rx="1.3" ry="0.6" transform="rotate(1 141.2 87.3)" fill="#2e4a24"/>
<ellipse cx="166.1" cy="92.9" rx="0.8" ry="0.4" transform="rotate(107 166.1 92.9)" fill="#56763e"/>
<ellipse cx="161.9" cy="111.3" rx="0.7" ry="0.5" transform="rotate(58 161.9 111.3)" fill="#2e4a24"/>
<ellipse cx="150.8" cy="80.0" rx="1.3" ry="0.9" transform="rotate(38 150.8 80.0)" fill="#2e4a24"/>
<ellipse cx="158.9" cy="79.6" rx="0.9" ry="0.4" transform="rotate(105 158.9 79.6)" fill="#2e4a24"/>
<ellipse cx="146.6" cy="83.3" rx="1.2" ry="0.5" transform="rotate(72 146.6 83.3)" fill="#56763e"/>
<ellipse cx="146.6" cy="103.4" rx="0.9" ry="0.3" transform="rotate(113 146.6 103.4)" fill="#3e5c30"/>
<ellipse cx="155.9" cy="90.7" rx="0.8" ry="0.3" transform="rotate(143 155.9 90.7)" fill="#56763e"/>
<ellipse cx="150.1" cy="111.0" rx="1.1" ry="0.4" transform="rotate(156 150.1 111.0)" fill="#3e5c30"/>
<ellipse cx="141.3" cy="89.5" rx="1.2" ry="0.8" transform="rotate(179 141.3 89.5)" fill="#56763e"/>
<ellipse cx="146.8" cy="79.4" rx="1.3" ry="0.8" transform="rotate(45 146.8 79.4)" fill="#3e5c30"/>
<ellipse cx="153.6" cy="90.8" rx="1.2" ry="0.8" transform="rotate(26 153.6 90.8)" fill="#56763e"/>
<ellipse cx="147.5" cy="111.3" rx="0.8" ry="0.3" transform="rotate(86 147.5 111.3)" fill="#3e5c30"/>
<ellipse cx="158.6" cy="109.1" rx="1.4" ry="0.5" transform="rotate(13 158.6 109.1)" fill="#2e4a24"/>
<ellipse cx="154.3" cy="77.9" rx="1.7" ry="1.1" transform="rotate(23 154.3 77.9)" fill="#6e9050"/>
<ellipse cx="150.1" cy="110.3" rx="1.1" ry="0.6" transform="rotate(98 150.1 110.3)" fill="#6e9050"/>
<ellipse cx="141.9" cy="107.9" rx="1.6" ry="1.1" transform="rotate(134 141.9 107.9)" fill="#2e4a24"/>
<ellipse cx="135.4" cy="82.6" rx="1.3" ry="0.8" transform="rotate(20 135.4 82.6)" fill="#3e5c30"/>
<ellipse cx="172.0" cy="105.1" rx="1.4" ry="0.7" transform="rotate(151 172.0 105.1)" fill="#2e4a24"/>
<ellipse cx="169.8" cy="100.9" rx="1.4" ry="0.6" transform="rotate(6 169.8 100.9)" fill="#3e5c30"/>
<ellipse cx="146.2" cy="81.2" rx="1.6" ry="0.9" transform="rotate(4 146.2 81.2)" fill="#6e9050"/>
<ellipse cx="164.1" cy="73.0" rx="1.1" ry="0.7" transform="rotate(94 164.1 73.0)" fill="#2e4a24"/>
<ellipse cx="164.8" cy="90.1" rx="1.5" ry="0.6" transform="rotate(159 164.8 90.1)" fill="#6e9050"/>
<ellipse cx="166.9" cy="104.8" rx="1.2" ry="0.5" transform="rotate(154 166.9 104.8)" fill="#2e4a24"/>
<ellipse cx="160.8" cy="95.5" rx="1.4" ry="0.7" transform="rotate(125 160.8 95.5)" fill="#56763e"/>
<ellipse cx="172.5" cy="102.5" rx="1.6" ry="1.1" transform="rotate(15 172.5 102.5)" fill="#56763e"/>
<ellipse cx="142.8" cy="83.6" rx="1.0" ry="0.7" transform="rotate(11 142.8 83.6)" fill="#3e5c30"/>
<ellipse cx="159.9" cy="91.0" rx="1.5" ry="0.6" transform="rotate(55 159.9 91.0)" fill="#2e4a24"/>
<ellipse cx="163.9" cy="84.1" rx="1.1" ry="0.7" transform="rotate(126 163.9 84.1)" fill="#56763e"/>
<ellipse cx="146.1" cy="105.6" rx="1.4" ry="0.8" transform="rotate(73 146.1 105.6)" fill="#3e5c30"/>
<ellipse cx="146.1" cy="75.2" rx="0.7" ry="0.4" transform="rotate(132 146.1 75.2)" fill="#2e4a24"/>
<ellipse cx="142.0" cy="100.3" rx="1.5" ry="0.9" transform="rotate(41 142.0 100.3)" fill="#3e5c30"/>
<ellipse cx="149.4" cy="81.3" rx="0.8" ry="0.6" transform="rotate(114 149.4 81.3)" fill="#56763e"/>
<ellipse cx="151.5" cy="110.4" rx="1.2" ry="0.8" transform="rotate(39 151.5 110.4)" fill="#56763e"/>
<ellipse cx="152.8" cy="108.2" rx="1.3" ry="0.7" transform="rotate(105 152.8 108.2)" fill="#6e9050"/>
<ellipse cx="159.3" cy="100.8" rx="1.2" ry="0.8" transform="rotate(13 159.3 100.8)" fill="#56763e"/>
<ellipse cx="162.6" cy="96.9" rx="1.5" ry="0.6" transform="rotate(29 162.6 96.9)" fill="#6e9050"/>
<ellipse cx="148.3" cy="104.4" rx="1.2" ry="0.8" transform="rotate(123 148.3 104.4)" fill="#6e9050"/>
<ellipse cx="139.3" cy="81.1" rx="1.0" ry="0.4" transform="rotate(91 139.3 81.1)" fill="#6e9050"/>
<ellipse cx="162.8" cy="90.7" rx="0.7" ry="0.3" transform="rotate(162 162.8 90.7)" fill="#3e5c30"/>
<ellipse cx="159.6" cy="105.0" rx="1.2" ry="0.5" transform="rotate(170 159.6 105.0)" fill="#3e5c30"/>
<ellipse cx="155.9" cy="74.9" rx="1.0" ry="0.6" transform="rotate(121 155.9 74.9)" fill="#3e5c30"/>
<ellipse cx="154.7" cy="97.6" rx="0.9" ry="0.5" transform="rotate(152 154.7 97.6)" fill="#6e9050"/>
<ellipse cx="140.7" cy="84.5" rx="0.9" ry="0.6" transform="rotate(147 140.7 84.5)" fill="#3e5c30"/>
<ellipse cx="144.9" cy="78.3" rx="1.1" ry="0.4" transform="rotate(75 144.9 78.3)" fill="#6e9050"/>
<ellipse cx="148.9" cy="74.2" rx="1.5" ry="0.6" transform="rotate(24 148.9 74.2)" fill="#6e9050"/>
<ellipse cx="139.9" cy="97.8" rx="0.8" ry="0.5" transform="rotate(125 139.9 97.8)" fill="#56763e"/>
<ellipse cx="153.3" cy="110.0" rx="0.9" ry="0.4" transform="rotate(70 153.3 110.0)" fill="#3e5c30"/>
<ellipse cx="147.7" cy="107.2" rx="1.4" ry="0.5" transform="rotate(39 147.7 107.2)" fill="#2e4a24"/>
<ellipse cx="156.1" cy="95.2" rx="0.8" ry="0.5" transform="rotate(43 156.1 95.2)" fill="#3e5c30"/>
<ellipse cx="154.7" cy="84.3" rx="1.6" ry="0.8" transform="rotate(76 154.7 84.3)" fill="#56763e"/>
<ellipse cx="164.0" cy="92.6" rx="1.4" ry="0.8" transform="rotate(173 164.0 92.6)" fill="#6e9050"/>
<ellipse cx="163.6" cy="79.1" rx="1.3" ry="0.6" transform="rotate(42 163.6 79.1)" fill="#3e5c30"/>
<ellipse cx="142.6" cy="99.8" rx="1.2" ry="0.6" transform="rotate(127 142.6 99.8)" fill="#6e9050"/>
<ellipse cx="172.6" cy="112.0" rx="1.5" ry="0.7" transform="rotate(120 172.6 112.0)" fill="#3e5c30"/>
<ellipse cx="153.4" cy="91.0" rx="1.4" ry="0.6" transform="rotate(150 153.4 91.0)" fill="#6e9050"/>
<ellipse cx="138.1" cy="90.3" rx="0.8" ry="0.3" transform="rotate(80 138.1 90.3)" fill="#6e9050"/>
<ellipse cx="152.6" cy="81.6" rx="1.0" ry="0.6" transform="rotate(83 152.6 81.6)" fill="#2e4a24"/>
<ellipse cx="171.8" cy="81.8" rx="1.1" ry="0.5" transform="rotate(134 171.8 81.8)" fill="#3e5c30"/>
<ellipse cx="157.6" cy="104.5" rx="0.8" ry="0.6" transform="rotate(163 157.6 104.5)" fill="#56763e"/>
<ellipse cx="149.6" cy="86.2" rx="1.7" ry="0.8" transform="rotate(104 149.6 86.2)" fill="#2e4a24"/>
<ellipse cx="159.0" cy="95.0" rx="1.5" ry="0.7" transform="rotate(6 159.0 95.0)" fill="#56763e"/>
<ellipse cx="154.8" cy="94.4" rx="0.8" ry="0.5" transform="rotate(67 154.8 94.4)" fill="#3e5c30"/>
<ellipse cx="145.1" cy="108.6" rx="1.1" ry="0.5" transform="rotate(161 145.1 108.6)" fill="#56763e"/>
<ellipse cx="152.9" cy="77.5" rx="1.4" ry="0.8" transform="rotate(171 152.9 77.5)" fill="#3e5c30"/>
<ellipse cx="165.0" cy="73.2" rx="1.1" ry="0.7" transform="rotate(128 165.0 73.2)" fill="#2e4a24"/>
<ellipse cx="147.9" cy="104.2" rx="1.2" ry="0.8" transform="rotate(86 147.9 104.2)" fill="#6e9050"/>
<ellipse cx="167.2" cy="108.3" rx="0.8" ry="0.5" transform="rotate(126 167.2 108.3)" fill="#56763e"/>
<ellipse cx="156.4" cy="106.3" rx="0.9" ry="0.4" transform="rotate(84 156.4 106.3)" fill="#2e4a24"/>
<ellipse cx="149.5" cy="100.3" rx="1.4" ry="0.6" transform="rotate(153 149.5 100.3)" fill="#6e9050"/>
<ellipse cx="167.6" cy="110.1" rx="1.3" ry="0.5" transform="rotate(157 167.6 110.1)" fill="#56763e"/>
<ellipse cx="169.6" cy="97.1" rx="1.3" ry="0.9" transform="rotate(172 169.6 97.1)" fill="#56763e"/>
<ellipse cx="152.3" cy="75.9" rx="1.4" ry="0.8" transform="rotate(56 152.3 75.9)" fill="#2e4a24"/>
<ellipse cx="170.0" cy="111.4" rx="0.8" ry="0.4" transform="rotate(81 170.0 111.4)" fill="#6e9050"/>
<ellipse cx="164.4" cy="106.7" rx="0.8" ry="0.4" transform="rotate(175 164.4 106.7)" fill="#56763e"/>
<ellipse cx="168.7" cy="88.9" rx="0.8" ry="0.4" transform="rotate(93 168.7 88.9)" fill="#56763e"/>
<ellipse cx="141.3" cy="81.7" rx="1.7" ry="0.6" transform="rotate(110 141.3 81.7)" fill="#2e4a24"/>
<ellipse cx="172.8" cy="76.7" rx="1.4" ry="0.6" transform="rotate(42 172.8 76.7)" fill="#6e9050"/>
<ellipse cx="149.2" cy="110.8" rx="1.1" ry="0.6" transform="rotate(6 149.2 110.8)" fill="#56763e"/>
<ellipse cx="155.0" cy="74.1" rx="1.3" ry="0.6" transform="rotate(59 155.0 74.1)" fill="#6e9050"/>
<ellipse cx="161.0" cy="75.1" rx="0.8" ry="0.3" transform="rotate(47 161.0 75.1)" fill="#2e4a24"/>
<ellipse cx="171.8" cy="106.3" rx="0.8" ry="0.5" transform="rotate(137 171.8 106.3)" fill="#3e5c30"/>
<ellipse cx="171.3" cy="80.2" rx="1.2" ry="0.5" transform="rotate(125 171.3 80.2)" fill="#2e4a24"/>
<ellipse cx="157.8" cy="96.2" rx="1.6" ry="0.6" transform="rotate(2 157.8 96.2)" fill="#56763e"/>
<ellipse cx="144.2" cy="81.1" rx="1.6" ry="0.6" transform="rotate(143 144.2 81.1)" fill="#56763e"/>
<ellipse cx="155.9" cy="95.6" rx="0.7" ry="0.4" transform="rotate(110 155.9 95.6)" fill="#2e4a24"/>
<ellipse cx="138.4" cy="79.3" rx="1.4" ry="0.5" transform="rotate(19 138.4 79.3)" fill="#6e9050"/>
<ellipse cx="162.6" cy="85.9" rx="1.1" ry="0.6" transform="rotate(6 162.6 85.9)" fill="#56763e"/>
<ellipse cx="136.7" cy="89.0" rx="0.8" ry="0.4" transform="rotate(83 136.7 89.0)" fill="#3e5c30"/>
<ellipse cx="172.5" cy="96.8" rx="0.9" ry="0.5" transform="rotate(58 172.5 96.8)" fill="#3e5c30"/>
<ellipse cx="167.9" cy="81.0" rx="1.2" ry="0.6" transform="rotate(156 167.9 81.0)" fill="#2e4a24"/>
<ellipse cx="145.3" cy="80.8" rx="1.2" ry="0.6" transform="rotate(40 145.3 80.8)" fill="#3e5c30"/>
<ellipse cx="143.3" cy="83.8" rx="0.8" ry="0.4" transform="rotate(122 143.3 83.8)" fill="#6e9050"/>
<ellipse cx="143.7" cy="73.0" rx="1.3" ry="0.5" transform="rotate(154 143.7 73.0)" fill="#6e9050"/>
<ellipse cx="147.1" cy="88.5" rx="1.4" ry="0.6" transform="rotate(66 147.1 88.5)" fill="#2e4a24"/>
<ellipse cx="160.5" cy="94.6" rx="0.8" ry="0.3" transform="rotate(46 160.5 94.6)" fill="#2e4a24"/>
<ellipse cx="145.8" cy="97.2" rx="1.2" ry="0.6" transform="rotate(126 145.8 97.2)" fill="#3e5c30"/>
<ellipse cx="152.3" cy="91.7" rx="1.0" ry="0.5" transform="rotate(169 152.3 91.7)" fill="#3e5c30"/>
<ellipse cx="149.3" cy="83.5" rx="1.7" ry="0.6" transform="rotate(4 149.3 83.5)" fill="#3e5c30"/>
<ellipse cx="147.9" cy="80.5" rx="0.9" ry="0.4" transform="rotate(67 147.9 80.5)" fill="#3e5c30"/>
<ellipse cx="157.3" cy="97.4" rx="1.2" ry="0.4" transform="rotate(81 157.3 97.4)" fill="#2e4a24"/>
<ellipse cx="155.3" cy="76.9" rx="1.4" ry="0.9" transform="rotate(156 155.3 76.9)" fill="#2e4a24"/>
<ellipse cx="144.5" cy="110.3" rx="1.1" ry="0.7" transform="rotate(33 144.5 110.3)" fill="#6e9050"/>
<ellipse cx="155.7" cy="110.1" rx="1.3" ry="0.9" transform="rotate(19 155.7 110.1)" fill="#6e9050"/>
<ellipse cx="141.1" cy="83.9" rx="0.8" ry="0.4" transform="rotate(8 141.1 83.9)" fill="#56763e"/>
<ellipse cx="169.3" cy="102.3" rx="0.8" ry="0.5" transform="rotate(98 169.3 102.3)" fill="#6e9050"/>
<ellipse cx="153.2" cy="73.4" rx="1.4" ry="0.6" transform="rotate(177 153.2 73.4)" fill="#56763e"/>
<ellipse cx="153.2" cy="83.7" rx="1.4" ry="0.8" transform="rotate(83 153.2 83.7)" fill="#6e9050"/>
<ellipse cx="169.8" cy="82.9" rx="1.2" ry="0.5" transform="rotate(53 169.8 82.9)" fill="#6e9050"/>
<ellipse cx="144.6" cy="110.8" rx="1.0" ry="0.6" transform="rotate(55 144.6 110.8)" fill="#2e4a24"/>
<ellipse cx="172.9" cy="83.5" rx="1.7" ry="1.2" transform="rotate(77 172.9 83.5)" fill="#56763e"/>
<ellipse cx="154.4" cy="77.7" rx="1.4" ry="0.6" transform="rotate(56 154.4 77.7)" fill="#2e4a24"/>
<ellipse cx="156.2" cy="91.5" rx="1.4" ry="0.7" transform="rotate(69 156.2 91.5)" fill="#2e4a24"/>
 </g>
 <g id="ezviz">
  <ellipse cx="2.9" cy="3.7" rx="1.8" ry="3.3" transform="rotate(-20 2.9 3.7)"/>
  <ellipse cx="8.8" cy="3.4" rx="2.8" ry="2.1" transform="rotate(20 8.8 3.4)"/>
  <ellipse cx="3.4" cy="9" rx="3.1" ry="2.3" transform="rotate(20 3.4 9)"/>
  <ellipse cx="9" cy="8.8" rx="1.9" ry="2.9" transform="rotate(-20 9 8.8)"/>
  <g transform="translate(13.9 9.3) scale(1.13 1)"><text font-family="Liberation Sans" font-size="8.6" letter-spacing="0.15">EZVIZ</text></g>
 </g>
</defs>
<!-- ========== PANEL 1 ========== -->
<rect x="0" y="0" width="341" height="27.6" fill="#767676"/><rect x="0" y="26" width="341" height="1.6" fill="#6c6c6c"/>
<rect x="0" y="80.6" width="341" height="1.3" fill="#e4e4e4"/><rect x="0" y="81.9" width="341" height="3" fill="#000" fill-opacity="0.015"/>
<rect x="0" y="744.5" width="341" height="15" fill="#f5f5f5"/>
<rect x="119" y="750" width="103" height="4" rx="2" fill="#9e9e9e"/>
<path d="M28.5 48 L22 54 L28.5 60.5" fill="none" stroke="#222" stroke-width="1.5"/>
<!-- toggle -->
<rect x="290" y="107" width="37" height="22" rx="11" fill="#e0e0e0"/>
<circle cx="300.5" cy="118" r="10" fill="#fff" stroke="#c4c4c4" stroke-width="1"/>
<path d="M322.5 250.5 L327 255 L322.5 259.5" fill="none" stroke="#bdbdbd" stroke-width="1.2"/>
<!-- ========== PANEL 2 ========== -->
<rect x="341" y="0" width="342" height="27.6" fill="#767676"/><rect x="341" y="26" width="342" height="1.6" fill="#6c6c6c"/>
<rect x="341" y="0" width="1" height="27" fill="#888"/>
<g transform="translate(426 160)"><use href="#photo"/></g>
<rect x="341" y="81" width="85" height="192" fill="#7462b6"/>
<rect x="426" y="81" width="174" height="79" fill="#b38a1e"/>
<rect x="599" y="81" width="84" height="192" fill="#5a72b6"/>
<g transform="translate(346 88)" fill="#c9bdf2" stroke="#c9bdf2" stroke-width="0.3"><use href="#ezviz"/></g>
<path d="M370.5 48 L364 54 L370.5 60.5" fill="none" stroke="#222" stroke-width="1.5"/>
<!-- plus circle -->
<circle cx="428.5" cy="303.4" r="9.7" fill="none" stroke="#111" stroke-width="1.6"/>
<path d="M428.5 298 V309 M423 303.5 H434" stroke="#111" stroke-width="1.6"/>
<!-- trash -->
<g fill="none" stroke="#c4c4c4" stroke-width="1.3">
 <path d="M591 298.5 H606.5"/>
 <path d="M595.5 298.5 Q595.5 294.8 598.8 294.8 Q602 294.8 602 298.5"/>
 <path d="M593 298.5 V311 Q593 313.3 595.3 313.3 H602.3 Q604.6 313.3 604.6 311 V298.5"/>
 <path d="M597 302 V309 M601 302 V309"/>
</g>
<rect x="341" y="390" width="342" height="5" fill="#f4f4f4"/>
<rect x="341" y="744.5" width="342" height="15" fill="#f5f5f5"/>
<rect x="460" y="750" width="103" height="4" rx="2" fill="#9e9e9e"/>
<!-- ========== PANEL 3 ========== -->
<rect x="683" y="0" width="341" height="27.6" fill="#343434"/><rect x="683" y="26" width="341" height="1.6" fill="#2f2f2f"/>
<rect x="683" y="27.6" width="341" height="191.4" fill="#3e3e40"/>
<g transform="translate(767 107)"><use href="#photo"/></g>
<g transform="translate(687 34)" fill="#f0f0f0" stroke="#f0f0f0" stroke-width="0.3"><use href="#ezviz"/></g>
<rect x="683" y="744.5" width="341" height="15" fill="#f5f5f5"/>
<rect x="801" y="750" width="103" height="4" rx="2" fill="#9e9e9e"/>


<defs><clipPath id="tsclipA"><rect x="341" y="250" width="85" height="23"/></clipPath><clipPath id="tsclipB"><rect x="426" y="250" width="173" height="23"/></clipPath></defs>
<g clip-path="url(#tsclipA)"><g transform="translate(356.2 267.4) scale(0.745 1)"><text font-family="Liberation Mono" font-weight="700" font-size="9.6" fill="#d2c6f6" xml:space="preserve">29-06-2022 17:07:20  (S)</text></g></g>
<g clip-path="url(#tsclipB)"><g transform="translate(356.2 267.4) scale(0.745 1)"><text font-family="Liberation Mono" font-weight="700" font-size="9.6" fill="#fff" xml:space="preserve">29-06-2022 17:07:20  (S)</text></g></g>
<g transform="translate(697.6 214) scale(0.745 1)"><text font-family="Liberation Mono" font-weight="700" font-size="9.6" fill="#fff" xml:space="preserve">29-06-2022 17:07:45  (S)</text></g>
<!-- banner -->
<defs>
 <linearGradient id="bang" x1="0" y1="0" x2="1" y2="0">
  <stop offset="0" stop-color="#dae6fd"/><stop offset="0.55" stop-color="#cbdcfb"/><stop offset="1" stop-color="#bdd0f8"/>
 </linearGradient>
 <linearGradient id="redg" x1="0" y1="0" x2="1" y2="1">
  <stop offset="0" stop-color="#f86c6c"/><stop offset="1" stop-color="#f04444"/>
 </linearGradient>
 <clipPath id="banclip"><rect x="696.3" y="229.1" width="313.7" height="44.9" rx="8"/></clipPath>
 <linearGradient id="pillg" x1="0" y1="0" x2="1" y2="0">
  <stop offset="0" stop-color="#afc3fa"/><stop offset="1" stop-color="#5883f2"/>
 </linearGradient>
 <linearGradient id="cardg" x1="0" y1="1" x2="1" y2="0">
  <stop offset="0" stop-color="#7d8aa0"/><stop offset="0.35" stop-color="#8f9498"/><stop offset="0.6" stop-color="#8c8e86"/><stop offset="1" stop-color="#66786a"/>
 </linearGradient>
</defs>
<rect x="696.3" y="229.1" width="313.7" height="44.9" rx="8" fill="url(#bang)"/>
<defs><linearGradient id="cloudg" x1="0" y1="229" x2="0" y2="274" gradientUnits="userSpaceOnUse"><stop offset="0" stop-color="#e6eefe" stop-opacity="0.35"/><stop offset="1" stop-color="#e6eefe" stop-opacity="0.85"/></linearGradient></defs>
<g clip-path="url(#banclip)" fill="url(#cloudg)">
 <circle cx="897" cy="266" r="36"/>
 <circle cx="849" cy="292" r="36"/>
 <circle cx="965" cy="287" r="37"/>
 <circle cx="913" cy="302" r="40"/>
 <circle cx="1008" cy="282" r="30"/>
 <circle cx="945" cy="246" r="15"/>
</g>
<!-- cloud icon -->
<path d="M711 260 Q706.5 260 706.5 255 Q706.5 250.5 711 250.2 Q712.5 243.5 718 243.5 Q723.5 243.5 725 250 Q729.2 250.5 729.2 255 Q729.2 260 724.5 260 Z" fill="#fff"/>
<path d="M717.6 247.8 L713.8 252 H716.2 V255.8 H719 V252 H721.4 Z" fill="#5096f5"/>
<!-- free trial badge -->
<rect x="952.5" y="222" width="57" height="21" rx="10.5" fill="url(#redg)" stroke="#fff" stroke-width="1.6"/>
<!-- date nav -->
<path d="M711 322 L706 326 L711 330.5" fill="none" stroke="#111" stroke-width="1.6"/>
<rect x="720" y="312.3" width="58.8" height="27.6" rx="13.8" fill="#fff" stroke="#e6e6e6" stroke-width="1"/>
<path d="M788.5 322 L793 326.2 L788.5 330.5" fill="none" stroke="#b4b4b4" stroke-width="1.2"/>
<!-- segmented -->
<rect x="921" y="312.2" width="88" height="27.3" rx="8" fill="#f4f4f4"/>
<rect x="965" y="315.6" width="40.5" height="21.1" rx="9" fill="#fff"/>
<rect x="965" y="316.8" width="40.5" height="21.1" rx="9" fill="#000" fill-opacity="0.09"/>
<rect x="965" y="315.6" width="40.5" height="21.1" rx="9" fill="#fff"/>
<path d="M939.3 331.7 H950.6 Q953.4 331.7 953.4 328.6 Q953.4 325.7 950.5 325.5 Q949.8 320 945 320 Q941.4 320 940.2 323.6 Q936.7 324 936.7 327.8 Q936.7 331.7 939.3 331.7 Z" fill="#bdbdbd"/>
<path d="M980.8 319.5 H988 L990.7 322.3 V331.3 Q990.7 332.8 989.2 332.8 H981.1 Q979.6 332.8 979.6 331.3 V320.7 Q979.6 319.5 980.8 319.5 Z" fill="#5181f5"/>
<path d="M982.3 321 V324 M984.3 321 V324 M986.3 321 V324" stroke="#fff" stroke-width="1"/>
<!-- filter icon -->
<path d="M992.2 355.5 H1005.4 L1000.6 362.5 V369.5 Q1000.6 370.5 999.2 370.5 H998.3 Q997 370.5 997 369.5 V362.5 Z" fill="none" stroke="#111" stroke-width="1.7" stroke-linejoin="round"/>
<!-- timeline -->
<rect x="768.5" y="386" width="7" height="47" fill="#efefef"/>
<rect x="768.5" y="433" width="7" height="235" fill="#b9c9fb"/>
<rect x="761" y="509" width="6.5" height="1" fill="#b9c9fb"/>
<rect x="761" y="601" width="6.5" height="1" fill="#b9c9fb"/>
<rect x="697" y="419.3" width="66" height="27.7" rx="13.85" fill="url(#pillg)"/>
<path d="M748.6 431 H755.6 L752.1 435.8 Z" fill="#fff" stroke="#fff" stroke-width="0.4" stroke-linejoin="round"/>
<rect x="806.5" y="425.8" width="71" height="12" rx="3" fill="#e9e9e9"/>
<rect x="800" y="428.8" width="84" height="12" rx="3" fill="#d2d2d2"/>
<rect x="792" y="433.3" width="100" height="58.7" rx="5.5" fill="url(#cardg)"/>
<path d="M874.5 471.8 V483.8 Q874.5 485.3 876 484.5 L883 479.3 Q884 477.8 883 477.1 L876 472.0 Q874.5 470.8 874.5 471.8 Z" fill="#fff"/>
<rect x="806.5" y="499.8" width="71" height="12" rx="3" fill="#e9e9e9"/>
<rect x="800" y="502.8" width="84" height="12" rx="3" fill="#d2d2d2"/>
<rect x="792" y="507.3" width="100" height="58.7" rx="5.5" fill="url(#cardg)"/>
<path d="M874.5 545.8 V557.8 Q874.5 559.3 876 558.5 L883 553.3 Q884 551.8 883 551.1 L876 546.0 Q874.5 544.8 874.5 545.8 Z" fill="#fff"/>
<rect x="806.5" y="591.5" width="71" height="12" rx="3" fill="#e9e9e9"/>
<rect x="800" y="594.5" width="84" height="12" rx="3" fill="#d2d2d2"/>
<rect x="792" y="599.0" width="100" height="58.7" rx="5.5" fill="url(#cardg)"/>
<path d="M874.5 637.5 V649.5 Q874.5 651.0 876 650.2 L883 645.0 Q884 643.5 883 642.8 L876 637.7 Q874.5 636.5 874.5 637.5 Z" fill="#fff"/>
<rect x="763" y="432" width="261" height="1.6" fill="#5282f2"/>
<!-- fab -->
<circle cx="989" cy="638.3" r="20.6" fill="#fff" stroke="#4f7ff2" stroke-width="1.5"/>
<g fill="#4f7ff2"><rect x="982.2" y="631.6" width="5.9" height="5.9" rx="1.3"/><rect x="990" y="631.6" width="5.9" height="5.9" rx="1.3"/><rect x="982.2" y="639.4" width="5.9" height="5.9" rx="1.3"/><rect x="990" y="639.4" width="5.9" height="5.9" rx="1.3"/></g>
<!-- toolbar -->
<defs><linearGradient id="shadg" x1="0" y1="0" x2="0" y2="1"><stop offset="0" stop-color="#000" stop-opacity="0"/><stop offset="1" stop-color="#000" stop-opacity="0.05"/></linearGradient></defs>
<rect x="683" y="662" width="341" height="6" fill="url(#shadg)"/>
<rect x="683" y="668" width="341" height="76" fill="#fff"/>
<g fill="none" stroke="#222" stroke-width="1.6" stroke-linejoin="round">
 <path d="M713.5 684.5 L715 682 H719.5 L721 684.5 H724 Q726 684.5 726 686.5 V695.8 Q726 697.8 724 697.8 H709.8 Q707.8 697.8 707.8 695.8 V686.5 Q707.8 684.5 709.8 684.5 Z"/>
 <circle cx="717" cy="690.8" r="3.3"/>
 <rect x="776.8" y="689.6" width="12" height="10.5" rx="2"/>
 <path d="M789 693 L793.6 690.2 V699.4 L789 696.6"/>
 <rect x="849.8" y="686.5" width="7" height="11.5" rx="3.5"/>
 <path d="M847.3 693.8 Q847.3 700.4 853.3 700.4 Q859.3 700.4 859.3 693.8 M853.3 700.4 V703.5 M848.8 703.6 H857.8"/>
 <path d="M929 688.6 V703.4 H914.4 Z M929 703.4 L921.8 696"/>
 <path d="M990 686.8 Q995.8 687 995.8 694 V699.2 L997.8 701.4 H982.2 L984.2 699.2 V694 Q984.2 687 990 686.8 Z M988 702.5 Q990 705 992 702.5"/>
</g>

<defs>
 <g id="sbL">
  <rect x="0.2" y="14.6" width="9.5" height="9.3" rx="2" fill="#fff"/>
  <circle cx="3.3" cy="17.4" r="0.8" fill="#444"/>
  <path d="M2.2 22.2 L4.2 19.8 L5.4 21 L6.8 19.3 L7.8 22.2 Z" fill="#444"/>
 </g>
 <g id="sbC">
  <rect x="15" y="14.9" width="8.8" height="9" rx="2" fill="#fff"/>
  <circle cx="18" cy="18" r="1.25" fill="#2b8df2"/><circle cx="20.9" cy="18" r="1.25" fill="#6ec232"/>
  <circle cx="18" cy="21" r="1.25" fill="#e8226c"/><circle cx="20.9" cy="21" r="1.25" fill="#f6b600"/>
  <circle cx="22.6" cy="15.6" r="1.3" fill="#f23262"/>
  <path d="M35.6 13.8 A5.5 5.5 0 1 1 33.4 13.8" fill="none" stroke="#fff" stroke-width="1.3"/>
  <text x="34.4" y="21.5" font-family="Liberation Sans" font-size="6.2" font-weight="700" fill="#fff" stroke="#fff" stroke-width="0.15" text-anchor="middle" transform="translate(34.4 0) scale(0.92 1) translate(-34.4 0)">65</text>
 </g>
 <g id="sbR">
  <path d="M0.1 16.6 A8 8 0 0 1 11.7 16.6" fill="none" stroke="#fff" stroke-opacity="0.6" stroke-width="1.3"/>
  <path d="M1.55 18.4 A6.5 6.5 0 0 1 10.25 18.4" fill="none" stroke="#fff" stroke-width="1.4"/>
  <path d="M2.9 20.6 A4.1 4.1 0 0 1 8.9 20.6" fill="none" stroke="#fff" stroke-width="1.4"/>
  <circle cx="5.8" cy="22.2" r="1" fill="#fff"/>
  <path d="M7.6 24 L9 22 L10.4 24 Z" fill="#fff"/>
  <path d="M11 20 L13.4 20 L12.2 22 Z" fill="#fff"/>
  <rect x="17" y="21.9" width="1.4" height="1.9" fill="#fff"/>
  <rect x="19.2" y="19.1" width="1.4" height="4.7" fill="#fff"/>
  <rect x="21.7" y="16.6" width="1.4" height="7.2" fill="#fff"/>
  <rect x="24.1" y="14.1" width="1.5" height="9.7" fill="#fff"/>
  <path d="M55 17 Q55 14.3 58.2 14.3 Q61.4 14.3 61.4 17 V19 H55 Z" fill="#b4b4b4"/>
  <path d="M55 19 H61.4 V23.4 Q61.4 24.4 60.4 24.4 H56 Q55 24.4 55 23.4 Z" fill="#fff"/>
 </g>
 <linearGradient id="tailg" x1="0" y1="0" x2="1" y2="0"><stop offset="0" stop-color="#6a90f3"/><stop offset="1" stop-color="#6a90f3" stop-opacity="0"/></linearGradient>
 <linearGradient id="arrg" x1="0" y1="0" x2="1" y2="0"><stop offset="0" stop-color="#5a84f2"/><stop offset="1" stop-color="#8eacf6"/></linearGradient>
 <path id="hand" d="M0.4 1.2 Q1.6 -0.8 4.2 0.2 L13.8 7.2 Q14.2 4.6 16 4.2 Q17.6 1.8 19.8 2.2 Q22.2 -0.2 24.4 0.6 Q26.4 0.4 27.8 1.8 L32.8 6.6 Q36.8 10.4 37 16.4 Q37.2 22.6 32.6 27.2 Q29.4 29.2 25.6 28.9 L12.8 27.4 Q7.4 26.5 4.6 24.4 Q2 22.9 2.8 20.9 Q3.6 18.8 6.4 18.6 L11.4 18.2 L0.8 6.6 Q-0.8 3.4 0.4 1.2 Z" fill="#f8dfcc"/>
 <g id="dot">
  <circle r="7.4" fill="#d9e4fd"/>
  <circle r="6.2" fill="#cbdafc"/>
  <circle r="4.9" fill="#eef3fe"/>
  <circle r="3.8" fill="#5a88f2"/>
 </g>
</defs>
<use href="#sbL" x="49"/><use href="#sbC" x="49"/><use href="#sbR" x="267"/>
<use href="#sbC" x="376"/><use href="#sbR" x="608"/>
<use href="#sbL" x="731.6"/><use href="#sbC" x="731.6"/><use href="#sbR" x="949.5"/>
<!-- illustration 1 -->
<rect x="384.5" y="498" width="70.4" height="57.8" rx="5" fill="none" stroke="#8aa6f4" stroke-width="1.1" stroke-dasharray="1.1 1.85"/>
<defs><linearGradient id="lg1" x1="369" y1="0" x2="411" y2="0" gradientUnits="userSpaceOnUse"><stop offset="0" stop-color="#5f8af3"/><stop offset="0.3" stop-color="#90aef6"/><stop offset="1" stop-color="#a6bef8" stop-opacity="0"/></linearGradient></defs>
<path d="M369 525.5 L381.6 517.6 L380.1 522.9 Q398 522.4 411 529.4 Q398 527.6 380.1 527.9 L381.3 534 Z" fill="url(#lg1)"/>
<use href="#dot" x="428.5" y="535.2"/>
<use href="#hand" x="428.5" y="535.2"/>
<!-- illustration 2 -->
<rect x="548.6" y="492.6" width="57.2" height="41.6" rx="5" fill="none" stroke="#8aa6f4" stroke-width="1.1" stroke-dasharray="1.1 1.85"/>
<defs>
 <linearGradient id="ur" x1="609.5" y1="523.7" x2="626.9" y2="507.1" gradientUnits="userSpaceOnUse"><stop offset="0" stop-color="#7c9ef5" stop-opacity="0"/><stop offset="0.45" stop-color="#a6bef8" stop-opacity="0.85"/><stop offset="1" stop-color="#5f8af3"/></linearGradient>
 <linearGradient id="dl" x1="592.9" y1="541.1" x2="575.5" y2="557.7" gradientUnits="userSpaceOnUse"><stop offset="0" stop-color="#7c9ef5" stop-opacity="0"/><stop offset="0.45" stop-color="#a6bef8" stop-opacity="0.85"/><stop offset="1" stop-color="#5f8af3"/></linearGradient>
</defs>
<path d="M626.9 507.1 L612.1 510.1 L616.2 512.6 L609.15 523.34 L609.85 524.06 L621.3 517.8 L623.5 521.3 Z" fill="url(#ur)"/>
<path d="M575.5 557.7 L590.3 554.7 L586.2 552.2 L593.25 541.46 L592.55 540.74 L581.1 547.0 L578.9 543.5 Z" fill="url(#dl)"/>
<use href="#dot" x="604.4" y="532"/>
<use href="#hand" x="604.4" y="532"/>
</svg>

<span class="t" style="left:12.84px;top:12.15px;font-size:14px;font-weight:400;color:#fff;transform:scaleX(0.8555);-webkit-text-stroke:0.4px #fff;">17:07</span>
<span class="t" style="left:297.00px;top:12.15px;font-size:14px;font-weight:700;color:#fff;transform:scaleX(0.8050);">65%</span>
<span class="t" style="left:86.00px;top:47.10px;font-size:15px;font-weight:700;color:#1b1b1b;transform:scaleX(0.9584);-webkit-text-stroke:0.1px #1b1b1b;">Sicherheitseinstellungen</span>
<span class="t" style="left:15.00px;top:111.08px;font-size:15.5px;font-weight:400;color:#1b1b1b;transform:scaleX(0.9695);-webkit-text-stroke:0.2px #1b1b1b;">Video-Verschlüsselung</span>
<span class="t" style="left:13.98px;top:144.00px;font-size:13px;font-weight:400;color:#8f8f8f;transform:scaleX(1.0205);-webkit-text-stroke:0.2px #8f8f8f;">Nach der Aktivierung ist für den Zugriff</span>
<span class="t" style="left:15.00px;top:159.30px;font-size:13px;font-weight:400;color:#8f8f8f;transform:scaleX(1.0045);-webkit-text-stroke:0.2px #8f8f8f;">auf Ihre Videos und Bilder ein Passwort</span>
<span class="t" style="left:15.00px;top:174.60px;font-size:13px;font-weight:400;color:#8f8f8f;transform:scaleX(1.0220);-webkit-text-stroke:0.2px #8f8f8f;">erforderlich. Das anfängliche Passwort ist der</span>
<span class="t" style="left:15.00px;top:190.00px;font-size:13px;font-weight:400;color:#8f8f8f;transform:scaleX(1.0080);-webkit-text-stroke:0.2px #8f8f8f;">Geräteverifizierungscode.</span>
<span class="t" style="left:14.04px;top:247.38px;font-size:15.5px;font-weight:400;color:#1b1b1b;transform:scaleX(0.9645);-webkit-text-stroke:0.2px #1b1b1b;">Privatsphäre-Bereich anpassen.</span>
<span class="t" style="left:14.00px;top:279.00px;font-size:13px;font-weight:400;color:#8f8f8f;transform:scaleX(1.0036);-webkit-text-stroke:0.2px #8f8f8f;">Bereich von Hand zeichnen, um die empfindliche</span>
<span class="t" style="left:13.98px;top:294.30px;font-size:13px;font-weight:400;color:#8f8f8f;transform:scaleX(1.0174);-webkit-text-stroke:0.2px #8f8f8f;">Position im Video zu blockieren und die Privatsphäre</span>
<span class="t" style="left:15.00px;top:309.60px;font-size:13px;font-weight:400;color:#8f8f8f;transform:scaleX(1.0134);-webkit-text-stroke:0.2px #8f8f8f;">zu gewährleisten.</span>
<span class="t" style="left:353.82px;top:12.15px;font-size:14px;font-weight:400;color:#fff;transform:scaleX(0.8847);-webkit-text-stroke:0.4px #fff;">17:07</span>
<span class="t" style="left:638.70px;top:12.15px;font-size:14px;font-weight:700;color:#fff;transform:scaleX(0.8050);">65%</span>
<span class="t" style="left:411.00px;top:47.20px;font-size:15px;font-weight:700;color:#1b1b1b;transform:scaleX(0.9386);-webkit-text-stroke:0.1px #1b1b1b;">Zeichnung des Privatsphäre…</span>
<span class="t" style="left:610.80px;top:48.50px;font-size:13px;font-weight:400;color:#c6c6c6;transform:scaleX(0.9776);-webkit-text-stroke:0.2px #c6c6c6;">Speichern</span>
<span class="t" style="left:372.00px;top:326.97px;font-size:11.5px;font-weight:400;color:#222;transform:scaleX(0.9508);-webkit-text-stroke:0.2px #222;">Einen Bereich</span>
<span class="t" style="left:372.00px;top:340.67px;font-size:11.5px;font-weight:400;color:#222;transform:scaleX(1.0022);-webkit-text-stroke:0.2px #222;">hinzufügen</span>
<span class="t" style="left:393.00px;top:359.96px;font-size:9.5px;font-weight:400;color:#222;transform:scaleX(0.9641);-webkit-text-stroke:0.15px #222;">Bis zu 4 Bereiche</span>
<span class="t" style="left:546.40px;top:326.64px;font-size:12px;font-weight:400;color:#c8c8c8;transform:scaleX(0.9259);-webkit-text-stroke:0.2px #c8c8c8;">Den Bereich löschen.</span>
<span class="t" style="left:356.80px;top:420.87px;font-size:11.5px;font-weight:400;color:#8a8a8a;transform:scaleX(0.9814);-webkit-text-stroke:0.2px #8a8a8a;">Der gezeichnete Bereich wird durch die Verdunkelungsschicht</span>
<span class="t" style="left:407.00px;top:433.97px;font-size:11.5px;font-weight:400;color:#8a8a8a;transform:scaleX(0.9859);-webkit-text-stroke:0.2px #8a8a8a;">in Live-Ansicht und Wiedergabe blockiert.</span>
<span class="t" style="left:352.00px;top:599.97px;font-size:11.5px;font-weight:400;color:#555;transform:scaleX(0.9679);-webkit-text-stroke:0.2px #555;">Bereich anklicken und ziehen.</span>
<span class="t" style="left:521.70px;top:592.77px;font-size:11.5px;font-weight:400;color:#555;transform:scaleX(0.9687);-webkit-text-stroke:0.2px #555;">Punkt zum Ändern der</span>
<span class="t" style="left:521.70px;top:605.77px;font-size:11.5px;font-weight:400;color:#555;transform:scaleX(0.9594);-webkit-text-stroke:0.2px #555;">Bereichsgröße ziehen.</span>
<span class="t" style="left:695.12px;top:12.15px;font-size:14px;font-weight:400;color:#fff;transform:scaleX(0.8760);-webkit-text-stroke:0.4px #fff;">17:07</span>
<span class="t" style="left:980.00px;top:12.15px;font-size:14px;font-weight:700;color:#fff;transform:scaleX(0.7875);">65%</span>
<span class="t" style="left:737.80px;top:239.82px;font-size:12.5px;font-weight:700;color:#1e2a5e;transform:scaleX(0.8534);-webkit-text-stroke:0.1px #1e2a5e;">CloudPlay</span>
<span class="t" style="left:737.80px;top:254.73px;font-size:10px;font-weight:400;color:#5b6690;transform:scaleX(0.9051);-webkit-text-stroke:0.15px #5b6690;">Unstealable</span>
<span class="t" style="left:962.00px;top:227.53px;font-size:10px;font-weight:400;color:#fff;transform:scaleX(0.9173);-webkit-text-stroke:0.15px #fff;">Free Trial</span>
<span class="t" style="left:728.40px;top:319.00px;font-size:15px;font-weight:700;color:#111;transform:scaleX(1.001);-webkit-text-stroke:0.1px #111;">Heute</span>
<span class="t" style="left:697.00px;top:357.57px;font-size:11.5px;font-weight:400;color:#222;transform:scaleX(0.9929);-webkit-text-stroke:0.2px #222;">26 Video(s) insgesamt</span>
<span class="t" style="left:702.00px;top:428.87px;font-size:11.5px;font-weight:400;color:#fff;transform:scaleX(0.9691);-webkit-text-stroke:0.2px #fff;">17:04:49</span>
<span class="t" style="left:797.30px;top:440.26px;font-size:9.5px;font-weight:400;color:#fff;transform:scaleX(0.9765);-webkit-text-stroke:0.15px #fff;">2 Clips</span>
<span class="t" style="left:797.50px;top:516.36px;font-size:9.5px;font-weight:400;color:#fff;transform:scaleX(0.9731);-webkit-text-stroke:0.15px #fff;">2 Clips</span>
<span class="t" style="left:797.50px;top:607.66px;font-size:9.5px;font-weight:400;color:#fff;transform:scaleX(0.9731);-webkit-text-stroke:0.15px #fff;">2 Clips</span>
<span class="t" style="left:722.80px;top:502.97px;font-size:13.5px;font-weight:400;color:#555;transform:scaleX(0.9977);-webkit-text-stroke:0.2px #555;">16:32</span>
<span class="t" style="left:722.82px;top:594.77px;font-size:13.5px;font-weight:400;color:#555;transform:scaleX(0.9760);-webkit-text-stroke:0.2px #555;">15:51</span>
<span class="t" style="left:685.50px;top:707.06px;font-size:9.5px;font-weight:400;color:#333;transform:scaleX(0.9957);-webkit-text-stroke:0.15px #333;">Schnappschus</span>
<span class="t" style="left:714.00px;top:717.56px;font-size:9.5px;font-weight:400;color:#333;transform:scaleX(1.001);-webkit-text-stroke:0.15px #333;">s</span>
<span class="t" style="left:761.00px;top:712.56px;font-size:9.5px;font-weight:400;color:#333;transform:scaleX(1.0144);-webkit-text-stroke:0.15px #333;">Aufnehmen</span>
<span class="t" style="left:833.50px;top:712.36px;font-size:9.5px;font-weight:400;color:#333;transform:scaleX(0.9880);-webkit-text-stroke:0.15px #333;">Sprechen</span>
<span class="t" style="left:899.70px;top:712.36px;font-size:9.5px;font-weight:400;color:#333;transform:scaleX(1.0317);-webkit-text-stroke:0.15px #333;">Auflösung</span>
<span class="t" style="left:977.40px;top:712.36px;font-size:9.5px;font-weight:400;color:#333;transform:scaleX(1.001);-webkit-text-stroke:0.15px #333;">Alarm</span>
</body></html>
